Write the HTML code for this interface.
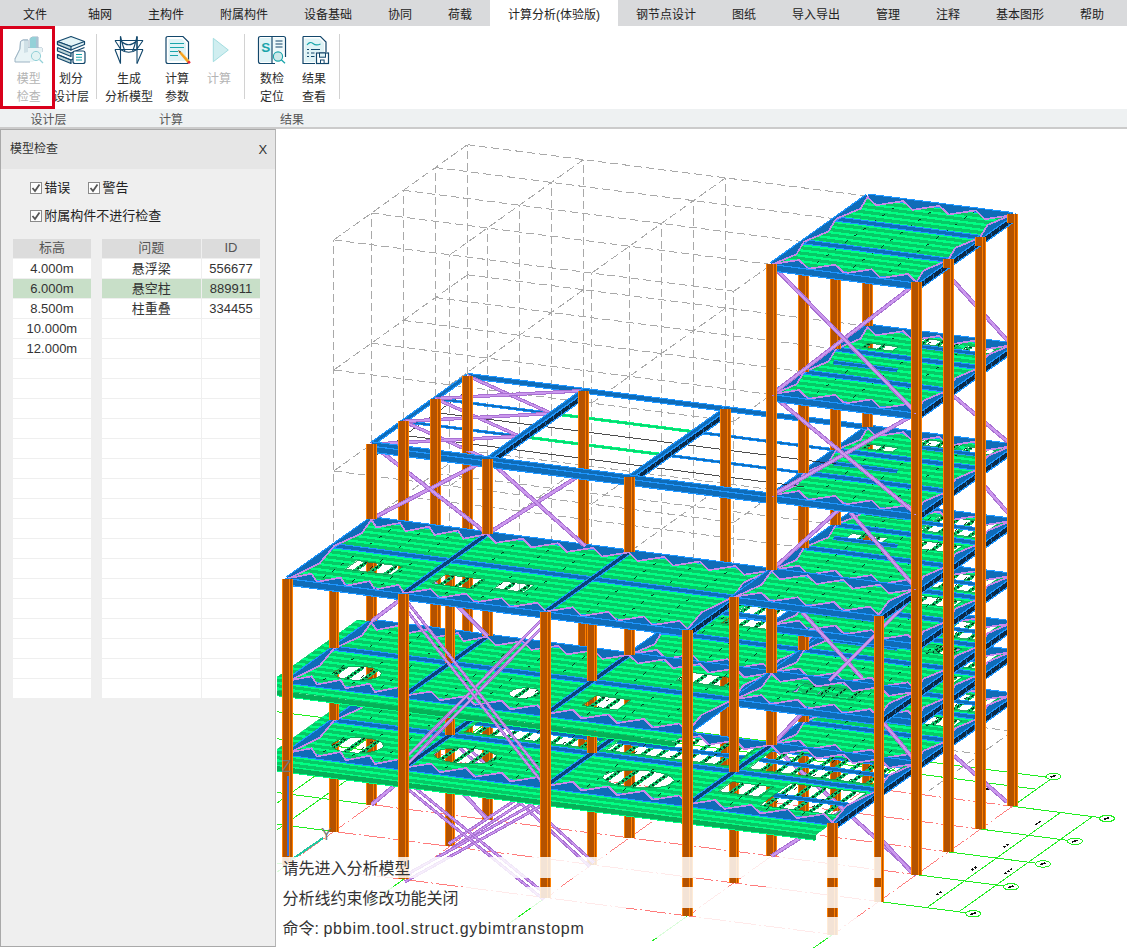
<!DOCTYPE html>
<html lang="zh"><head><meta charset="utf-8"><title>模型检查</title>
<style>
*{margin:0;padding:0;box-sizing:border-box}
html,body{width:1127px;height:948px;overflow:hidden;background:#fff;font-family:"Liberation Sans","Noto Sans CJK SC",sans-serif;}
#app{position:relative;width:1127px;height:948px;overflow:hidden;background:#fff}
.abs{position:absolute}
#tabbar{position:absolute;left:0;top:0;width:1127px;height:26px;background:#d9dadc}
#tabbar .act{position:absolute;left:490px;top:0;width:128px;height:26px;background:#fff}
.tab{position:absolute;top:2px;height:26px;line-height:26px;font-size:12px;color:#222;white-space:nowrap}
#ribbon{position:absolute;left:0;top:26px;width:1127px;height:83px;background:#fff}
#grp{position:absolute;left:0;top:108.5px;width:1127px;height:18.5px;background:#eef1f2}
#grpline{position:absolute;left:0;top:127px;width:1127px;height:2px;background:#cbcbcb}
.gl{position:absolute;top:111px;height:18px;line-height:18px;font-size:12px;color:#555;white-space:nowrap;transform:translateX(-50%)}
.rl{position:absolute;font-size:12px;line-height:17.5px;color:#2b2b2b;text-align:center;white-space:nowrap;transform:translateX(-50%)}
.rl.dis{color:#b4b4b4}
.sep{position:absolute;top:34px;width:1px;height:65px;background:#d2d2d2}
#redbox{position:absolute;left:0;top:26px;width:55px;height:83px;border:3px solid #d9001b;background:#fff}
#panel{position:absolute;left:0;top:129px;width:276px;height:818px;background:#efefef;border:1px solid #a9a9a9;border-right-color:#b5b5b5}
#ptitle{position:absolute;left:0;top:0;width:274px;height:39px;background:#e6e6e6}
#ptitle span{position:absolute;font-size:12px;color:#333;line-height:16px}
.cb{position:absolute;width:12px;height:12px;border:1px solid #8a8a8a;background:#fdfdfd}
.cbt{position:absolute;font-size:13px;color:#222;line-height:16px;white-space:nowrap}
.th{position:absolute;top:239.4px;height:18.4px;background:#dcdcdc;font-size:13px;color:#555;text-align:center;line-height:18px}
.td{position:absolute;height:19.2px;background:#fff;font-size:13px;color:#333;text-align:center;line-height:19px;white-space:nowrap}
.td.hl{background:#c8dfc8}
.band{position:absolute;left:277px;width:604px;height:21px;background:rgba(255,255,255,0.84)}
.cmd{position:absolute;left:282.5px;font-size:16px;color:#333;line-height:20px;white-space:nowrap}
</style></head><body><div id="app">
<svg class="abs" style="left:0;top:0" width="1127" height="948" viewBox="0 0 1127 948">
<defs><clipPath id="vp"><rect x="277" y="129" width="850" height="819"/></clipPath></defs>
<g clip-path="url(#vp)" shape-rendering="crispEdges">
<path d="M237.5 706.7 L467.5 736.3" fill="none" stroke="#22ee22" stroke-width="1"/>
<path d="M467.5 736.3 L1012.5 806.3" fill="none" stroke="#ff6e6e" stroke-width="0.9" stroke-dasharray="22 3 2 3"/>
<path d="M1012.5 806.3 L1099.5 817.5" fill="none" stroke="#22ee22" stroke-width="1"/>
<ellipse cx="1107" cy="818.5" rx="7.5" ry="3.2" fill="#fff" stroke="#22ee22" stroke-width="1"/>
<path d="M1104 819.3L1109.5 817.5" stroke="#111" stroke-width="1.6"/>
<path d="M205.5 729.5 L435.5 759.1" fill="none" stroke="#22ee22" stroke-width="1"/>
<path d="M435.5 759.1 L980.5 829.1" fill="none" stroke="#ff6e6e" stroke-width="0.9" stroke-dasharray="22 3 2 3"/>
<path d="M980.5 829.1 L1067.5 840.3" fill="none" stroke="#22ee22" stroke-width="1"/>
<ellipse cx="1075" cy="841.3" rx="7.5" ry="3.2" fill="#fff" stroke="#22ee22" stroke-width="1"/>
<path d="M1072 842.1L1077.5 840.3" stroke="#111" stroke-width="1.6"/>
<path d="M173.5 752.3 L403.5 781.9" fill="none" stroke="#22ee22" stroke-width="1"/>
<path d="M403.5 781.9 L948.5 851.9" fill="none" stroke="#ff6e6e" stroke-width="0.9" stroke-dasharray="22 3 2 3"/>
<path d="M948.5 851.9 L1035.5 863.1" fill="none" stroke="#22ee22" stroke-width="1"/>
<ellipse cx="1043" cy="864" rx="7.5" ry="3.2" fill="#fff" stroke="#22ee22" stroke-width="1"/>
<path d="M1040 864.8L1045.5 863" stroke="#111" stroke-width="1.6"/>
<path d="M141.5 775.1 L371.5 804.7" fill="none" stroke="#22ee22" stroke-width="1"/>
<path d="M371.5 804.7 L916.5 874.7" fill="none" stroke="#ff6e6e" stroke-width="0.9" stroke-dasharray="22 3 2 3"/>
<path d="M916.5 874.7 L1003.5 885.9" fill="none" stroke="#22ee22" stroke-width="1"/>
<ellipse cx="1011" cy="886.8" rx="7.5" ry="3.2" fill="#fff" stroke="#22ee22" stroke-width="1"/>
<path d="M1008 887.6L1013.5 885.8" stroke="#111" stroke-width="1.6"/>
<path d="M103.8 801.9 L333.8 831.5" fill="none" stroke="#22ee22" stroke-width="1"/>
<path d="M333.8 831.5 L878.8 901.5" fill="none" stroke="#ff6e6e" stroke-width="0.9" stroke-dasharray="22 3 2 3"/>
<path d="M878.8 901.5 L965.8 912.7" fill="none" stroke="#22ee22" stroke-width="1"/>
<ellipse cx="973.3" cy="913.7" rx="7.5" ry="3.2" fill="#fff" stroke="#22ee22" stroke-width="1"/>
<path d="M970.3 914.5L975.8 912.7" stroke="#111" stroke-width="1.6"/>
<path d="M57.5 834.9 L287.5 864.5" fill="none" stroke="#22ee22" stroke-width="1"/>
<path d="M287.5 864.5 L832.5 934.5" fill="none" stroke="#ff6e6e" stroke-width="0.9" stroke-dasharray="22 3 2 3"/>
<path d="M467.5 736.3 L287.5 864.5" fill="none" stroke="#ff6e6e" stroke-width="0.9" stroke-dasharray="22 3 2 3"/>
<path d="M287.5 864.5 L252.5 889.4" fill="none" stroke="#22ee22" stroke-width="1"/>
<path d="M467.5 736.3 L507.5 707.8" fill="none" stroke="#22ee22" stroke-width="1"/>
<path d="M583.5 751.2 L403.5 879.4" fill="none" stroke="#ff6e6e" stroke-width="0.9" stroke-dasharray="22 3 2 3"/>
<path d="M403.5 879.4 L368.5 904.3" fill="none" stroke="#22ee22" stroke-width="1"/>
<path d="M583.5 751.2 L623.5 722.7" fill="none" stroke="#22ee22" stroke-width="1"/>
<path d="M725.5 769.5 L545.5 897.6" fill="none" stroke="#ff6e6e" stroke-width="0.9" stroke-dasharray="22 3 2 3"/>
<path d="M545.5 897.6 L510.5 922.5" fill="none" stroke="#22ee22" stroke-width="1"/>
<path d="M725.5 769.5 L765.5 741" fill="none" stroke="#22ee22" stroke-width="1"/>
<path d="M867.5 787.7 L687.5 915.9" fill="none" stroke="#ff6e6e" stroke-width="0.9" stroke-dasharray="22 3 2 3"/>
<path d="M687.5 915.9 L652.5 940.8" fill="none" stroke="#22ee22" stroke-width="1"/>
<path d="M867.5 787.7 L907.5 759.2" fill="none" stroke="#22ee22" stroke-width="1"/>
<path d="M1012.5 806.3 L832.5 934.5" fill="none" stroke="#ff6e6e" stroke-width="0.9" stroke-dasharray="22 3 2 3"/>
<path d="M832.5 934.5 L797.5 959.4" fill="none" stroke="#22ee22" stroke-width="1"/>
<path d="M1012.5 806.3 L1052.5 777.9" fill="none" stroke="#22ee22" stroke-width="1"/>
<path d="M1060.5 812.5 L926.8 907.7" fill="none" stroke="#22ee22" stroke-width="1"/>
<path d="M1092.5 816.6 L958.8 911.8" fill="none" stroke="#22ee22" stroke-width="1"/>
<path d="M451.5 714.1 L1036.5 789.2" fill="none" stroke="#22ee22" stroke-width="1"/>
<path d="M467.5 702.7 L1052.5 777.9" fill="none" stroke="#22ee22" stroke-width="1"/>
<ellipse cx="1053.5" cy="776.4" rx="7.5" ry="3.2" fill="#fff" stroke="#22ee22" stroke-width="1"/>
<path d="M1050.5 777.2L1056 775.4" stroke="#111" stroke-width="1.6"/>
<path d="M417.5 729.9 L217.5 872.3" fill="none" stroke="#22ee22" stroke-width="1"/>
<path d="M385.5 725.8 L185.5 868.2" fill="none" stroke="#22ee22" stroke-width="1"/>
<path d="M1035.5 824.6L1041.5 820.6" stroke="#111" stroke-width="1.8" stroke-dasharray="2.4 1.2"/>
<path d="M1003.5 847.4L1009.5 843.4" stroke="#111" stroke-width="1.8" stroke-dasharray="2.4 1.2"/>
<path d="M971.5 870.2L977.5 866.2" stroke="#111" stroke-width="1.8" stroke-dasharray="2.4 1.2"/>
<path d="M936.6 895L942.6 891" stroke="#111" stroke-width="1.8" stroke-dasharray="2.4 1.2"/>
<path d="M1004.5 873.9L1012.5 868.4" stroke="#111" stroke-width="1.8" stroke-dasharray="2.4 1.2"/>
<path d="M983.5 788.4L993.5 789.8" stroke="#111" stroke-width="1.8"/>
<path d="M467.5 530.5 L467.5 144.7M435.5 553.3 L435.5 167.5M403.5 576.1 L403.5 190.3M371.5 598.9 L371.5 213.1M333.8 625.7 L333.8 239.9M583.5 545.4 L583.5 159.6M551.5 568.2 L551.5 182.4M519.5 591 L519.5 205.2M487.5 613.8 L487.5 228M449.8 640.6 L449.8 254.8M725.5 563.7 L725.5 177.9M693.5 586.4 L693.5 200.6M661.5 609.2 L661.5 223.4M629.5 632 L629.5 246.2M591.8 658.8 L591.8 273M867.5 581.9 L867.5 196.1M835.5 604.7 L835.5 218.9M803.5 627.5 L803.5 241.7M771.5 650.3 L771.5 264.5M733.8 677.1 L733.8 291.3M467.5 450.5 L867.5 501.9M435.5 473.3 L835.5 524.7M403.5 496.1 L803.5 547.5M371.5 518.9 L771.5 570.3M333.8 545.7 L733.8 597.1M467.5 450.5 L333.8 545.7M583.5 465.4 L449.8 560.6M725.5 483.7 L591.8 578.8M867.5 501.9 L733.8 597.1M467.5 375.8 L867.5 427.2M435.5 398.6 L835.5 450M403.5 421.4 L803.5 472.8M371.5 444.2 L771.5 495.6M333.8 471 L733.8 522.4M467.5 375.8 L333.8 471M583.5 390.7 L449.8 485.9M725.5 409 L591.8 504.1M867.5 427.2 L733.8 522.4M467.5 274.8 L867.5 326.2M435.5 297.6 L835.5 349M403.5 320.4 L803.5 371.8M371.5 343.2 L771.5 394.6M333.8 370 L733.8 421.4M467.5 274.8 L333.8 370M583.5 289.7 L449.8 384.9M725.5 308 L591.8 403.1M867.5 326.2 L733.8 421.4M467.5 144.7 L867.5 196.1M435.5 167.5 L835.5 218.9M403.5 190.3 L803.5 241.7M371.5 213.1 L771.5 264.5M333.8 239.9 L733.8 291.3M467.5 144.7 L333.8 239.9M583.5 159.6 L449.8 254.8M725.5 177.9 L591.8 273M867.5 196.1 L733.8 291.3M733.8 291.3 L771.5 264.5M1012.5 731.3 L929.3 790.6M896.5 716.4 L1012.5 731.3M879 741.1 L980.5 754.1" fill="none" stroke="#a9a9a9" stroke-width="1" stroke-dasharray="8 4"/>
<rect x="462.3" y="625" width="10.4" height="111.3" fill="#b45200"/>
<path d="M462.8 625V736.3M469.9 625V736.3M472.2 625V736.3" stroke="#ff8000" stroke-width="1" fill="none"/>
<rect x="578.3" y="639.9" width="10.4" height="111.3" fill="#b45200"/>
<path d="M578.8 639.9V751.2M585.9 639.9V751.2M588.2 639.9V751.2" stroke="#ff8000" stroke-width="1" fill="none"/>
<rect x="720.3" y="658.2" width="10.4" height="111.3" fill="#b45200"/>
<path d="M720.8 658.2V769.5M727.9 658.2V769.5M730.2 658.2V769.5" stroke="#ff8000" stroke-width="1" fill="none"/>
<rect x="862.3" y="676.4" width="10.4" height="111.3" fill="#b45200"/>
<path d="M862.8 676.4V787.7M869.9 676.4V787.7M872.2 676.4V787.7" stroke="#ff8000" stroke-width="1" fill="none"/>
<rect x="1007.3" y="695" width="10.4" height="111.3" fill="#b45200"/>
<path d="M1007.8 695V806.3M1014.9 695V806.3M1017.2 695V806.3" stroke="#ff8000" stroke-width="1" fill="none"/>
<rect x="430.3" y="647.8" width="10.4" height="111.3" fill="#b45200"/>
<path d="M430.8 647.8V759.1M437.9 647.8V759.1M440.2 647.8V759.1" stroke="#ff8000" stroke-width="1" fill="none"/>
<rect x="830.3" y="699.2" width="10.4" height="111.3" fill="#b45200"/>
<path d="M830.8 699.2V810.5M837.9 699.2V810.5M840.2 699.2V810.5" stroke="#ff8000" stroke-width="1" fill="none"/>
<rect x="975.3" y="717.8" width="10.4" height="111.3" fill="#b45200"/>
<path d="M975.8 717.8V829.1M982.9 717.8V829.1M985.2 717.8V829.1" stroke="#ff8000" stroke-width="1" fill="none"/>
<rect x="398.3" y="670.6" width="10.4" height="111.3" fill="#b45200"/>
<path d="M398.8 670.6V781.9M405.9 670.6V781.9M408.2 670.6V781.9" stroke="#ff8000" stroke-width="1" fill="none"/>
<rect x="798.3" y="722" width="10.4" height="111.3" fill="#b45200"/>
<path d="M798.8 722V833.3M805.9 722V833.3M808.2 722V833.3" stroke="#ff8000" stroke-width="1" fill="none"/>
<rect x="943.3" y="740.6" width="10.4" height="111.3" fill="#b45200"/>
<path d="M943.8 740.6V851.9M950.9 740.6V851.9M953.2 740.6V851.9" stroke="#ff8000" stroke-width="1" fill="none"/>
<rect x="366.3" y="693.4" width="10.4" height="111.3" fill="#b45200"/>
<path d="M366.8 693.4V804.7M373.9 693.4V804.7M376.2 693.4V804.7" stroke="#ff8000" stroke-width="1" fill="none"/>
<rect x="482.3" y="708.3" width="10.4" height="111.3" fill="#b45200"/>
<path d="M482.8 708.3V819.6M489.9 708.3V819.6M492.2 708.3V819.6" stroke="#ff8000" stroke-width="1" fill="none"/>
<rect x="624.3" y="726.5" width="10.4" height="111.3" fill="#b45200"/>
<path d="M624.8 726.5V837.8M631.9 726.5V837.8M634.2 726.5V837.8" stroke="#ff8000" stroke-width="1" fill="none"/>
<rect x="766.3" y="744.8" width="10.4" height="111.3" fill="#b45200"/>
<path d="M766.8 744.8V856.1M773.9 744.8V856.1M776.2 744.8V856.1" stroke="#ff8000" stroke-width="1" fill="none"/>
<rect x="911.3" y="763.4" width="10.4" height="111.3" fill="#b45200"/>
<path d="M911.8 763.4V874.7M918.9 763.4V874.7M921.2 763.4V874.7" stroke="#ff8000" stroke-width="1" fill="none"/>
<path d="M371.5 804.7 L487.5 708.3" fill="none" stroke="#a870d2" stroke-width="4.2" stroke-linecap="butt"/>
<path d="M371.5 804.7 L487.5 708.3" fill="none" stroke="#cc98ee" stroke-width="2.2"/>
<path d="M487.5 819.6 L371.5 693.4" fill="none" stroke="#a870d2" stroke-width="4.2" stroke-linecap="butt"/>
<path d="M487.5 819.6 L371.5 693.4" fill="none" stroke="#cc98ee" stroke-width="2.2"/>
<path d="M771.5 856.1 L916.5 763.4" fill="none" stroke="#a870d2" stroke-width="4.2" stroke-linecap="butt"/>
<path d="M771.5 856.1 L916.5 763.4" fill="none" stroke="#cc98ee" stroke-width="2.2"/>
<path d="M916.5 874.7 L771.5 744.8" fill="none" stroke="#a870d2" stroke-width="4.2" stroke-linecap="butt"/>
<path d="M916.5 874.7 L771.5 744.8" fill="none" stroke="#cc98ee" stroke-width="2.2"/>
<rect x="328.6" y="720.2" width="10.4" height="111.3" fill="#b45200"/>
<path d="M329.1 720.2V831.5M336.2 720.2V831.5M338.5 720.2V831.5" stroke="#ff8000" stroke-width="1" fill="none"/>
<rect x="444.6" y="735.1" width="10.4" height="111.3" fill="#b45200"/>
<path d="M445.1 735.1V846.4M452.2 735.1V846.4M454.5 735.1V846.4" stroke="#ff8000" stroke-width="1" fill="none"/>
<rect x="586.6" y="753.3" width="10.4" height="111.3" fill="#b45200"/>
<path d="M587.1 753.3V864.6M594.2 753.3V864.6M596.5 753.3V864.6" stroke="#ff8000" stroke-width="1" fill="none"/>
<rect x="728.6" y="771.6" width="10.4" height="111.3" fill="#b45200"/>
<path d="M729.1 771.6V882.9M736.2 771.6V882.9M738.5 771.6V882.9" stroke="#ff8000" stroke-width="1" fill="none"/>
<rect x="873.6" y="790.2" width="10.4" height="111.3" fill="#b45200"/>
<path d="M874.1 790.2V901.5M881.2 790.2V901.5M883.5 790.2V901.5" stroke="#ff8000" stroke-width="1" fill="none"/>
<path d="M448.3 844.1 L590.3 751" fill="none" stroke="#a870d2" stroke-width="3.2" stroke-linecap="butt"/>
<path d="M448.3 844.1 L590.3 751" fill="none" stroke="#cc98ee" stroke-width="1.2000000000000002"/>
<path d="M451.3 848.7 L593.3 755.6" fill="none" stroke="#a870d2" stroke-width="3.2" stroke-linecap="butt"/>
<path d="M451.3 848.7 L593.3 755.6" fill="none" stroke="#cc98ee" stroke-width="1.2000000000000002"/>
<path d="M589.9 866.7 L447.9 737.1" fill="none" stroke="#a870d2" stroke-width="3.2" stroke-linecap="butt"/>
<path d="M589.9 866.7 L447.9 737.1" fill="none" stroke="#cc98ee" stroke-width="1.2000000000000002"/>
<path d="M593.7 862.6 L451.7 733.1" fill="none" stroke="#a870d2" stroke-width="3.2" stroke-linecap="butt"/>
<path d="M593.7 862.6 L451.7 733.1" fill="none" stroke="#cc98ee" stroke-width="1.2000000000000002"/>
<rect x="282.3" y="753.2" width="10.4" height="111.3" fill="#b45200"/>
<path d="M282.8 753.2V864.5M289.9 753.2V864.5M292.2 753.2V864.5" stroke="#ff8000" stroke-width="1" fill="none"/>
<rect x="398.3" y="768.1" width="10.4" height="111.3" fill="#b45200"/>
<path d="M398.8 768.1V879.4M405.9 768.1V879.4M408.2 768.1V879.4" stroke="#ff8000" stroke-width="1" fill="none"/>
<rect x="540.3" y="786.3" width="10.4" height="111.3" fill="#b45200"/>
<path d="M540.8 786.3V897.6M547.9 786.3V897.6M550.2 786.3V897.6" stroke="#ff8000" stroke-width="1" fill="none"/>
<rect x="682.3" y="804.6" width="10.4" height="111.3" fill="#b45200"/>
<path d="M682.8 804.6V915.9M689.9 804.6V915.9M692.2 804.6V915.9" stroke="#ff8000" stroke-width="1" fill="none"/>
<rect x="827.3" y="823.2" width="10.4" height="111.3" fill="#b45200"/>
<path d="M827.8 823.2V934.5M834.9 823.2V934.5M837.2 823.2V934.5" stroke="#ff8000" stroke-width="1" fill="none"/>
<path d="M402.2 877 L544.2 797.9" fill="none" stroke="#a870d2" stroke-width="3.2" stroke-linecap="butt"/>
<path d="M402.2 877 L544.2 797.9" fill="none" stroke="#cc98ee" stroke-width="1.2000000000000002"/>
<path d="M404.8 881.8 L546.8 802.7" fill="none" stroke="#a870d2" stroke-width="3.2" stroke-linecap="butt"/>
<path d="M404.8 881.8 L546.8 802.7" fill="none" stroke="#cc98ee" stroke-width="1.2000000000000002"/>
<path d="M543.8 899.7 L401.8 784.2" fill="none" stroke="#a870d2" stroke-width="3.2" stroke-linecap="butt"/>
<path d="M543.8 899.7 L401.8 784.2" fill="none" stroke="#cc98ee" stroke-width="1.2000000000000002"/>
<path d="M547.2 895.5 L405.2 779.9" fill="none" stroke="#a870d2" stroke-width="3.2" stroke-linecap="butt"/>
<path d="M547.2 895.5 L405.2 779.9" fill="none" stroke="#cc98ee" stroke-width="1.2000000000000002"/>
<path d="M881.6 839.5 L913 874" fill="none" stroke="#a870d2" stroke-width="4.2" stroke-linecap="butt"/>
<path d="M881.6 839.5 L913 874" fill="none" stroke="#cc98ee" stroke-width="2.2"/>
<path d="M953.9 755.6 L1007 802" fill="none" stroke="#a870d2" stroke-width="4.2" stroke-linecap="butt"/>
<path d="M953.9 755.6 L1007 802" fill="none" stroke="#cc98ee" stroke-width="2.2"/>
<rect x="1007.3" y="695" width="10.4" height="111.3" fill="#b45200"/>
<path d="M1007.8 695V806.3M1014.9 695V806.3M1017.2 695V806.3" stroke="#ff8000" stroke-width="1" fill="none"/>
<rect x="911.3" y="763.4" width="10.4" height="111.3" fill="#b45200"/>
<path d="M911.8 763.4V874.7M918.9 763.4V874.7M921.2 763.4V874.7" stroke="#ff8000" stroke-width="1" fill="none"/>
<path d="M943.5 691.5L919.5 708.6M958.5 693.5L934.5 710.5M973.5 695.4L949.5 712.5M988.5 697.3L964.5 714.4M926.5 716.2L912.5 726.2M941.5 718.2L927.5 728.1M956.5 720.1L942.5 730.1M881.5 685.2L869.5 693.8M896.5 687.2L884.5 695.7M864.5 710L853.5 717.8M879.5 711.9L868.5 719.7" fill="none" stroke="#0fc468" stroke-width="3.6"/>
<path d="M943.5 691.5L919.5 708.6M958.5 693.5L934.5 710.5M973.5 695.4L949.5 712.5M988.5 697.3L964.5 714.4M926.5 716.2L912.5 726.2M941.5 718.2L927.5 728.1M956.5 720.1L942.5 730.1M881.5 685.2L869.5 693.8M896.5 687.2L884.5 695.7M864.5 710L853.5 717.8M879.5 711.9L868.5 719.7" fill="none" stroke="#053a1e" stroke-width="1.6" stroke-dasharray="2.5 2"/>
<clipPath id="c1"><path d="M867.5 676.4 L1012.5 695 L916.5 763.4 L771.5 744.8ZM939.5 690.7 L997.5 698.1 L977.5 712.4 L919.5 704.9ZM919.5 715 L961.5 720.4 L951.5 727.5 L909.5 722.1ZM873.5 683.9 L909.5 688.5 L901.5 694.2 L865.5 689.6ZM851.5 708 L887.5 712.6 L880.5 717.6 L844.5 712.9Z" clip-rule="evenodd"/></clipPath>
<g clip-path="url(#c1)">
<path d="M867.5 676.4 L1012.5 695 L916.5 763.4 L771.5 744.8Z" fill="#08c866"/>
<path d="M864.3 678.7L1009.3 697.3M857.8 683.3L1002.8 701.9M851.3 687.9L996.3 706.6M844.8 692.6L989.8 711.2M838.3 697.2L983.3 715.8M831.8 701.8L976.8 720.5M825.3 706.4L970.3 725.1M818.8 711.1L963.8 729.7M812.3 715.7L957.3 734.3M805.8 720.3L950.8 739M799.3 725L944.3 743.6M792.8 729.6L937.8 748.2M786.3 734.2L931.3 752.8M779.8 738.8L924.8 757.5M773.3 743.5L918.3 762.1" fill="none" stroke="#00ff84" stroke-width="2.3"/>
</g>
<path d="M939.5 690.7 L997.5 698.1 L977.5 712.4 L919.5 704.9Z" fill="none" stroke="#0a9a50" stroke-width="0.8"/>
<path d="M919.5 715 L961.5 720.4 L951.5 727.5 L909.5 722.1Z" fill="none" stroke="#0a9a50" stroke-width="0.8"/>
<path d="M873.5 683.9 L909.5 688.5 L901.5 694.2 L865.5 689.6Z" fill="none" stroke="#0a9a50" stroke-width="0.8"/>
<path d="M851.5 708 L887.5 712.6 L880.5 717.6 L844.5 712.9Z" fill="none" stroke="#0a9a50" stroke-width="0.8"/>
<path d="M903.8 681.1L807.8 749.4M940 685.7L844 754.1M976.2 690.4L880.2 758.7" fill="none" stroke="#06301c" stroke-width="0.9" stroke-dasharray="3.5 8"/>
<path d="M867.5 676.4 L1012.5 695" fill="none" stroke="#1e96ff" stroke-width="5.4"/>
<path d="M867.5 676.4 L1012.5 695" fill="none" stroke="#0f6cb8" stroke-width="3.2"/>
<path d="M835.5 699.2 L980.5 717.8" fill="none" stroke="#1e96ff" stroke-width="5.4"/>
<path d="M835.5 699.2 L980.5 717.8" fill="none" stroke="#0f6cb8" stroke-width="3.2"/>
<path d="M803.5 722 L948.5 740.6" fill="none" stroke="#1e96ff" stroke-width="5.4"/>
<path d="M803.5 722 L948.5 740.6" fill="none" stroke="#0f6cb8" stroke-width="3.2"/>
<path d="M771.5 744.8 L916.5 763.4" fill="none" stroke="#1e96ff" stroke-width="5.4"/>
<path d="M771.5 744.8 L916.5 763.4" fill="none" stroke="#0f6cb8" stroke-width="3.2"/>
<path d="M867.5 676.4 L771.5 744.8" fill="none" stroke="#1e96ff" stroke-width="5.4"/>
<path d="M867.5 676.4 L771.5 744.8" fill="none" stroke="#0f6cb8" stroke-width="3.2"/>
<path d="M1012.5 695 L916.5 763.4" fill="none" stroke="#1e96ff" stroke-width="5.4"/>
<path d="M1012.5 695 L916.5 763.4" fill="none" stroke="#0f6cb8" stroke-width="3.2"/>
<path d="M867 676.8 L876.1 685.5 L903.2 681.4ZM903.2 681.4 L912.4 690.2 L939.5 686.1ZM939.5 686.1 L948.6 694.8 L975.8 690.7ZM975.8 690.7 L984.9 699.5 L1012 695.4Z" fill="#0f6cb8"/>
<path d="M867 676.8 L876.1 685.5 L903.2 681.4 L912.4 690.2 L939.5 686.1 L948.6 694.8 L975.8 690.7 L984.9 699.5 L1012 695.4" fill="none" stroke="#c888ea" stroke-width="1.7" stroke-linejoin="round"/>
<path d="M772 744.4 L799.1 740.3 L808.2 749.1ZM808.2 749.1 L835.4 745 L844.5 753.7ZM844.5 753.7 L871.6 749.6 L880.8 758.4ZM880.8 758.4 L907.9 754.3 L917 763Z" fill="#0f6cb8"/>
<path d="M772 744.4 L799.1 740.3 L808.2 749.1 L835.4 745 L844.5 753.7 L871.6 749.6 L880.8 758.4 L907.9 754.3 L917 763" fill="none" stroke="#c888ea" stroke-width="1.7" stroke-linejoin="round"/>
<path d="M868 676.5 L860.5 688.9 L836 699.2Z" fill="#0f6cb8"/>
<path d="M868 676.5 L860.5 688.9 L836 699.2" fill="none" stroke="#c888ea" stroke-width="1.7" stroke-linejoin="round"/>
<path d="M1012 695 L987.5 705.3 L980 717.8Z" fill="#0f6cb8"/>
<path d="M1012 695 L987.5 705.3 L980 717.8" fill="none" stroke="#c888ea" stroke-width="1.7" stroke-linejoin="round"/>
<path d="M836 699.2 L828.5 711.7 L804 722Z" fill="#0f6cb8"/>
<path d="M836 699.2 L828.5 711.7 L804 722" fill="none" stroke="#c888ea" stroke-width="1.7" stroke-linejoin="round"/>
<path d="M980 717.8 L955.5 728.1 L948 740.5Z" fill="#0f6cb8"/>
<path d="M980 717.8 L955.5 728.1 L948 740.5" fill="none" stroke="#c888ea" stroke-width="1.7" stroke-linejoin="round"/>
<path d="M804 722 L796.5 734.5 L772 744.8Z" fill="#0f6cb8"/>
<path d="M804 722 L796.5 734.5 L772 744.8" fill="none" stroke="#c888ea" stroke-width="1.7" stroke-linejoin="round"/>
<path d="M948 740.5 L923.5 750.8 L916 763.3Z" fill="#0f6cb8"/>
<path d="M948 740.5 L923.5 750.8 L916 763.3" fill="none" stroke="#c888ea" stroke-width="1.7" stroke-linejoin="round"/>
<path d="M769.5 744.5 L918.5 763.6 L918.5 770.1 L769.5 751Z" fill="#0f6cb8"/>
<path d="M769.5 751 L918.5 770.1" fill="none" stroke="#1e96ff" stroke-width="1.2"/>
<path d="M769.5 744.5 L918.5 763.6" fill="none" stroke="#1e96ff" stroke-width="1.2"/>
<path d="M1016.5 693.9 L916.5 765.1 L916.5 771.6 L1016.5 700.4Z" fill="#0b2a48"/>
<path d="M1016.5 700.4 L916.5 771.6" fill="none" stroke="#1e96ff" stroke-width="1.3"/>
<path d="M1016.5 693.9 L916.5 765.1" fill="none" stroke="#1e96ff" stroke-width="1.3"/>
<path d="M1008.2 701.3L1008.2 704.8M999.8 707.2L999.8 710.7M991.5 713.2L991.5 716.7M983.2 719.1L983.2 722.6M974.8 725L974.8 728.5M966.5 731L966.5 734.5M958.2 736.9L958.2 740.4M949.8 742.8L949.8 746.3M941.5 748.8L941.5 752.3M933.2 754.7L933.2 758.2M924.8 760.6L924.8 764.1" fill="none" stroke="#1878d0" stroke-width="0.8"/>
<path d="M921.5 696.8 L982.5 704.6" fill="none" stroke="#1e96ff" stroke-width="4.4"/>
<path d="M921.5 696.8 L982.5 704.6" fill="none" stroke="#0f6cb8" stroke-width="2.6"/>
<path d="M833.5 712.4 L897.5 720.6" fill="none" stroke="#1e96ff" stroke-width="4.4"/>
<path d="M833.5 712.4 L897.5 720.6" fill="none" stroke="#0f6cb8" stroke-width="2.6"/>
<path d="M349.5 736.2L325.5 753.3M364.5 738.2L340.5 755.2M379.5 740.1L355.5 757.2M458.5 746.9L434.5 764M473.5 748.8L449.5 765.9M488.5 750.7L464.5 767.8M503.5 752.7L479.5 769.7M503.5 714.8L472.5 736.9M518.5 716.8L487.5 738.8M533.5 718.7L502.5 740.8M548.5 720.6L517.5 742.7M563.5 722.5L532.5 744.6M578.5 724.5L547.5 746.5M593.5 726.4L562.5 748.5M608.5 728.3L577.5 750.4M638.5 732.2L607.5 754.3M653.5 734.1L622.5 756.2M668.5 736L637.5 758.1M683.5 738L652.5 760M698.5 739.9L667.5 762M713.5 741.8L682.5 763.9M728.5 743.7L697.5 765.8M743.5 745.7L712.5 767.7M758.5 747.6L727.5 769.7M623.5 768.1L597.5 786.6M638.5 770L612.5 788.5M653.5 771.9L627.5 790.4M668.5 773.9L642.5 792.4M683.5 775.8L657.5 794.3M788.5 751.5L757.5 773.5M803.5 753.4L772.5 775.5M818.5 755.3L787.5 777.4M833.5 757.2L802.5 779.3M848.5 759.2L817.5 781.2M863.5 761.1L832.5 783.2M878.5 763L847.5 785.1M893.5 765L862.5 787M795.5 784.3L760.5 809.2M810.5 786.2L775.5 811.1M825.5 788.2L790.5 813.1M840.5 790.1L805.5 815M855.5 792L820.5 816.9M743.5 783.5L725.5 796.3M758.5 785.4L740.5 798.2M773.5 787.4L755.5 800.2" fill="none" stroke="#0fc468" stroke-width="3.6"/>
<path d="M349.5 736.2L325.5 753.3M364.5 738.2L340.5 755.2M379.5 740.1L355.5 757.2M458.5 746.9L434.5 764M473.5 748.8L449.5 765.9M488.5 750.7L464.5 767.8M503.5 752.7L479.5 769.7M503.5 714.8L472.5 736.9M518.5 716.8L487.5 738.8M533.5 718.7L502.5 740.8M548.5 720.6L517.5 742.7M563.5 722.5L532.5 744.6M578.5 724.5L547.5 746.5M593.5 726.4L562.5 748.5M608.5 728.3L577.5 750.4M638.5 732.2L607.5 754.3M653.5 734.1L622.5 756.2M668.5 736L637.5 758.1M683.5 738L652.5 760M698.5 739.9L667.5 762M713.5 741.8L682.5 763.9M728.5 743.7L697.5 765.8M743.5 745.7L712.5 767.7M758.5 747.6L727.5 769.7M623.5 768.1L597.5 786.6M638.5 770L612.5 788.5M653.5 771.9L627.5 790.4M668.5 773.9L642.5 792.4M683.5 775.8L657.5 794.3M788.5 751.5L757.5 773.5M803.5 753.4L772.5 775.5M818.5 755.3L787.5 777.4M833.5 757.2L802.5 779.3M848.5 759.2L817.5 781.2M863.5 761.1L832.5 783.2M878.5 763L847.5 785.1M893.5 765L862.5 787M795.5 784.3L760.5 809.2M810.5 786.2L775.5 811.1M825.5 788.2L790.5 813.1M840.5 790.1L805.5 815M855.5 792L820.5 816.9M743.5 783.5L725.5 796.3M758.5 785.4L740.5 798.2M773.5 787.4L755.5 800.2" fill="none" stroke="#053a1e" stroke-width="1.6" stroke-dasharray="2.5 2"/>
<path d="M475 723.2 L605 739.9" fill="none" stroke="#1e96ff" stroke-width="4.6"/>
<path d="M475 723.2 L605 739.9" fill="none" stroke="#0f6cb8" stroke-width="2.8"/>
<path d="M617 741.4 L747 758.2" fill="none" stroke="#1e96ff" stroke-width="4.6"/>
<path d="M617 741.4 L747 758.2" fill="none" stroke="#0f6cb8" stroke-width="2.8"/>
<path d="M759 759.7 L892 776.8" fill="none" stroke="#1e96ff" stroke-width="4.6"/>
<path d="M759 759.7 L892 776.8" fill="none" stroke="#0f6cb8" stroke-width="2.8"/>
<path d="M773 795.1 L852 805.3" fill="none" stroke="#1e96ff" stroke-width="4.6"/>
<path d="M773 795.1 L852 805.3" fill="none" stroke="#0f6cb8" stroke-width="2.8"/>
<clipPath id="c2"><path d="M357.5 691.6 L916.5 763.4 L815.5 835.3 L256.5 763.5ZM381.5 748.4 L383.4 746.1 L382.8 743.7 L379.7 741.4 L374.4 739.5 L367.5 738.2 L359.6 737.6 L351.5 737.8 L344 738.7 L337.8 740.2 L333.5 742.3 L331.6 744.6 L332.2 747 L335.3 749.3 L340.6 751.2 L347.5 752.5 L355.4 753.1 L363.5 752.9 L371 752 L377.2 750.5ZM495.5 759.7 L497.1 757.3 L495.6 754.8 L491.2 752.4 L484.3 750.3 L475.5 748.7 L465.7 747.9 L456 747.8 L447.1 748.6 L440.1 750 L435.5 752 L433.9 754.4 L435.4 756.9 L439.8 759.4 L446.7 761.4 L455.5 763 L465.3 763.8 L475 763.9 L483.9 763.2 L490.9 761.7ZM490.5 712.8 L616.5 729 L589.5 748.3 L463.5 732.1ZM632.5 731.1 L758.5 747.3 L731.5 766.5 L605.5 750.3ZM672.5 783.3 L674.2 780.7 L672.5 777.9 L667.4 775.2 L659.5 772.8 L649.5 771.1 L638.5 770.1 L627.4 770 L617.5 770.8 L609.6 772.4 L604.5 774.6 L602.8 777.2 L604.5 780 L609.6 782.7 L617.5 785 L627.5 786.8 L638.5 787.7 L649.6 787.8 L659.5 787.1 L667.4 785.5ZM774.5 749.3 L903.5 765.9 L876.5 785.1 L747.5 768.6ZM790.5 783.3 L865.5 793 L834.5 815 L759.5 805.4ZM731.5 781.6 L773.5 787 L759.5 797 L717.5 791.6Z" clip-rule="evenodd"/></clipPath>
<g clip-path="url(#c2)">
<path d="M357.5 691.6 L916.5 763.4 L815.5 835.3 L256.5 763.5Z" fill="#08c866"/>
<path d="M354.3 693.8L913.3 765.7M347.8 698.5L906.8 770.3M341.3 703.1L900.3 774.9M334.8 707.7L893.8 779.5M328.3 712.3L887.3 784.2M321.8 717L880.8 788.8M315.3 721.6L874.3 793.4M308.8 726.2L867.8 798.1M302.3 730.9L861.3 802.7M295.8 735.5L854.8 807.3M289.3 740.1L848.3 811.9M282.8 744.7L841.8 816.6M276.3 749.4L835.3 821.2M269.8 754L828.8 825.8M263.3 758.6L822.3 830.5M256.8 763.3L815.8 835.1" fill="none" stroke="#00ff84" stroke-width="2.3"/>
</g>
<path d="M381.5 748.4 L383.4 746.1 L382.8 743.7 L379.7 741.4 L374.4 739.5 L367.5 738.2 L359.6 737.6 L351.5 737.8 L344 738.7 L337.8 740.2 L333.5 742.3 L331.6 744.6 L332.2 747 L335.3 749.3 L340.6 751.2 L347.5 752.5 L355.4 753.1 L363.5 752.9 L371 752 L377.2 750.5Z" fill="none" stroke="#0a9a50" stroke-width="0.8"/>
<path d="M495.5 759.7 L497.1 757.3 L495.6 754.8 L491.2 752.4 L484.3 750.3 L475.5 748.7 L465.7 747.9 L456 747.8 L447.1 748.6 L440.1 750 L435.5 752 L433.9 754.4 L435.4 756.9 L439.8 759.4 L446.7 761.4 L455.5 763 L465.3 763.8 L475 763.9 L483.9 763.2 L490.9 761.7Z" fill="none" stroke="#0a9a50" stroke-width="0.8"/>
<path d="M490.5 712.8 L616.5 729 L589.5 748.3 L463.5 732.1Z" fill="none" stroke="#0a9a50" stroke-width="0.8"/>
<path d="M632.5 731.1 L758.5 747.3 L731.5 766.5 L605.5 750.3Z" fill="none" stroke="#0a9a50" stroke-width="0.8"/>
<path d="M672.5 783.3 L674.2 780.7 L672.5 777.9 L667.4 775.2 L659.5 772.8 L649.5 771.1 L638.5 770.1 L627.4 770 L617.5 770.8 L609.6 772.4 L604.5 774.6 L602.8 777.2 L604.5 780 L609.6 782.7 L617.5 785 L627.5 786.8 L638.5 787.7 L649.6 787.8 L659.5 787.1 L667.4 785.5Z" fill="none" stroke="#0a9a50" stroke-width="0.8"/>
<path d="M774.5 749.3 L903.5 765.9 L876.5 785.1 L747.5 768.6Z" fill="none" stroke="#0a9a50" stroke-width="0.8"/>
<path d="M790.5 783.3 L865.5 793 L834.5 815 L759.5 805.4Z" fill="none" stroke="#0a9a50" stroke-width="0.8"/>
<path d="M731.5 781.6 L773.5 787 L759.5 797 L717.5 791.6Z" fill="none" stroke="#0a9a50" stroke-width="0.8"/>
<path d="M400.5 697.1L316.5 756.9M429.5 700.8L345.5 760.6M458.5 704.5L374.5 764.3M523 712.8L439 772.6M558.5 717.4L474.5 777.2M594 721.9L510 781.8M665 731.1L581 790.9M700.5 735.6L616.5 795.4M736 740.2L652 800M807.8 749.4L723.8 809.2M844 754.1L760 813.9M880.2 758.7L796.2 818.5" fill="none" stroke="#06301c" stroke-width="0.9" stroke-dasharray="3.5 8"/>
<path d="M371.5 693.4 L916.5 763.4" fill="none" stroke="#1e96ff" stroke-width="5.4"/>
<path d="M371.5 693.4 L916.5 763.4" fill="none" stroke="#0f6cb8" stroke-width="3.2"/>
<path d="M333.8 720.2 L878.8 790.2" fill="none" stroke="#1e96ff" stroke-width="5.4"/>
<path d="M333.8 720.2 L878.8 790.2" fill="none" stroke="#0f6cb8" stroke-width="3.2"/>
<path d="M287.5 753.2 L832.5 823.2" fill="none" stroke="#1e96ff" stroke-width="5.4"/>
<path d="M287.5 753.2 L832.5 823.2" fill="none" stroke="#0f6cb8" stroke-width="3.2"/>
<path d="M371.5 693.4 L287.5 753.2" fill="none" stroke="#1e96ff" stroke-width="5.4"/>
<path d="M371.5 693.4 L287.5 753.2" fill="none" stroke="#0f6cb8" stroke-width="3.2"/>
<path d="M487.5 708.3 L403.5 768.1" fill="none" stroke="#1e96ff" stroke-width="5.4"/>
<path d="M487.5 708.3 L403.5 768.1" fill="none" stroke="#0c4278" stroke-width="3.2"/>
<path d="M629.5 726.5 L545.5 786.3" fill="none" stroke="#1e96ff" stroke-width="5.4"/>
<path d="M629.5 726.5 L545.5 786.3" fill="none" stroke="#0c4278" stroke-width="3.2"/>
<path d="M771.5 744.8 L687.5 804.6" fill="none" stroke="#1e96ff" stroke-width="5.4"/>
<path d="M771.5 744.8 L687.5 804.6" fill="none" stroke="#0c4278" stroke-width="3.2"/>
<path d="M916.5 763.4 L832.5 823.2" fill="none" stroke="#1e96ff" stroke-width="5.4"/>
<path d="M916.5 763.4 L832.5 823.2" fill="none" stroke="#0f6cb8" stroke-width="3.2"/>
<path d="M371 693.7 L376.5 702 L400 697.4ZM400 697.4 L405.5 705.7 L429 701.2ZM429 701.2 L434.5 709.4 L458 704.9ZM458 704.9 L463.5 713.2 L487 708.6Z" fill="#0f6cb8"/>
<path d="M371 693.7 L376.5 702 L400 697.4 L405.5 705.7 L429 701.2 L434.5 709.4 L458 704.9 L463.5 713.2 L487 708.6" fill="none" stroke="#c888ea" stroke-width="1.7" stroke-linejoin="round"/>
<path d="M288 752.8 L311.5 748.3 L317 756.5ZM317 756.5 L340.5 752 L346 760.3ZM346 760.3 L369.5 755.7 L375 764ZM375 764 L398.5 759.4 L404 767.7Z" fill="#0f6cb8"/>
<path d="M288 752.8 L311.5 748.3 L317 756.5 L340.5 752 L346 760.3 L369.5 755.7 L375 764 L398.5 759.4 L404 767.7" fill="none" stroke="#c888ea" stroke-width="1.7" stroke-linejoin="round"/>
<path d="M487 708.6 L495.8 717.3 L522.5 713.2ZM522.5 713.2 L531.2 721.9 L558 717.7ZM558 717.7 L566.8 726.4 L593.5 722.3ZM593.5 722.3 L602.2 731 L629 726.9Z" fill="#0f6cb8"/>
<path d="M487 708.6 L495.8 717.3 L522.5 713.2 L531.2 721.9 L558 717.7 L566.8 726.4 L593.5 722.3 L602.2 731 L629 726.9" fill="none" stroke="#c888ea" stroke-width="1.7" stroke-linejoin="round"/>
<path d="M404 767.7 L430.8 763.6 L439.5 772.3ZM439.5 772.3 L466.2 768.1 L475 776.8ZM475 776.8 L501.8 772.7 L510.5 781.4ZM510.5 781.4 L537.2 777.3 L546 786Z" fill="#0f6cb8"/>
<path d="M404 767.7 L430.8 763.6 L439.5 772.3 L466.2 768.1 L475 776.8 L501.8 772.7 L510.5 781.4 L537.2 777.3 L546 786" fill="none" stroke="#c888ea" stroke-width="1.7" stroke-linejoin="round"/>
<path d="M629 726.9 L637.8 735.5 L664.5 731.4ZM664.5 731.4 L673.2 740.1 L700 736ZM700 736 L708.8 744.7 L735.5 740.5ZM735.5 740.5 L744.2 749.2 L771 745.1Z" fill="#0f6cb8"/>
<path d="M629 726.9 L637.8 735.5 L664.5 731.4 L673.2 740.1 L700 736 L708.8 744.7 L735.5 740.5 L744.2 749.2 L771 745.1" fill="none" stroke="#c888ea" stroke-width="1.7" stroke-linejoin="round"/>
<path d="M546 786 L572.8 781.8 L581.5 790.5ZM581.5 790.5 L608.2 786.4 L617 795.1ZM617 795.1 L643.8 791 L652.5 799.6ZM652.5 799.6 L679.2 795.5 L688 804.2Z" fill="#0f6cb8"/>
<path d="M546 786 L572.8 781.8 L581.5 790.5 L608.2 786.4 L617 795.1 L643.8 791 L652.5 799.6 L679.2 795.5 L688 804.2" fill="none" stroke="#c888ea" stroke-width="1.7" stroke-linejoin="round"/>
<path d="M771 745.1 L780.1 753.8 L807.2 749.8ZM807.2 749.8 L816.4 758.5 L843.5 754.4ZM843.5 754.4 L852.6 763.2 L879.8 759.1ZM879.8 759.1 L888.9 767.8 L916 763.7Z" fill="#0f6cb8"/>
<path d="M771 745.1 L780.1 753.8 L807.2 749.8 L816.4 758.5 L843.5 754.4 L852.6 763.2 L879.8 759.1 L888.9 767.8 L916 763.7" fill="none" stroke="#c888ea" stroke-width="1.7" stroke-linejoin="round"/>
<path d="M688 804.2 L715.1 800.1 L724.2 808.9ZM724.2 808.9 L751.4 804.8 L760.5 813.5ZM760.5 813.5 L787.6 809.4 L796.8 818.2ZM796.8 818.2 L823.9 814.1 L833 822.8Z" fill="#0f6cb8"/>
<path d="M688 804.2 L715.1 800.1 L724.2 808.9 L751.4 804.8 L760.5 813.5 L787.6 809.4 L796.8 818.2 L823.9 814.1 L833 822.8" fill="none" stroke="#c888ea" stroke-width="1.7" stroke-linejoin="round"/>
<path d="M372 693.4 L361.6 707.9 L334.3 720.3Z" fill="#0f6cb8"/>
<path d="M372 693.4 L361.6 707.9 L334.3 720.3" fill="none" stroke="#c888ea" stroke-width="1.7" stroke-linejoin="round"/>
<path d="M916 763.3 L888.6 775.6 L878.3 790.2Z" fill="#0f6cb8"/>
<path d="M916 763.3 L888.6 775.6 L878.3 790.2" fill="none" stroke="#c888ea" stroke-width="1.7" stroke-linejoin="round"/>
<path d="M334.3 720.3 L319.6 737.8 L288 753.2Z" fill="#0f6cb8"/>
<path d="M334.3 720.3 L319.6 737.8 L288 753.2" fill="none" stroke="#c888ea" stroke-width="1.7" stroke-linejoin="round"/>
<path d="M878.3 790.2 L846.6 805.6 L832 823.1Z" fill="#0f6cb8"/>
<path d="M878.3 790.2 L846.6 805.6 L832 823.1" fill="none" stroke="#c888ea" stroke-width="1.7" stroke-linejoin="round"/>
<path d="M256.5 763.5 L815.5 835.3 L815.5 840.3 L256.5 768.5Z" fill="#06b058"/>
<path d="M256.5 768.5 L815.5 840.3" fill="none" stroke="#00ff84" stroke-width="1"/>
<path d="M920.5 762.2 L832.5 824.9 L832.5 831.4 L920.5 768.7Z" fill="#0b2a48"/>
<path d="M920.5 768.7 L832.5 831.4" fill="none" stroke="#1e96ff" stroke-width="1.3"/>
<path d="M920.5 762.2 L832.5 824.9" fill="none" stroke="#1e96ff" stroke-width="1.3"/>
<path d="M912.5 769.4L912.5 772.9M904.5 775.1L904.5 778.6M896.5 780.8L896.5 784.3M888.5 786.5L888.5 790M880.5 792.2L880.5 795.7M872.5 797.9L872.5 801.4M864.5 803.6L864.5 807.1M856.5 809.3L856.5 812.8M848.5 815L848.5 818.5M840.5 820.7L840.5 824.2" fill="none" stroke="#1878d0" stroke-width="0.8"/>
<rect x="282.3" y="753.2" width="10.4" height="111.3" fill="#b45200"/>
<path d="M282.8 753.2V864.5M289.9 753.2V864.5M292.2 753.2V864.5" stroke="#ff8000" stroke-width="1" fill="none"/>
<rect x="398.3" y="768.1" width="10.4" height="111.3" fill="#b45200"/>
<path d="M398.8 768.1V879.4M405.9 768.1V879.4M408.2 768.1V879.4" stroke="#ff8000" stroke-width="1" fill="none"/>
<rect x="540.3" y="786.3" width="10.4" height="111.3" fill="#b45200"/>
<path d="M540.8 786.3V897.6M547.9 786.3V897.6M550.2 786.3V897.6" stroke="#ff8000" stroke-width="1" fill="none"/>
<rect x="682.3" y="804.6" width="10.4" height="111.3" fill="#b45200"/>
<path d="M682.8 804.6V915.9M689.9 804.6V915.9M692.2 804.6V915.9" stroke="#ff8000" stroke-width="1" fill="none"/>
<rect x="827.3" y="823.2" width="10.4" height="111.3" fill="#b45200"/>
<path d="M827.8 823.2V934.5M834.9 823.2V934.5M837.2 823.2V934.5" stroke="#ff8000" stroke-width="1" fill="none"/>
<rect x="1007.3" y="695" width="10.4" height="111.3" fill="#b45200"/>
<path d="M1007.8 695V806.3M1014.9 695V806.3M1017.2 695V806.3" stroke="#ff8000" stroke-width="1" fill="none"/>
<rect x="975.3" y="717.8" width="10.4" height="111.3" fill="#b45200"/>
<path d="M975.8 717.8V829.1M982.9 717.8V829.1M985.2 717.8V829.1" stroke="#ff8000" stroke-width="1" fill="none"/>
<rect x="943.3" y="740.6" width="10.4" height="111.3" fill="#b45200"/>
<path d="M943.8 740.6V851.9M950.9 740.6V851.9M953.2 740.6V851.9" stroke="#ff8000" stroke-width="1" fill="none"/>
<rect x="911.3" y="763.4" width="10.4" height="111.3" fill="#b45200"/>
<path d="M911.8 763.4V874.7M918.9 763.4V874.7M921.2 763.4V874.7" stroke="#ff8000" stroke-width="1" fill="none"/>
<rect x="873.6" y="790.2" width="10.4" height="111.3" fill="#b45200"/>
<path d="M874.1 790.2V901.5M881.2 790.2V901.5M883.5 790.2V901.5" stroke="#ff8000" stroke-width="1" fill="none"/>
<rect x="462.3" y="581.6" width="10.4" height="43.4" fill="#b45200"/>
<path d="M462.8 581.6V625M469.9 581.6V625M472.2 581.6V625" stroke="#ff8000" stroke-width="1" fill="none"/>
<rect x="578.3" y="596.5" width="10.4" height="43.4" fill="#b45200"/>
<path d="M578.8 596.5V639.9M585.9 596.5V639.9M588.2 596.5V639.9" stroke="#ff8000" stroke-width="1" fill="none"/>
<rect x="720.3" y="614.8" width="10.4" height="43.4" fill="#b45200"/>
<path d="M720.8 614.8V658.2M727.9 614.8V658.2M730.2 614.8V658.2" stroke="#ff8000" stroke-width="1" fill="none"/>
<rect x="862.3" y="633" width="10.4" height="43.4" fill="#b45200"/>
<path d="M862.8 633V676.4M869.9 633V676.4M872.2 633V676.4" stroke="#ff8000" stroke-width="1" fill="none"/>
<rect x="1007.3" y="651.6" width="10.4" height="43.4" fill="#b45200"/>
<path d="M1007.8 651.6V695M1014.9 651.6V695M1017.2 651.6V695" stroke="#ff8000" stroke-width="1" fill="none"/>
<rect x="430.3" y="604.4" width="10.4" height="43.4" fill="#b45200"/>
<path d="M430.8 604.4V647.8M437.9 604.4V647.8M440.2 604.4V647.8" stroke="#ff8000" stroke-width="1" fill="none"/>
<rect x="830.3" y="655.8" width="10.4" height="43.4" fill="#b45200"/>
<path d="M830.8 655.8V699.2M837.9 655.8V699.2M840.2 655.8V699.2" stroke="#ff8000" stroke-width="1" fill="none"/>
<rect x="975.3" y="674.4" width="10.4" height="43.4" fill="#b45200"/>
<path d="M975.8 674.4V717.8M982.9 674.4V717.8M985.2 674.4V717.8" stroke="#ff8000" stroke-width="1" fill="none"/>
<rect x="398.3" y="627.2" width="10.4" height="43.4" fill="#b45200"/>
<path d="M398.8 627.2V670.6M405.9 627.2V670.6M408.2 627.2V670.6" stroke="#ff8000" stroke-width="1" fill="none"/>
<rect x="798.3" y="678.6" width="10.4" height="43.4" fill="#b45200"/>
<path d="M798.8 678.6V722M805.9 678.6V722M808.2 678.6V722" stroke="#ff8000" stroke-width="1" fill="none"/>
<rect x="943.3" y="697.2" width="10.4" height="43.4" fill="#b45200"/>
<path d="M943.8 697.2V740.6M950.9 697.2V740.6M953.2 697.2V740.6" stroke="#ff8000" stroke-width="1" fill="none"/>
<rect x="366.3" y="650" width="10.4" height="43.4" fill="#b45200"/>
<path d="M366.8 650V693.4M373.9 650V693.4M376.2 650V693.4" stroke="#ff8000" stroke-width="1" fill="none"/>
<rect x="482.3" y="664.9" width="10.4" height="43.4" fill="#b45200"/>
<path d="M482.8 664.9V708.3M489.9 664.9V708.3M492.2 664.9V708.3" stroke="#ff8000" stroke-width="1" fill="none"/>
<rect x="624.3" y="683.1" width="10.4" height="43.4" fill="#b45200"/>
<path d="M624.8 683.1V726.5M631.9 683.1V726.5M634.2 683.1V726.5" stroke="#ff8000" stroke-width="1" fill="none"/>
<rect x="766.3" y="701.4" width="10.4" height="43.4" fill="#b45200"/>
<path d="M766.8 701.4V744.8M773.9 701.4V744.8M776.2 701.4V744.8" stroke="#ff8000" stroke-width="1" fill="none"/>
<rect x="911.3" y="720" width="10.4" height="43.4" fill="#b45200"/>
<path d="M911.8 720V763.4M918.9 720V763.4M921.2 720V763.4" stroke="#ff8000" stroke-width="1" fill="none"/>
<rect x="328.6" y="676.8" width="10.4" height="43.4" fill="#b45200"/>
<path d="M329.1 676.8V720.2M336.2 676.8V720.2M338.5 676.8V720.2" stroke="#ff8000" stroke-width="1" fill="none"/>
<rect x="444.6" y="691.7" width="10.4" height="43.4" fill="#b45200"/>
<path d="M445.1 691.7V735.1M452.2 691.7V735.1M454.5 691.7V735.1" stroke="#ff8000" stroke-width="1" fill="none"/>
<rect x="586.6" y="709.9" width="10.4" height="43.4" fill="#b45200"/>
<path d="M587.1 709.9V753.3M594.2 709.9V753.3M596.5 709.9V753.3" stroke="#ff8000" stroke-width="1" fill="none"/>
<rect x="728.6" y="728.2" width="10.4" height="43.4" fill="#b45200"/>
<path d="M729.1 728.2V771.6M736.2 728.2V771.6M738.5 728.2V771.6" stroke="#ff8000" stroke-width="1" fill="none"/>
<rect x="873.6" y="746.8" width="10.4" height="43.4" fill="#b45200"/>
<path d="M874.1 746.8V790.2M881.2 746.8V790.2M883.5 746.8V790.2" stroke="#ff8000" stroke-width="1" fill="none"/>
<rect x="282.3" y="709.8" width="10.4" height="43.4" fill="#b45200"/>
<path d="M282.8 709.8V753.2M289.9 709.8V753.2M292.2 709.8V753.2" stroke="#ff8000" stroke-width="1" fill="none"/>
<rect x="398.3" y="724.7" width="10.4" height="43.4" fill="#b45200"/>
<path d="M398.8 724.7V768.1M405.9 724.7V768.1M408.2 724.7V768.1" stroke="#ff8000" stroke-width="1" fill="none"/>
<rect x="540.3" y="742.9" width="10.4" height="43.4" fill="#b45200"/>
<path d="M540.8 742.9V786.3M547.9 742.9V786.3M550.2 742.9V786.3" stroke="#ff8000" stroke-width="1" fill="none"/>
<rect x="682.3" y="761.2" width="10.4" height="43.4" fill="#b45200"/>
<path d="M682.8 761.2V804.6M689.9 761.2V804.6M692.2 761.2V804.6" stroke="#ff8000" stroke-width="1" fill="none"/>
<path d="M943.5 648.1L919.5 665.2M958.5 650.1L934.5 667.1M973.5 652L949.5 669.1M988.5 653.9L964.5 671M926.5 672.8L912.5 682.8M941.5 674.8L927.5 684.7M956.5 676.7L942.5 686.7M881.5 641.8L869.5 650.4M896.5 643.8L884.5 652.3" fill="none" stroke="#0fc468" stroke-width="3.6"/>
<path d="M943.5 648.1L919.5 665.2M958.5 650.1L934.5 667.1M973.5 652L949.5 669.1M988.5 653.9L964.5 671M926.5 672.8L912.5 682.8M941.5 674.8L927.5 684.7M956.5 676.7L942.5 686.7M881.5 641.8L869.5 650.4M896.5 643.8L884.5 652.3" fill="none" stroke="#053a1e" stroke-width="1.6" stroke-dasharray="2.5 2"/>
<clipPath id="c3"><path d="M867.5 633 L1012.5 651.6 L916.5 720 L771.5 701.4ZM939.5 647.3 L997.5 654.7 L977.5 669 L919.5 661.5ZM919.5 671.6 L961.5 677 L951.5 684.1 L909.5 678.7ZM873.5 640.5 L909.5 645.1 L901.5 650.8 L865.5 646.2Z" clip-rule="evenodd"/></clipPath>
<g clip-path="url(#c3)">
<path d="M867.5 633 L1012.5 651.6 L916.5 720 L771.5 701.4Z" fill="#08c866"/>
<path d="M864.3 635.3L1009.3 653.9M857.8 639.9L1002.8 658.5M851.3 644.5L996.3 663.2M844.8 649.2L989.8 667.8M838.3 653.8L983.3 672.4M831.8 658.4L976.8 677.1M825.3 663L970.3 681.7M818.8 667.7L963.8 686.3M812.3 672.3L957.3 690.9M805.8 676.9L950.8 695.6M799.3 681.6L944.3 700.2M792.8 686.2L937.8 704.8M786.3 690.8L931.3 709.4M779.8 695.4L924.8 714.1M773.3 700.1L918.3 718.7" fill="none" stroke="#00ff84" stroke-width="2.3"/>
</g>
<path d="M939.5 647.3 L997.5 654.7 L977.5 669 L919.5 661.5Z" fill="none" stroke="#0a9a50" stroke-width="0.8"/>
<path d="M919.5 671.6 L961.5 677 L951.5 684.1 L909.5 678.7Z" fill="none" stroke="#0a9a50" stroke-width="0.8"/>
<path d="M873.5 640.5 L909.5 645.1 L901.5 650.8 L865.5 646.2Z" fill="none" stroke="#0a9a50" stroke-width="0.8"/>
<path d="M903.8 637.7L807.8 706M940 642.3L844 710.7M976.2 647L880.2 715.3" fill="none" stroke="#06301c" stroke-width="0.9" stroke-dasharray="3.5 8"/>
<path d="M867.5 633 L1012.5 651.6" fill="none" stroke="#1e96ff" stroke-width="5.4"/>
<path d="M867.5 633 L1012.5 651.6" fill="none" stroke="#0f6cb8" stroke-width="3.2"/>
<path d="M835.5 655.8 L980.5 674.4" fill="none" stroke="#1e96ff" stroke-width="5.4"/>
<path d="M835.5 655.8 L980.5 674.4" fill="none" stroke="#0f6cb8" stroke-width="3.2"/>
<path d="M803.5 678.6 L948.5 697.2" fill="none" stroke="#1e96ff" stroke-width="5.4"/>
<path d="M803.5 678.6 L948.5 697.2" fill="none" stroke="#0f6cb8" stroke-width="3.2"/>
<path d="M771.5 701.4 L916.5 720" fill="none" stroke="#1e96ff" stroke-width="5.4"/>
<path d="M771.5 701.4 L916.5 720" fill="none" stroke="#0f6cb8" stroke-width="3.2"/>
<path d="M867.5 633 L771.5 701.4" fill="none" stroke="#1e96ff" stroke-width="5.4"/>
<path d="M867.5 633 L771.5 701.4" fill="none" stroke="#0f6cb8" stroke-width="3.2"/>
<path d="M1012.5 651.6 L916.5 720" fill="none" stroke="#1e96ff" stroke-width="5.4"/>
<path d="M1012.5 651.6 L916.5 720" fill="none" stroke="#0f6cb8" stroke-width="3.2"/>
<path d="M867 633.4 L876.1 642.1 L903.2 638ZM903.2 638 L912.4 646.8 L939.5 642.7ZM939.5 642.7 L948.6 651.4 L975.8 647.3ZM975.8 647.3 L984.9 656.1 L1012 652Z" fill="#0f6cb8"/>
<path d="M867 633.4 L876.1 642.1 L903.2 638 L912.4 646.8 L939.5 642.7 L948.6 651.4 L975.8 647.3 L984.9 656.1 L1012 652" fill="none" stroke="#c888ea" stroke-width="1.7" stroke-linejoin="round"/>
<path d="M772 701 L799.1 696.9 L808.2 705.7ZM808.2 705.7 L835.4 701.6 L844.5 710.3ZM844.5 710.3 L871.6 706.2 L880.8 715ZM880.8 715 L907.9 710.9 L917 719.6Z" fill="#0f6cb8"/>
<path d="M772 701 L799.1 696.9 L808.2 705.7 L835.4 701.6 L844.5 710.3 L871.6 706.2 L880.8 715 L907.9 710.9 L917 719.6" fill="none" stroke="#c888ea" stroke-width="1.7" stroke-linejoin="round"/>
<path d="M868 633.1 L860.5 645.5 L836 655.8Z" fill="#0f6cb8"/>
<path d="M868 633.1 L860.5 645.5 L836 655.8" fill="none" stroke="#c888ea" stroke-width="1.7" stroke-linejoin="round"/>
<path d="M1012 651.6 L987.5 661.9 L980 674.4Z" fill="#0f6cb8"/>
<path d="M1012 651.6 L987.5 661.9 L980 674.4" fill="none" stroke="#c888ea" stroke-width="1.7" stroke-linejoin="round"/>
<path d="M836 655.8 L828.5 668.3 L804 678.6Z" fill="#0f6cb8"/>
<path d="M836 655.8 L828.5 668.3 L804 678.6" fill="none" stroke="#c888ea" stroke-width="1.7" stroke-linejoin="round"/>
<path d="M980 674.4 L955.5 684.7 L948 697.1Z" fill="#0f6cb8"/>
<path d="M980 674.4 L955.5 684.7 L948 697.1" fill="none" stroke="#c888ea" stroke-width="1.7" stroke-linejoin="round"/>
<path d="M804 678.6 L796.5 691.1 L772 701.4Z" fill="#0f6cb8"/>
<path d="M804 678.6 L796.5 691.1 L772 701.4" fill="none" stroke="#c888ea" stroke-width="1.7" stroke-linejoin="round"/>
<path d="M948 697.1 L923.5 707.4 L916 719.9Z" fill="#0f6cb8"/>
<path d="M948 697.1 L923.5 707.4 L916 719.9" fill="none" stroke="#c888ea" stroke-width="1.7" stroke-linejoin="round"/>
<path d="M769.5 701.1 L918.5 720.2 L918.5 726.7 L769.5 707.6Z" fill="#0f6cb8"/>
<path d="M769.5 707.6 L918.5 726.7" fill="none" stroke="#1e96ff" stroke-width="1.2"/>
<path d="M769.5 701.1 L918.5 720.2" fill="none" stroke="#1e96ff" stroke-width="1.2"/>
<path d="M1016.5 650.5 L916.5 721.7 L916.5 728.2 L1016.5 657Z" fill="#0b2a48"/>
<path d="M1016.5 657 L916.5 728.2" fill="none" stroke="#1e96ff" stroke-width="1.3"/>
<path d="M1016.5 650.5 L916.5 721.7" fill="none" stroke="#1e96ff" stroke-width="1.3"/>
<path d="M1008.2 657.9L1008.2 661.4M999.8 663.8L999.8 667.3M991.5 669.8L991.5 673.3M983.2 675.7L983.2 679.2M974.8 681.6L974.8 685.1M966.5 687.6L966.5 691.1M958.2 693.5L958.2 697M949.8 699.4L949.8 702.9M941.5 705.4L941.5 708.9M933.2 711.3L933.2 714.8M924.8 717.2L924.8 720.7" fill="none" stroke="#1878d0" stroke-width="0.8"/>
<path d="M921.5 653.4 L982.5 661.2" fill="none" stroke="#1e96ff" stroke-width="4.4"/>
<path d="M921.5 653.4 L982.5 661.2" fill="none" stroke="#0f6cb8" stroke-width="2.6"/>
<path d="M833.5 669 L897.5 677.2" fill="none" stroke="#1e96ff" stroke-width="4.4"/>
<path d="M833.5 669 L897.5 677.2" fill="none" stroke="#0f6cb8" stroke-width="2.6"/>
<rect x="1007.3" y="651.6" width="10.4" height="43.4" fill="#b45200"/>
<path d="M1007.8 651.6V695M1014.9 651.6V695M1017.2 651.6V695" stroke="#ff8000" stroke-width="1" fill="none"/>
<rect x="975.3" y="674.4" width="10.4" height="43.4" fill="#b45200"/>
<path d="M975.8 674.4V717.8M982.9 674.4V717.8M985.2 674.4V717.8" stroke="#ff8000" stroke-width="1" fill="none"/>
<rect x="943.3" y="697.2" width="10.4" height="43.4" fill="#b45200"/>
<path d="M943.8 697.2V740.6M950.9 697.2V740.6M953.2 697.2V740.6" stroke="#ff8000" stroke-width="1" fill="none"/>
<rect x="766.3" y="701.4" width="10.4" height="43.4" fill="#b45200"/>
<path d="M766.8 701.4V744.8M773.9 701.4V744.8M776.2 701.4V744.8" stroke="#ff8000" stroke-width="1" fill="none"/>
<rect x="911.3" y="720" width="10.4" height="43.4" fill="#b45200"/>
<path d="M911.8 720V763.4M918.9 720V763.4M921.2 720V763.4" stroke="#ff8000" stroke-width="1" fill="none"/>
<rect x="462.3" y="553" width="10.4" height="28.6" fill="#b45200"/>
<path d="M462.8 553V581.6M469.9 553V581.6M472.2 553V581.6" stroke="#ff8000" stroke-width="1" fill="none"/>
<rect x="578.3" y="567.9" width="10.4" height="28.6" fill="#b45200"/>
<path d="M578.8 567.9V596.5M585.9 567.9V596.5M588.2 567.9V596.5" stroke="#ff8000" stroke-width="1" fill="none"/>
<rect x="720.3" y="586.2" width="10.4" height="28.6" fill="#b45200"/>
<path d="M720.8 586.2V614.8M727.9 586.2V614.8M730.2 586.2V614.8" stroke="#ff8000" stroke-width="1" fill="none"/>
<rect x="862.3" y="604.4" width="10.4" height="28.6" fill="#b45200"/>
<path d="M862.8 604.4V633M869.9 604.4V633M872.2 604.4V633" stroke="#ff8000" stroke-width="1" fill="none"/>
<rect x="1007.3" y="623" width="10.4" height="28.6" fill="#b45200"/>
<path d="M1007.8 623V651.6M1014.9 623V651.6M1017.2 623V651.6" stroke="#ff8000" stroke-width="1" fill="none"/>
<rect x="430.3" y="575.8" width="10.4" height="28.6" fill="#b45200"/>
<path d="M430.8 575.8V604.4M437.9 575.8V604.4M440.2 575.8V604.4" stroke="#ff8000" stroke-width="1" fill="none"/>
<rect x="830.3" y="627.2" width="10.4" height="28.6" fill="#b45200"/>
<path d="M830.8 627.2V655.8M837.9 627.2V655.8M840.2 627.2V655.8" stroke="#ff8000" stroke-width="1" fill="none"/>
<rect x="975.3" y="645.8" width="10.4" height="28.6" fill="#b45200"/>
<path d="M975.8 645.8V674.4M982.9 645.8V674.4M985.2 645.8V674.4" stroke="#ff8000" stroke-width="1" fill="none"/>
<rect x="398.3" y="598.6" width="10.4" height="28.6" fill="#b45200"/>
<path d="M398.8 598.6V627.2M405.9 598.6V627.2M408.2 598.6V627.2" stroke="#ff8000" stroke-width="1" fill="none"/>
<rect x="798.3" y="650" width="10.4" height="28.6" fill="#b45200"/>
<path d="M798.8 650V678.6M805.9 650V678.6M808.2 650V678.6" stroke="#ff8000" stroke-width="1" fill="none"/>
<rect x="943.3" y="668.6" width="10.4" height="28.6" fill="#b45200"/>
<path d="M943.8 668.6V697.2M950.9 668.6V697.2M953.2 668.6V697.2" stroke="#ff8000" stroke-width="1" fill="none"/>
<rect x="366.3" y="621.4" width="10.4" height="28.6" fill="#b45200"/>
<path d="M366.8 621.4V650M373.9 621.4V650M376.2 621.4V650" stroke="#ff8000" stroke-width="1" fill="none"/>
<rect x="482.3" y="636.3" width="10.4" height="28.6" fill="#b45200"/>
<path d="M482.8 636.3V664.9M489.9 636.3V664.9M492.2 636.3V664.9" stroke="#ff8000" stroke-width="1" fill="none"/>
<rect x="624.3" y="654.5" width="10.4" height="28.6" fill="#b45200"/>
<path d="M624.8 654.5V683.1M631.9 654.5V683.1M634.2 654.5V683.1" stroke="#ff8000" stroke-width="1" fill="none"/>
<rect x="766.3" y="672.8" width="10.4" height="28.6" fill="#b45200"/>
<path d="M766.8 672.8V701.4M773.9 672.8V701.4M776.2 672.8V701.4" stroke="#ff8000" stroke-width="1" fill="none"/>
<rect x="911.3" y="691.4" width="10.4" height="28.6" fill="#b45200"/>
<path d="M911.8 691.4V720M918.9 691.4V720M921.2 691.4V720" stroke="#ff8000" stroke-width="1" fill="none"/>
<path d="M371.5 693.4 L487.5 636.3" fill="none" stroke="#a870d2" stroke-width="4.2" stroke-linecap="butt"/>
<path d="M371.5 693.4 L487.5 636.3" fill="none" stroke="#cc98ee" stroke-width="2.2"/>
<path d="M487.5 708.3 L371.5 621.4" fill="none" stroke="#a870d2" stroke-width="4.2" stroke-linecap="butt"/>
<path d="M487.5 708.3 L371.5 621.4" fill="none" stroke="#cc98ee" stroke-width="2.2"/>
<path d="M772 745 L822 692" fill="none" stroke="#a870d2" stroke-width="4.2" stroke-linecap="butt"/>
<path d="M772 745 L822 692" fill="none" stroke="#cc98ee" stroke-width="2.2"/>
<path d="M916 762 L862 697" fill="none" stroke="#a870d2" stroke-width="4.2" stroke-linecap="butt"/>
<path d="M916 762 L862 697" fill="none" stroke="#cc98ee" stroke-width="2.2"/>
<rect x="328.6" y="648.2" width="10.4" height="28.6" fill="#b45200"/>
<path d="M329.1 648.2V676.8M336.2 648.2V676.8M338.5 648.2V676.8" stroke="#ff8000" stroke-width="1" fill="none"/>
<rect x="444.6" y="663.1" width="10.4" height="28.6" fill="#b45200"/>
<path d="M445.1 663.1V691.7M452.2 663.1V691.7M454.5 663.1V691.7" stroke="#ff8000" stroke-width="1" fill="none"/>
<rect x="586.6" y="681.3" width="10.4" height="28.6" fill="#b45200"/>
<path d="M587.1 681.3V709.9M594.2 681.3V709.9M596.5 681.3V709.9" stroke="#ff8000" stroke-width="1" fill="none"/>
<rect x="728.6" y="699.6" width="10.4" height="28.6" fill="#b45200"/>
<path d="M729.1 699.6V728.2M736.2 699.6V728.2M738.5 699.6V728.2" stroke="#ff8000" stroke-width="1" fill="none"/>
<rect x="873.6" y="718.2" width="10.4" height="28.6" fill="#b45200"/>
<path d="M874.1 718.2V746.8M881.2 718.2V746.8M883.5 718.2V746.8" stroke="#ff8000" stroke-width="1" fill="none"/>
<rect x="282.3" y="681.2" width="10.4" height="28.6" fill="#b45200"/>
<path d="M282.8 681.2V709.8M289.9 681.2V709.8M292.2 681.2V709.8" stroke="#ff8000" stroke-width="1" fill="none"/>
<rect x="398.3" y="696.1" width="10.4" height="28.6" fill="#b45200"/>
<path d="M398.8 696.1V724.7M405.9 696.1V724.7M408.2 696.1V724.7" stroke="#ff8000" stroke-width="1" fill="none"/>
<rect x="540.3" y="714.3" width="10.4" height="28.6" fill="#b45200"/>
<path d="M540.8 714.3V742.9M547.9 714.3V742.9M550.2 714.3V742.9" stroke="#ff8000" stroke-width="1" fill="none"/>
<rect x="682.3" y="732.6" width="10.4" height="28.6" fill="#b45200"/>
<path d="M682.8 732.6V761.2M689.9 732.6V761.2M692.2 732.6V761.2" stroke="#ff8000" stroke-width="1" fill="none"/>
<rect x="766.3" y="672.8" width="10.4" height="28.6" fill="#b45200"/>
<path d="M766.8 672.8V701.4M773.9 672.8V701.4M776.2 672.8V701.4" stroke="#ff8000" stroke-width="1" fill="none"/>
<rect x="911.3" y="691.4" width="10.4" height="28.6" fill="#b45200"/>
<path d="M911.8 691.4V720M918.9 691.4V720M921.2 691.4V720" stroke="#ff8000" stroke-width="1" fill="none"/>
<rect x="766.3" y="701.4" width="10.4" height="43.4" fill="#b45200"/>
<path d="M766.8 701.4V744.8M773.9 701.4V744.8M776.2 701.4V744.8" stroke="#ff8000" stroke-width="1" fill="none"/>
<rect x="911.3" y="720" width="10.4" height="43.4" fill="#b45200"/>
<path d="M911.8 720V763.4M918.9 720V763.4M921.2 720V763.4" stroke="#ff8000" stroke-width="1" fill="none"/>
<path d="M749.5 606.4L720.5 627M764.5 608.3L735.5 628.9M779.5 610.2L750.5 630.9M794.5 612.1L765.5 632.8M809.5 614.1L780.5 634.7" fill="none" stroke="#0fc468" stroke-width="3.6"/>
<path d="M749.5 606.4L720.5 627M764.5 608.3L735.5 628.9M779.5 610.2L750.5 630.9M794.5 612.1L765.5 632.8M809.5 614.1L780.5 634.7" fill="none" stroke="#053a1e" stroke-width="1.6" stroke-dasharray="2.5 2"/>
<path d="M731 615.2 L805 624.7" fill="none" stroke="#1e96ff" stroke-width="4.6"/>
<path d="M731 615.2 L805 624.7" fill="none" stroke="#0f6cb8" stroke-width="2.8"/>
<clipPath id="c4"><path d="M725.5 586.2 L867.5 604.4 L771.5 672.8 L629.5 654.5ZM745.5 605.5 L815.5 614.5 L790.5 632.3 L720.5 623.3Z" clip-rule="evenodd"/></clipPath>
<g clip-path="url(#c4)">
<path d="M725.5 586.2 L867.5 604.4 L771.5 672.8 L629.5 654.5Z" fill="#08c866"/>
<path d="M722.3 588.4L864.3 606.7M715.8 593.1L857.8 611.3M709.3 597.7L851.3 615.9M702.8 602.3L844.8 620.6M696.3 606.9L838.3 625.2M689.8 611.6L831.8 629.8M683.3 616.2L825.3 634.4M676.8 620.8L818.8 639.1M670.3 625.5L812.3 643.7M663.8 630.1L805.8 648.3M657.3 634.7L799.3 653M650.8 639.3L792.8 657.6M644.3 644L786.3 662.2M637.8 648.6L779.8 666.8M631.3 653.2L773.3 671.5" fill="none" stroke="#00ff84" stroke-width="2.3"/>
</g>
<path d="M745.5 605.5 L815.5 614.5 L790.5 632.3 L720.5 623.3Z" fill="none" stroke="#0a9a50" stroke-width="0.8"/>
<path d="M761 590.7L665 659.1M796.5 595.3L700.5 663.6M832 599.8L736 668.2" fill="none" stroke="#06301c" stroke-width="0.9" stroke-dasharray="3.5 8"/>
<path d="M725.5 586.2 L867.5 604.4" fill="none" stroke="#1e96ff" stroke-width="5.4"/>
<path d="M725.5 586.2 L867.5 604.4" fill="none" stroke="#0f6cb8" stroke-width="3.2"/>
<path d="M693.5 608.9 L835.5 627.2" fill="none" stroke="#1e96ff" stroke-width="5.4"/>
<path d="M693.5 608.9 L835.5 627.2" fill="none" stroke="#0f6cb8" stroke-width="3.2"/>
<path d="M661.5 631.7 L803.5 650" fill="none" stroke="#1e96ff" stroke-width="5.4"/>
<path d="M661.5 631.7 L803.5 650" fill="none" stroke="#0f6cb8" stroke-width="3.2"/>
<path d="M629.5 654.5 L771.5 672.8" fill="none" stroke="#1e96ff" stroke-width="5.4"/>
<path d="M629.5 654.5 L771.5 672.8" fill="none" stroke="#0f6cb8" stroke-width="3.2"/>
<path d="M725.5 586.2 L629.5 654.5" fill="none" stroke="#1e96ff" stroke-width="5.4"/>
<path d="M725.5 586.2 L629.5 654.5" fill="none" stroke="#0f6cb8" stroke-width="3.2"/>
<path d="M867.5 604.4 L771.5 672.8" fill="none" stroke="#1e96ff" stroke-width="5.4"/>
<path d="M867.5 604.4 L771.5 672.8" fill="none" stroke="#0f6cb8" stroke-width="3.2"/>
<path d="M725 586.5 L733.8 595.2 L760.5 591.1ZM760.5 591.1 L769.2 599.8 L796 595.6ZM796 595.6 L804.8 604.3 L831.5 600.2ZM831.5 600.2 L840.2 608.9 L867 604.8Z" fill="#0f6cb8"/>
<path d="M725 586.5 L733.8 595.2 L760.5 591.1 L769.2 599.8 L796 595.6 L804.8 604.3 L831.5 600.2 L840.2 608.9 L867 604.8" fill="none" stroke="#c888ea" stroke-width="1.7" stroke-linejoin="round"/>
<path d="M630 654.1 L656.8 650 L665.5 658.7ZM665.5 658.7 L692.2 654.6 L701 663.3ZM701 663.3 L727.8 659.1 L736.5 667.8ZM736.5 667.8 L763.2 663.7 L772 672.4Z" fill="#0f6cb8"/>
<path d="M630 654.1 L656.8 650 L665.5 658.7 L692.2 654.6 L701 663.3 L727.8 659.1 L736.5 667.8 L763.2 663.7 L772 672.4" fill="none" stroke="#c888ea" stroke-width="1.7" stroke-linejoin="round"/>
<path d="M726 586.2 L718.5 598.7 L694 609Z" fill="#0f6cb8"/>
<path d="M726 586.2 L718.5 598.7 L694 609" fill="none" stroke="#c888ea" stroke-width="1.7" stroke-linejoin="round"/>
<path d="M867 604.3 L842.5 614.6 L835 627.1Z" fill="#0f6cb8"/>
<path d="M867 604.3 L842.5 614.6 L835 627.1" fill="none" stroke="#c888ea" stroke-width="1.7" stroke-linejoin="round"/>
<path d="M694 609 L686.5 621.5 L662 631.8Z" fill="#0f6cb8"/>
<path d="M694 609 L686.5 621.5 L662 631.8" fill="none" stroke="#c888ea" stroke-width="1.7" stroke-linejoin="round"/>
<path d="M835 627.1 L810.5 637.4 L803 649.9Z" fill="#0f6cb8"/>
<path d="M835 627.1 L810.5 637.4 L803 649.9" fill="none" stroke="#c888ea" stroke-width="1.7" stroke-linejoin="round"/>
<path d="M662 631.8 L654.5 644.3 L630 654.6Z" fill="#0f6cb8"/>
<path d="M662 631.8 L654.5 644.3 L630 654.6" fill="none" stroke="#c888ea" stroke-width="1.7" stroke-linejoin="round"/>
<path d="M803 649.9 L778.5 660.2 L771 672.7Z" fill="#0f6cb8"/>
<path d="M803 649.9 L778.5 660.2 L771 672.7" fill="none" stroke="#c888ea" stroke-width="1.7" stroke-linejoin="round"/>
<path d="M943.5 619.5L919.5 636.6M958.5 621.5L934.5 638.5M973.5 623.4L949.5 640.5M988.5 625.3L964.5 642.4M926.5 644.2L912.5 654.2M941.5 646.2L927.5 656.1M956.5 648.1L942.5 658.1M881.5 613.2L869.5 621.8M896.5 615.2L884.5 623.7M864.5 638L853.5 645.8M879.5 639.9L868.5 647.7" fill="none" stroke="#0fc468" stroke-width="3.6"/>
<path d="M943.5 619.5L919.5 636.6M958.5 621.5L934.5 638.5M973.5 623.4L949.5 640.5M988.5 625.3L964.5 642.4M926.5 644.2L912.5 654.2M941.5 646.2L927.5 656.1M956.5 648.1L942.5 658.1M881.5 613.2L869.5 621.8M896.5 615.2L884.5 623.7M864.5 638L853.5 645.8M879.5 639.9L868.5 647.7" fill="none" stroke="#053a1e" stroke-width="1.6" stroke-dasharray="2.5 2"/>
<clipPath id="c5"><path d="M867.5 604.4 L1012.5 623 L916.5 691.4 L771.5 672.8ZM939.5 618.7 L997.5 626.1 L977.5 640.4 L919.5 632.9ZM919.5 643 L961.5 648.4 L951.5 655.5 L909.5 650.1ZM873.5 611.9 L909.5 616.5 L901.5 622.2 L865.5 617.6ZM851.5 636 L887.5 640.6 L880.5 645.6 L844.5 640.9Z" clip-rule="evenodd"/></clipPath>
<g clip-path="url(#c5)">
<path d="M867.5 604.4 L1012.5 623 L916.5 691.4 L771.5 672.8Z" fill="#08c866"/>
<path d="M864.3 606.7L1009.3 625.3M857.8 611.3L1002.8 629.9M851.3 615.9L996.3 634.6M844.8 620.6L989.8 639.2M838.3 625.2L983.3 643.8M831.8 629.8L976.8 648.5M825.3 634.4L970.3 653.1M818.8 639.1L963.8 657.7M812.3 643.7L957.3 662.3M805.8 648.3L950.8 667M799.3 653L944.3 671.6M792.8 657.6L937.8 676.2M786.3 662.2L931.3 680.8M779.8 666.8L924.8 685.5M773.3 671.5L918.3 690.1" fill="none" stroke="#00ff84" stroke-width="2.3"/>
</g>
<path d="M939.5 618.7 L997.5 626.1 L977.5 640.4 L919.5 632.9Z" fill="none" stroke="#0a9a50" stroke-width="0.8"/>
<path d="M919.5 643 L961.5 648.4 L951.5 655.5 L909.5 650.1Z" fill="none" stroke="#0a9a50" stroke-width="0.8"/>
<path d="M873.5 611.9 L909.5 616.5 L901.5 622.2 L865.5 617.6Z" fill="none" stroke="#0a9a50" stroke-width="0.8"/>
<path d="M851.5 636 L887.5 640.6 L880.5 645.6 L844.5 640.9Z" fill="none" stroke="#0a9a50" stroke-width="0.8"/>
<path d="M903.8 609.1L807.8 677.4M940 613.7L844 682.1M976.2 618.4L880.2 686.7" fill="none" stroke="#06301c" stroke-width="0.9" stroke-dasharray="3.5 8"/>
<path d="M867.5 604.4 L1012.5 623" fill="none" stroke="#1e96ff" stroke-width="5.4"/>
<path d="M867.5 604.4 L1012.5 623" fill="none" stroke="#0f6cb8" stroke-width="3.2"/>
<path d="M835.5 627.2 L980.5 645.8" fill="none" stroke="#1e96ff" stroke-width="5.4"/>
<path d="M835.5 627.2 L980.5 645.8" fill="none" stroke="#0f6cb8" stroke-width="3.2"/>
<path d="M803.5 650 L948.5 668.6" fill="none" stroke="#1e96ff" stroke-width="5.4"/>
<path d="M803.5 650 L948.5 668.6" fill="none" stroke="#0f6cb8" stroke-width="3.2"/>
<path d="M771.5 672.8 L916.5 691.4" fill="none" stroke="#1e96ff" stroke-width="5.4"/>
<path d="M771.5 672.8 L916.5 691.4" fill="none" stroke="#0f6cb8" stroke-width="3.2"/>
<path d="M867.5 604.4 L771.5 672.8" fill="none" stroke="#1e96ff" stroke-width="5.4"/>
<path d="M867.5 604.4 L771.5 672.8" fill="none" stroke="#0f6cb8" stroke-width="3.2"/>
<path d="M1012.5 623 L916.5 691.4" fill="none" stroke="#1e96ff" stroke-width="5.4"/>
<path d="M1012.5 623 L916.5 691.4" fill="none" stroke="#0f6cb8" stroke-width="3.2"/>
<path d="M867 604.8 L876.1 613.5 L903.2 609.4ZM903.2 609.4 L912.4 618.2 L939.5 614.1ZM939.5 614.1 L948.6 622.8 L975.8 618.7ZM975.8 618.7 L984.9 627.5 L1012 623.4Z" fill="#0f6cb8"/>
<path d="M867 604.8 L876.1 613.5 L903.2 609.4 L912.4 618.2 L939.5 614.1 L948.6 622.8 L975.8 618.7 L984.9 627.5 L1012 623.4" fill="none" stroke="#c888ea" stroke-width="1.7" stroke-linejoin="round"/>
<path d="M772 672.4 L799.1 668.3 L808.2 677.1ZM808.2 677.1 L835.4 673 L844.5 681.7ZM844.5 681.7 L871.6 677.6 L880.8 686.4ZM880.8 686.4 L907.9 682.3 L917 691Z" fill="#0f6cb8"/>
<path d="M772 672.4 L799.1 668.3 L808.2 677.1 L835.4 673 L844.5 681.7 L871.6 677.6 L880.8 686.4 L907.9 682.3 L917 691" fill="none" stroke="#c888ea" stroke-width="1.7" stroke-linejoin="round"/>
<path d="M868 604.5 L860.5 616.9 L836 627.2Z" fill="#0f6cb8"/>
<path d="M868 604.5 L860.5 616.9 L836 627.2" fill="none" stroke="#c888ea" stroke-width="1.7" stroke-linejoin="round"/>
<path d="M1012 623 L987.5 633.3 L980 645.8Z" fill="#0f6cb8"/>
<path d="M1012 623 L987.5 633.3 L980 645.8" fill="none" stroke="#c888ea" stroke-width="1.7" stroke-linejoin="round"/>
<path d="M836 627.2 L828.5 639.7 L804 650Z" fill="#0f6cb8"/>
<path d="M836 627.2 L828.5 639.7 L804 650" fill="none" stroke="#c888ea" stroke-width="1.7" stroke-linejoin="round"/>
<path d="M980 645.8 L955.5 656.1 L948 668.5Z" fill="#0f6cb8"/>
<path d="M980 645.8 L955.5 656.1 L948 668.5" fill="none" stroke="#c888ea" stroke-width="1.7" stroke-linejoin="round"/>
<path d="M804 650 L796.5 662.5 L772 672.8Z" fill="#0f6cb8"/>
<path d="M804 650 L796.5 662.5 L772 672.8" fill="none" stroke="#c888ea" stroke-width="1.7" stroke-linejoin="round"/>
<path d="M948 668.5 L923.5 678.8 L916 691.3Z" fill="#0f6cb8"/>
<path d="M948 668.5 L923.5 678.8 L916 691.3" fill="none" stroke="#c888ea" stroke-width="1.7" stroke-linejoin="round"/>
<path d="M769.5 672.5 L918.5 691.6 L918.5 698.1 L769.5 679Z" fill="#0f6cb8"/>
<path d="M769.5 679 L918.5 698.1" fill="none" stroke="#1e96ff" stroke-width="1.2"/>
<path d="M769.5 672.5 L918.5 691.6" fill="none" stroke="#1e96ff" stroke-width="1.2"/>
<path d="M1016.5 621.9 L916.5 693.1 L916.5 699.6 L1016.5 628.4Z" fill="#0b2a48"/>
<path d="M1016.5 628.4 L916.5 699.6" fill="none" stroke="#1e96ff" stroke-width="1.3"/>
<path d="M1016.5 621.9 L916.5 693.1" fill="none" stroke="#1e96ff" stroke-width="1.3"/>
<path d="M1008.2 629.3L1008.2 632.8M999.8 635.2L999.8 638.7M991.5 641.2L991.5 644.7M983.2 647.1L983.2 650.6M974.8 653L974.8 656.5M966.5 659L966.5 662.5M958.2 664.9L958.2 668.4M949.8 670.8L949.8 674.3M941.5 676.8L941.5 680.3M933.2 682.7L933.2 686.2M924.8 688.6L924.8 692.1" fill="none" stroke="#1878d0" stroke-width="0.8"/>
<path d="M921.5 624.8 L982.5 632.6" fill="none" stroke="#1e96ff" stroke-width="4.4"/>
<path d="M921.5 624.8 L982.5 632.6" fill="none" stroke="#0f6cb8" stroke-width="2.6"/>
<path d="M833.5 640.4 L897.5 648.6" fill="none" stroke="#1e96ff" stroke-width="4.4"/>
<path d="M833.5 640.4 L897.5 648.6" fill="none" stroke="#0f6cb8" stroke-width="2.6"/>
<path d="M348.5 664.9L326.5 680.6M363.5 666.9L341.5 682.5M378.5 668.8L356.5 684.5M528.5 688.1L510.5 700.9M543.5 690L525.5 702.8M604.5 697L586.5 709.8M619.5 698.9L601.5 711.7M691.5 672.9L675.5 684.3M706.5 674.8L690.5 686.2M721.5 676.7L705.5 688.1M736.5 678.7L720.5 690.1" fill="none" stroke="#0fc468" stroke-width="3.6"/>
<path d="M348.5 664.9L326.5 680.6M363.5 666.9L341.5 682.5M378.5 668.8L356.5 684.5M528.5 688.1L510.5 700.9M543.5 690L525.5 702.8M604.5 697L586.5 709.8M619.5 698.9L601.5 711.7M691.5 672.9L675.5 684.3M706.5 674.8L690.5 686.2M721.5 676.7L705.5 688.1M736.5 678.7L720.5 690.1" fill="none" stroke="#053a1e" stroke-width="1.6" stroke-dasharray="2.5 2"/>
<clipPath id="c6"><path d="M357.5 619.6 L771.5 672.8 L674.5 741.8 L260.5 688.6ZM379.5 676.2 L381.2 674.1 L380.6 671.9 L377.7 669.8 L372.9 668.1 L366.5 666.9 L359.3 666.4 L351.8 666.5 L345 667.3 L339.4 668.7 L335.5 670.5 L333.8 672.6 L334.4 674.8 L337.3 676.9 L342.1 678.6 L348.5 679.8 L355.7 680.3 L363.2 680.2 L370 679.4 L375.6 678ZM538.5 694.9 L540 693.3 L539.9 691.6 L538.4 690.1 L535.5 688.9 L531.5 688.1 L526.8 687.8 L521.9 688 L517.3 688.7 L513.3 689.9 L510.5 691.3 L509 693 L509.1 694.6 L510.6 696.1 L513.5 697.3 L517.5 698.1 L522.2 698.4 L527.1 698.2 L531.7 697.5 L535.7 696.4ZM595.5 695.5 L630.5 700 L616.5 710 L581.5 705.5ZM687.5 672 L737.5 678.5 L725.5 687 L675.5 680.6Z" clip-rule="evenodd"/></clipPath>
<g clip-path="url(#c6)">
<path d="M357.5 619.6 L771.5 672.8 L674.5 741.8 L260.5 688.6Z" fill="#08c866"/>
<path d="M354.3 621.8L768.3 675M347.8 626.5L761.8 679.7M341.3 631.1L755.3 684.3M334.8 635.7L748.8 688.9M328.3 640.3L742.3 693.5M321.8 645L735.8 698.2M315.3 649.6L729.3 702.8M308.8 654.2L722.8 707.4M302.3 658.9L716.3 712.1M295.8 663.5L709.8 716.7M289.3 668.1L703.3 721.3M282.8 672.7L696.8 725.9M276.3 677.4L690.3 730.6M269.8 682L683.8 735.2M263.3 686.6L677.3 739.8" fill="none" stroke="#00ff84" stroke-width="2.3"/>
</g>
<path d="M379.5 676.2 L381.2 674.1 L380.6 671.9 L377.7 669.8 L372.9 668.1 L366.5 666.9 L359.3 666.4 L351.8 666.5 L345 667.3 L339.4 668.7 L335.5 670.5 L333.8 672.6 L334.4 674.8 L337.3 676.9 L342.1 678.6 L348.5 679.8 L355.7 680.3 L363.2 680.2 L370 679.4 L375.6 678Z" fill="none" stroke="#0a9a50" stroke-width="0.8"/>
<path d="M538.5 694.9 L540 693.3 L539.9 691.6 L538.4 690.1 L535.5 688.9 L531.5 688.1 L526.8 687.8 L521.9 688 L517.3 688.7 L513.3 689.9 L510.5 691.3 L509 693 L509.1 694.6 L510.6 696.1 L513.5 697.3 L517.5 698.1 L522.2 698.4 L527.1 698.2 L531.7 697.5 L535.7 696.4Z" fill="none" stroke="#0a9a50" stroke-width="0.8"/>
<path d="M595.5 695.5 L630.5 700 L616.5 710 L581.5 705.5Z" fill="none" stroke="#0a9a50" stroke-width="0.8"/>
<path d="M687.5 672 L737.5 678.5 L725.5 687 L675.5 680.6Z" fill="none" stroke="#0a9a50" stroke-width="0.8"/>
<path d="M400.5 625.1L316.5 684.9M429.5 628.8L345.5 688.6M458.5 632.5L374.5 692.3M523 640.8L439 700.6M558.5 645.4L474.5 705.2M594 649.9L510 709.8M665 659.1L581 718.9M700.5 663.6L616.5 723.4M736 668.2L652 728" fill="none" stroke="#06301c" stroke-width="0.9" stroke-dasharray="3.5 8"/>
<path d="M371.5 621.4 L771.5 672.8" fill="none" stroke="#1e96ff" stroke-width="5.4"/>
<path d="M371.5 621.4 L771.5 672.8" fill="none" stroke="#0f6cb8" stroke-width="3.2"/>
<path d="M333.8 648.2 L733.8 699.6" fill="none" stroke="#1e96ff" stroke-width="5.4"/>
<path d="M333.8 648.2 L733.8 699.6" fill="none" stroke="#0f6cb8" stroke-width="3.2"/>
<path d="M287.5 681.2 L687.5 732.6" fill="none" stroke="#1e96ff" stroke-width="5.4"/>
<path d="M287.5 681.2 L687.5 732.6" fill="none" stroke="#0f6cb8" stroke-width="3.2"/>
<path d="M371.5 621.4 L287.5 681.2" fill="none" stroke="#1e96ff" stroke-width="5.4"/>
<path d="M371.5 621.4 L287.5 681.2" fill="none" stroke="#0f6cb8" stroke-width="3.2"/>
<path d="M487.5 636.3 L403.5 696.1" fill="none" stroke="#1e96ff" stroke-width="5.4"/>
<path d="M487.5 636.3 L403.5 696.1" fill="none" stroke="#0c4278" stroke-width="3.2"/>
<path d="M629.5 654.5 L545.5 714.3" fill="none" stroke="#1e96ff" stroke-width="5.4"/>
<path d="M629.5 654.5 L545.5 714.3" fill="none" stroke="#0c4278" stroke-width="3.2"/>
<path d="M771.5 672.8 L687.5 732.6" fill="none" stroke="#1e96ff" stroke-width="5.4"/>
<path d="M771.5 672.8 L687.5 732.6" fill="none" stroke="#0f6cb8" stroke-width="3.2"/>
<path d="M371 621.7 L376.5 630 L400 625.4ZM400 625.4 L405.5 633.7 L429 629.2ZM429 629.2 L434.5 637.4 L458 632.9ZM458 632.9 L463.5 641.2 L487 636.6Z" fill="#0f6cb8"/>
<path d="M371 621.7 L376.5 630 L400 625.4 L405.5 633.7 L429 629.2 L434.5 637.4 L458 632.9 L463.5 641.2 L487 636.6" fill="none" stroke="#c888ea" stroke-width="1.7" stroke-linejoin="round"/>
<path d="M288 680.8 L311.5 676.3 L317 684.5ZM317 684.5 L340.5 680 L346 688.3ZM346 688.3 L369.5 683.7 L375 692ZM375 692 L398.5 687.4 L404 695.7Z" fill="#0f6cb8"/>
<path d="M288 680.8 L311.5 676.3 L317 684.5 L340.5 680 L346 688.3 L369.5 683.7 L375 692 L398.5 687.4 L404 695.7" fill="none" stroke="#c888ea" stroke-width="1.7" stroke-linejoin="round"/>
<path d="M487 636.6 L495.8 645.3 L522.5 641.2ZM522.5 641.2 L531.2 649.9 L558 645.7ZM558 645.7 L566.8 654.4 L593.5 650.3ZM593.5 650.3 L602.2 659 L629 654.9Z" fill="#0f6cb8"/>
<path d="M487 636.6 L495.8 645.3 L522.5 641.2 L531.2 649.9 L558 645.7 L566.8 654.4 L593.5 650.3 L602.2 659 L629 654.9" fill="none" stroke="#c888ea" stroke-width="1.7" stroke-linejoin="round"/>
<path d="M404 695.7 L430.8 691.6 L439.5 700.3ZM439.5 700.3 L466.2 696.1 L475 704.8ZM475 704.8 L501.8 700.7 L510.5 709.4ZM510.5 709.4 L537.2 705.3 L546 714Z" fill="#0f6cb8"/>
<path d="M404 695.7 L430.8 691.6 L439.5 700.3 L466.2 696.1 L475 704.8 L501.8 700.7 L510.5 709.4 L537.2 705.3 L546 714" fill="none" stroke="#c888ea" stroke-width="1.7" stroke-linejoin="round"/>
<path d="M629 654.9 L637.8 663.5 L664.5 659.4ZM664.5 659.4 L673.2 668.1 L700 664ZM700 664 L708.8 672.7 L735.5 668.5ZM735.5 668.5 L744.2 677.2 L771 673.1Z" fill="#0f6cb8"/>
<path d="M629 654.9 L637.8 663.5 L664.5 659.4 L673.2 668.1 L700 664 L708.8 672.7 L735.5 668.5 L744.2 677.2 L771 673.1" fill="none" stroke="#c888ea" stroke-width="1.7" stroke-linejoin="round"/>
<path d="M546 714 L572.8 709.8 L581.5 718.5ZM581.5 718.5 L608.2 714.4 L617 723.1ZM617 723.1 L643.8 719 L652.5 727.6ZM652.5 727.6 L679.2 723.5 L688 732.2Z" fill="#0f6cb8"/>
<path d="M546 714 L572.8 709.8 L581.5 718.5 L608.2 714.4 L617 723.1 L643.8 719 L652.5 727.6 L679.2 723.5 L688 732.2" fill="none" stroke="#c888ea" stroke-width="1.7" stroke-linejoin="round"/>
<path d="M372 621.4 L361.6 635.9 L334.3 648.3Z" fill="#0f6cb8"/>
<path d="M372 621.4 L361.6 635.9 L334.3 648.3" fill="none" stroke="#c888ea" stroke-width="1.7" stroke-linejoin="round"/>
<path d="M771 672.7 L743.6 685 L733.3 699.5Z" fill="#0f6cb8"/>
<path d="M771 672.7 L743.6 685 L733.3 699.5" fill="none" stroke="#c888ea" stroke-width="1.7" stroke-linejoin="round"/>
<path d="M334.3 648.3 L319.6 665.8 L288 681.2Z" fill="#0f6cb8"/>
<path d="M334.3 648.3 L319.6 665.8 L288 681.2" fill="none" stroke="#c888ea" stroke-width="1.7" stroke-linejoin="round"/>
<path d="M733.3 699.5 L701.6 714.9 L687 732.5Z" fill="#0f6cb8"/>
<path d="M733.3 699.5 L701.6 714.9 L687 732.5" fill="none" stroke="#c888ea" stroke-width="1.7" stroke-linejoin="round"/>
<path d="M260.5 688.6 L674.5 741.8 L674.5 746.8 L260.5 693.6Z" fill="#06b058"/>
<path d="M260.5 693.6 L674.5 746.8" fill="none" stroke="#00ff84" stroke-width="1"/>
<path d="M815.5 685.4L799.5 696.8M830.5 687.4L814.5 698.8M845.5 689.3L829.5 700.7M860.5 691.2L844.5 702.6" fill="none" stroke="#0fc468" stroke-width="3.6"/>
<path d="M815.5 685.4L799.5 696.8M830.5 687.4L814.5 698.8M845.5 689.3L829.5 700.7M860.5 691.2L844.5 702.6" fill="none" stroke="#053a1e" stroke-width="1.6" stroke-dasharray="2.5 2"/>
<clipPath id="c7"><path d="M771.5 672.8 L916.5 691.4 L878.8 718.2 L733.8 699.6ZM803.5 683.6 L863.5 691.3 L851.5 699.8 L791.5 692.1Z" clip-rule="evenodd"/></clipPath>
<g clip-path="url(#c7)">
<path d="M771.5 672.8 L916.5 691.4 L878.8 718.2 L733.8 699.6Z" fill="#08c866"/>
<path d="M768.3 675L913.3 693.7M761.8 679.7L906.8 698.3M755.3 684.3L900.3 702.9M748.8 688.9L893.8 707.5M742.3 693.5L887.3 712.2M735.8 698.2L880.8 716.8" fill="none" stroke="#00ff84" stroke-width="2.3"/>
</g>
<path d="M803.5 683.6 L863.5 691.3 L851.5 699.8 L791.5 692.1Z" fill="none" stroke="#0a9a50" stroke-width="0.8"/>
<path d="M807.8 677.4L770 704.3M844 682.1L806.3 708.9M880.2 686.7L842.5 713.6" fill="none" stroke="#06301c" stroke-width="0.9" stroke-dasharray="3.5 8"/>
<path d="M771.5 672.8 L916.5 691.4" fill="none" stroke="#1e96ff" stroke-width="5.4"/>
<path d="M771.5 672.8 L916.5 691.4" fill="none" stroke="#0f6cb8" stroke-width="3.2"/>
<path d="M733.8 699.6 L878.8 718.2" fill="none" stroke="#1e96ff" stroke-width="5.4"/>
<path d="M733.8 699.6 L878.8 718.2" fill="none" stroke="#0f6cb8" stroke-width="3.2"/>
<path d="M771.5 672.8 L733.8 699.6" fill="none" stroke="#1e96ff" stroke-width="5.4"/>
<path d="M771.5 672.8 L733.8 699.6" fill="none" stroke="#0f6cb8" stroke-width="3.2"/>
<path d="M916.5 691.4 L878.8 718.2" fill="none" stroke="#1e96ff" stroke-width="5.4"/>
<path d="M916.5 691.4 L878.8 718.2" fill="none" stroke="#0f6cb8" stroke-width="3.2"/>
<path d="M771 673.1 L780.1 681.8 L807.2 677.8ZM807.2 677.8 L816.4 686.5 L843.5 682.4ZM843.5 682.4 L852.6 691.2 L879.8 687.1ZM879.8 687.1 L888.9 695.8 L916 691.7Z" fill="#0f6cb8"/>
<path d="M771 673.1 L780.1 681.8 L807.2 677.8 L816.4 686.5 L843.5 682.4 L852.6 691.2 L879.8 687.1 L888.9 695.8 L916 691.7" fill="none" stroke="#c888ea" stroke-width="1.7" stroke-linejoin="round"/>
<path d="M734.3 699.2 L761.4 695.2 L770.5 703.9ZM770.5 703.9 L797.7 699.8 L806.8 708.6ZM806.8 708.6 L833.9 704.5 L843 713.2ZM843 713.2 L870.2 709.1 L879.3 717.9Z" fill="#0f6cb8"/>
<path d="M734.3 699.2 L761.4 695.2 L770.5 703.9 L797.7 699.8 L806.8 708.6 L833.9 704.5 L843 713.2 L870.2 709.1 L879.3 717.9" fill="none" stroke="#c888ea" stroke-width="1.7" stroke-linejoin="round"/>
<path d="M772 672.8 L761.6 687.3 L734.3 699.7Z" fill="#0f6cb8"/>
<path d="M772 672.8 L761.6 687.3 L734.3 699.7" fill="none" stroke="#c888ea" stroke-width="1.7" stroke-linejoin="round"/>
<path d="M916 691.3 L888.6 703.6 L878.3 718.2Z" fill="#0f6cb8"/>
<path d="M916 691.3 L888.6 703.6 L878.3 718.2" fill="none" stroke="#c888ea" stroke-width="1.7" stroke-linejoin="round"/>
<path d="M731.8 699.3 L880.8 718.5 L880.8 725 L731.8 705.8Z" fill="#0f6cb8"/>
<path d="M731.8 705.8 L880.8 725" fill="none" stroke="#1e96ff" stroke-width="1.2"/>
<path d="M731.8 699.3 L880.8 718.5" fill="none" stroke="#1e96ff" stroke-width="1.2"/>
<path d="M920.5 690.2 L878.8 719.9 L878.8 726.4 L920.5 696.7Z" fill="#0b2a48"/>
<path d="M920.5 696.7 L878.8 726.4" fill="none" stroke="#1e96ff" stroke-width="1.3"/>
<path d="M920.5 690.2 L878.8 719.9" fill="none" stroke="#1e96ff" stroke-width="1.3"/>
<path d="M912.2 697.7L912.2 701.2M903.8 703.6L903.8 707.1M895.5 709.5L895.5 713M887.1 715.5L887.1 719" fill="none" stroke="#1878d0" stroke-width="0.8"/>
<rect x="282.3" y="681.2" width="10.4" height="28.6" fill="#b45200"/>
<path d="M282.8 681.2V709.8M289.9 681.2V709.8M292.2 681.2V709.8" stroke="#ff8000" stroke-width="1" fill="none"/>
<rect x="398.3" y="696.1" width="10.4" height="28.6" fill="#b45200"/>
<path d="M398.8 696.1V724.7M405.9 696.1V724.7M408.2 696.1V724.7" stroke="#ff8000" stroke-width="1" fill="none"/>
<rect x="540.3" y="714.3" width="10.4" height="28.6" fill="#b45200"/>
<path d="M540.8 714.3V742.9M547.9 714.3V742.9M550.2 714.3V742.9" stroke="#ff8000" stroke-width="1" fill="none"/>
<rect x="682.3" y="732.6" width="10.4" height="28.6" fill="#b45200"/>
<path d="M682.8 732.6V761.2M689.9 732.6V761.2M692.2 732.6V761.2" stroke="#ff8000" stroke-width="1" fill="none"/>
<rect x="1007.3" y="623" width="10.4" height="28.6" fill="#b45200"/>
<path d="M1007.8 623V651.6M1014.9 623V651.6M1017.2 623V651.6" stroke="#ff8000" stroke-width="1" fill="none"/>
<rect x="975.3" y="645.8" width="10.4" height="28.6" fill="#b45200"/>
<path d="M975.8 645.8V674.4M982.9 645.8V674.4M985.2 645.8V674.4" stroke="#ff8000" stroke-width="1" fill="none"/>
<rect x="943.3" y="668.6" width="10.4" height="28.6" fill="#b45200"/>
<path d="M943.8 668.6V697.2M950.9 668.6V697.2M953.2 668.6V697.2" stroke="#ff8000" stroke-width="1" fill="none"/>
<rect x="911.3" y="691.4" width="10.4" height="28.6" fill="#b45200"/>
<path d="M911.8 691.4V720M918.9 691.4V720M921.2 691.4V720" stroke="#ff8000" stroke-width="1" fill="none"/>
<rect x="873.6" y="718.2" width="10.4" height="28.6" fill="#b45200"/>
<path d="M874.1 718.2V746.8M881.2 718.2V746.8M883.5 718.2V746.8" stroke="#ff8000" stroke-width="1" fill="none"/>
<rect x="728.6" y="699.6" width="10.4" height="28.6" fill="#b45200"/>
<path d="M729.1 699.6V728.2M736.2 699.6V728.2M738.5 699.6V728.2" stroke="#ff8000" stroke-width="1" fill="none"/>
<rect x="462.3" y="505.5" width="10.4" height="47.5" fill="#b45200"/>
<path d="M462.8 505.5V553M469.9 505.5V553M472.2 505.5V553" stroke="#ff8000" stroke-width="1" fill="none"/>
<rect x="578.3" y="520.4" width="10.4" height="47.5" fill="#b45200"/>
<path d="M578.8 520.4V567.9M585.9 520.4V567.9M588.2 520.4V567.9" stroke="#ff8000" stroke-width="1" fill="none"/>
<rect x="720.3" y="538.7" width="10.4" height="47.5" fill="#b45200"/>
<path d="M720.8 538.7V586.2M727.9 538.7V586.2M730.2 538.7V586.2" stroke="#ff8000" stroke-width="1" fill="none"/>
<rect x="862.3" y="556.9" width="10.4" height="47.5" fill="#b45200"/>
<path d="M862.8 556.9V604.4M869.9 556.9V604.4M872.2 556.9V604.4" stroke="#ff8000" stroke-width="1" fill="none"/>
<rect x="1007.3" y="575.5" width="10.4" height="47.5" fill="#b45200"/>
<path d="M1007.8 575.5V623M1014.9 575.5V623M1017.2 575.5V623" stroke="#ff8000" stroke-width="1" fill="none"/>
<rect x="430.3" y="528.3" width="10.4" height="47.5" fill="#b45200"/>
<path d="M430.8 528.3V575.8M437.9 528.3V575.8M440.2 528.3V575.8" stroke="#ff8000" stroke-width="1" fill="none"/>
<rect x="830.3" y="579.7" width="10.4" height="47.5" fill="#b45200"/>
<path d="M830.8 579.7V627.2M837.9 579.7V627.2M840.2 579.7V627.2" stroke="#ff8000" stroke-width="1" fill="none"/>
<rect x="975.3" y="598.3" width="10.4" height="47.5" fill="#b45200"/>
<path d="M975.8 598.3V645.8M982.9 598.3V645.8M985.2 598.3V645.8" stroke="#ff8000" stroke-width="1" fill="none"/>
<rect x="398.3" y="551.1" width="10.4" height="47.5" fill="#b45200"/>
<path d="M398.8 551.1V598.6M405.9 551.1V598.6M408.2 551.1V598.6" stroke="#ff8000" stroke-width="1" fill="none"/>
<rect x="798.3" y="602.5" width="10.4" height="47.5" fill="#b45200"/>
<path d="M798.8 602.5V650M805.9 602.5V650M808.2 602.5V650" stroke="#ff8000" stroke-width="1" fill="none"/>
<rect x="943.3" y="621.1" width="10.4" height="47.5" fill="#b45200"/>
<path d="M943.8 621.1V668.6M950.9 621.1V668.6M953.2 621.1V668.6" stroke="#ff8000" stroke-width="1" fill="none"/>
<rect x="366.3" y="573.9" width="10.4" height="47.5" fill="#b45200"/>
<path d="M366.8 573.9V621.4M373.9 573.9V621.4M376.2 573.9V621.4" stroke="#ff8000" stroke-width="1" fill="none"/>
<rect x="482.3" y="588.8" width="10.4" height="47.5" fill="#b45200"/>
<path d="M482.8 588.8V636.3M489.9 588.8V636.3M492.2 588.8V636.3" stroke="#ff8000" stroke-width="1" fill="none"/>
<rect x="624.3" y="607" width="10.4" height="47.5" fill="#b45200"/>
<path d="M624.8 607V654.5M631.9 607V654.5M634.2 607V654.5" stroke="#ff8000" stroke-width="1" fill="none"/>
<rect x="766.3" y="625.3" width="10.4" height="47.5" fill="#b45200"/>
<path d="M766.8 625.3V672.8M773.9 625.3V672.8M776.2 625.3V672.8" stroke="#ff8000" stroke-width="1" fill="none"/>
<rect x="911.3" y="643.9" width="10.4" height="47.5" fill="#b45200"/>
<path d="M911.8 643.9V691.4M918.9 643.9V691.4M921.2 643.9V691.4" stroke="#ff8000" stroke-width="1" fill="none"/>
<rect x="328.6" y="600.7" width="10.4" height="47.5" fill="#b45200"/>
<path d="M329.1 600.7V648.2M336.2 600.7V648.2M338.5 600.7V648.2" stroke="#ff8000" stroke-width="1" fill="none"/>
<rect x="444.6" y="615.6" width="10.4" height="47.5" fill="#b45200"/>
<path d="M445.1 615.6V663.1M452.2 615.6V663.1M454.5 615.6V663.1" stroke="#ff8000" stroke-width="1" fill="none"/>
<rect x="586.6" y="633.8" width="10.4" height="47.5" fill="#b45200"/>
<path d="M587.1 633.8V681.3M594.2 633.8V681.3M596.5 633.8V681.3" stroke="#ff8000" stroke-width="1" fill="none"/>
<rect x="728.6" y="652.1" width="10.4" height="47.5" fill="#b45200"/>
<path d="M729.1 652.1V699.6M736.2 652.1V699.6M738.5 652.1V699.6" stroke="#ff8000" stroke-width="1" fill="none"/>
<rect x="873.6" y="670.7" width="10.4" height="47.5" fill="#b45200"/>
<path d="M874.1 670.7V718.2M881.2 670.7V718.2M883.5 670.7V718.2" stroke="#ff8000" stroke-width="1" fill="none"/>
<rect x="282.3" y="633.7" width="10.4" height="47.5" fill="#b45200"/>
<path d="M282.8 633.7V681.2M289.9 633.7V681.2M292.2 633.7V681.2" stroke="#ff8000" stroke-width="1" fill="none"/>
<rect x="398.3" y="648.6" width="10.4" height="47.5" fill="#b45200"/>
<path d="M398.8 648.6V696.1M405.9 648.6V696.1M408.2 648.6V696.1" stroke="#ff8000" stroke-width="1" fill="none"/>
<rect x="540.3" y="666.8" width="10.4" height="47.5" fill="#b45200"/>
<path d="M540.8 666.8V714.3M547.9 666.8V714.3M550.2 666.8V714.3" stroke="#ff8000" stroke-width="1" fill="none"/>
<rect x="682.3" y="685.1" width="10.4" height="47.5" fill="#b45200"/>
<path d="M682.8 685.1V732.6M689.9 685.1V732.6M692.2 685.1V732.6" stroke="#ff8000" stroke-width="1" fill="none"/>
<path d="M943.5 572L919.5 589.1M958.5 574L934.5 591M973.5 575.9L949.5 593M988.5 577.8L964.5 594.9M926.5 596.7L912.5 606.7M941.5 598.7L927.5 608.6M956.5 600.6L942.5 610.6M881.5 565.7L869.5 574.3M896.5 567.7L884.5 576.2M864.5 590.5L853.5 598.3M879.5 592.4L868.5 600.2" fill="none" stroke="#0fc468" stroke-width="3.6"/>
<path d="M943.5 572L919.5 589.1M958.5 574L934.5 591M973.5 575.9L949.5 593M988.5 577.8L964.5 594.9M926.5 596.7L912.5 606.7M941.5 598.7L927.5 608.6M956.5 600.6L942.5 610.6M881.5 565.7L869.5 574.3M896.5 567.7L884.5 576.2M864.5 590.5L853.5 598.3M879.5 592.4L868.5 600.2" fill="none" stroke="#053a1e" stroke-width="1.6" stroke-dasharray="2.5 2"/>
<clipPath id="c8"><path d="M867.5 556.9 L1012.5 575.5 L916.5 643.9 L771.5 625.3ZM939.5 571.2 L997.5 578.6 L977.5 592.9 L919.5 585.4ZM919.5 595.5 L961.5 600.9 L951.5 608 L909.5 602.6ZM873.5 564.4 L909.5 569 L901.5 574.7 L865.5 570.1ZM851.5 588.5 L887.5 593.1 L880.5 598.1 L844.5 593.4Z" clip-rule="evenodd"/></clipPath>
<g clip-path="url(#c8)">
<path d="M867.5 556.9 L1012.5 575.5 L916.5 643.9 L771.5 625.3Z" fill="#08c866"/>
<path d="M864.3 559.2L1009.3 577.8M857.8 563.8L1002.8 582.4M851.3 568.4L996.3 587.1M844.8 573.1L989.8 591.7M838.3 577.7L983.3 596.3M831.8 582.3L976.8 601M825.3 586.9L970.3 605.6M818.8 591.6L963.8 610.2M812.3 596.2L957.3 614.8M805.8 600.8L950.8 619.5M799.3 605.5L944.3 624.1M792.8 610.1L937.8 628.7M786.3 614.7L931.3 633.3M779.8 619.3L924.8 638M773.3 624L918.3 642.6" fill="none" stroke="#00ff84" stroke-width="2.3"/>
</g>
<path d="M939.5 571.2 L997.5 578.6 L977.5 592.9 L919.5 585.4Z" fill="none" stroke="#0a9a50" stroke-width="0.8"/>
<path d="M919.5 595.5 L961.5 600.9 L951.5 608 L909.5 602.6Z" fill="none" stroke="#0a9a50" stroke-width="0.8"/>
<path d="M873.5 564.4 L909.5 569 L901.5 574.7 L865.5 570.1Z" fill="none" stroke="#0a9a50" stroke-width="0.8"/>
<path d="M851.5 588.5 L887.5 593.1 L880.5 598.1 L844.5 593.4Z" fill="none" stroke="#0a9a50" stroke-width="0.8"/>
<path d="M903.8 561.6L807.8 629.9M940 566.2L844 634.6M976.2 570.9L880.2 639.2" fill="none" stroke="#06301c" stroke-width="0.9" stroke-dasharray="3.5 8"/>
<path d="M867.5 556.9 L1012.5 575.5" fill="none" stroke="#1e96ff" stroke-width="5.4"/>
<path d="M867.5 556.9 L1012.5 575.5" fill="none" stroke="#0f6cb8" stroke-width="3.2"/>
<path d="M835.5 579.7 L980.5 598.3" fill="none" stroke="#1e96ff" stroke-width="5.4"/>
<path d="M835.5 579.7 L980.5 598.3" fill="none" stroke="#0f6cb8" stroke-width="3.2"/>
<path d="M803.5 602.5 L948.5 621.1" fill="none" stroke="#1e96ff" stroke-width="5.4"/>
<path d="M803.5 602.5 L948.5 621.1" fill="none" stroke="#0f6cb8" stroke-width="3.2"/>
<path d="M771.5 625.3 L916.5 643.9" fill="none" stroke="#1e96ff" stroke-width="5.4"/>
<path d="M771.5 625.3 L916.5 643.9" fill="none" stroke="#0f6cb8" stroke-width="3.2"/>
<path d="M867.5 556.9 L771.5 625.3" fill="none" stroke="#1e96ff" stroke-width="5.4"/>
<path d="M867.5 556.9 L771.5 625.3" fill="none" stroke="#0f6cb8" stroke-width="3.2"/>
<path d="M1012.5 575.5 L916.5 643.9" fill="none" stroke="#1e96ff" stroke-width="5.4"/>
<path d="M1012.5 575.5 L916.5 643.9" fill="none" stroke="#0f6cb8" stroke-width="3.2"/>
<path d="M867 557.3 L876.1 566 L903.2 561.9ZM903.2 561.9 L912.4 570.7 L939.5 566.6ZM939.5 566.6 L948.6 575.3 L975.8 571.2ZM975.8 571.2 L984.9 580 L1012 575.9Z" fill="#0f6cb8"/>
<path d="M867 557.3 L876.1 566 L903.2 561.9 L912.4 570.7 L939.5 566.6 L948.6 575.3 L975.8 571.2 L984.9 580 L1012 575.9" fill="none" stroke="#c888ea" stroke-width="1.7" stroke-linejoin="round"/>
<path d="M772 624.9 L799.1 620.8 L808.2 629.6ZM808.2 629.6 L835.4 625.5 L844.5 634.2ZM844.5 634.2 L871.6 630.1 L880.8 638.9ZM880.8 638.9 L907.9 634.8 L917 643.5Z" fill="#0f6cb8"/>
<path d="M772 624.9 L799.1 620.8 L808.2 629.6 L835.4 625.5 L844.5 634.2 L871.6 630.1 L880.8 638.9 L907.9 634.8 L917 643.5" fill="none" stroke="#c888ea" stroke-width="1.7" stroke-linejoin="round"/>
<path d="M868 557 L860.5 569.4 L836 579.7Z" fill="#0f6cb8"/>
<path d="M868 557 L860.5 569.4 L836 579.7" fill="none" stroke="#c888ea" stroke-width="1.7" stroke-linejoin="round"/>
<path d="M1012 575.5 L987.5 585.8 L980 598.3Z" fill="#0f6cb8"/>
<path d="M1012 575.5 L987.5 585.8 L980 598.3" fill="none" stroke="#c888ea" stroke-width="1.7" stroke-linejoin="round"/>
<path d="M836 579.7 L828.5 592.2 L804 602.5Z" fill="#0f6cb8"/>
<path d="M836 579.7 L828.5 592.2 L804 602.5" fill="none" stroke="#c888ea" stroke-width="1.7" stroke-linejoin="round"/>
<path d="M980 598.3 L955.5 608.6 L948 621Z" fill="#0f6cb8"/>
<path d="M980 598.3 L955.5 608.6 L948 621" fill="none" stroke="#c888ea" stroke-width="1.7" stroke-linejoin="round"/>
<path d="M804 602.5 L796.5 615 L772 625.3Z" fill="#0f6cb8"/>
<path d="M804 602.5 L796.5 615 L772 625.3" fill="none" stroke="#c888ea" stroke-width="1.7" stroke-linejoin="round"/>
<path d="M948 621 L923.5 631.3 L916 643.8Z" fill="#0f6cb8"/>
<path d="M948 621 L923.5 631.3 L916 643.8" fill="none" stroke="#c888ea" stroke-width="1.7" stroke-linejoin="round"/>
<path d="M769.5 625 L918.5 644.1 L918.5 650.6 L769.5 631.5Z" fill="#0f6cb8"/>
<path d="M769.5 631.5 L918.5 650.6" fill="none" stroke="#1e96ff" stroke-width="1.2"/>
<path d="M769.5 625 L918.5 644.1" fill="none" stroke="#1e96ff" stroke-width="1.2"/>
<path d="M1016.5 574.4 L916.5 645.6 L916.5 652.1 L1016.5 580.9Z" fill="#0b2a48"/>
<path d="M1016.5 580.9 L916.5 652.1" fill="none" stroke="#1e96ff" stroke-width="1.3"/>
<path d="M1016.5 574.4 L916.5 645.6" fill="none" stroke="#1e96ff" stroke-width="1.3"/>
<path d="M1008.2 581.8L1008.2 585.3M999.8 587.7L999.8 591.2M991.5 593.7L991.5 597.2M983.2 599.6L983.2 603.1M974.8 605.5L974.8 609M966.5 611.5L966.5 615M958.2 617.4L958.2 620.9M949.8 623.3L949.8 626.8M941.5 629.3L941.5 632.8M933.2 635.2L933.2 638.7M924.8 641.1L924.8 644.6" fill="none" stroke="#1878d0" stroke-width="0.8"/>
<path d="M921.5 577.3 L982.5 585.1" fill="none" stroke="#1e96ff" stroke-width="4.4"/>
<path d="M921.5 577.3 L982.5 585.1" fill="none" stroke="#0f6cb8" stroke-width="2.6"/>
<path d="M833.5 592.9 L897.5 601.1" fill="none" stroke="#1e96ff" stroke-width="4.4"/>
<path d="M833.5 592.9 L897.5 601.1" fill="none" stroke="#0f6cb8" stroke-width="2.6"/>
<rect x="1007.3" y="575.5" width="10.4" height="47.5" fill="#b45200"/>
<path d="M1007.8 575.5V623M1014.9 575.5V623M1017.2 575.5V623" stroke="#ff8000" stroke-width="1" fill="none"/>
<rect x="975.3" y="598.3" width="10.4" height="47.5" fill="#b45200"/>
<path d="M975.8 598.3V645.8M982.9 598.3V645.8M985.2 598.3V645.8" stroke="#ff8000" stroke-width="1" fill="none"/>
<rect x="943.3" y="621.1" width="10.4" height="47.5" fill="#b45200"/>
<path d="M943.8 621.1V668.6M950.9 621.1V668.6M953.2 621.1V668.6" stroke="#ff8000" stroke-width="1" fill="none"/>
<rect x="766.3" y="625.3" width="10.4" height="47.5" fill="#b45200"/>
<path d="M766.8 625.3V672.8M773.9 625.3V672.8M776.2 625.3V672.8" stroke="#ff8000" stroke-width="1" fill="none"/>
<rect x="911.3" y="643.9" width="10.4" height="47.5" fill="#b45200"/>
<path d="M911.8 643.9V691.4M918.9 643.9V691.4M921.2 643.9V691.4" stroke="#ff8000" stroke-width="1" fill="none"/>
<rect x="462.3" y="450.5" width="10.4" height="55" fill="#b45200"/>
<path d="M462.8 450.5V505.5M469.9 450.5V505.5M472.2 450.5V505.5" stroke="#ff8000" stroke-width="1" fill="none"/>
<rect x="578.3" y="465.4" width="10.4" height="55" fill="#b45200"/>
<path d="M578.8 465.4V520.4M585.9 465.4V520.4M588.2 465.4V520.4" stroke="#ff8000" stroke-width="1" fill="none"/>
<rect x="720.3" y="483.7" width="10.4" height="55" fill="#b45200"/>
<path d="M720.8 483.7V538.7M727.9 483.7V538.7M730.2 483.7V538.7" stroke="#ff8000" stroke-width="1" fill="none"/>
<rect x="862.3" y="501.9" width="10.4" height="55" fill="#b45200"/>
<path d="M862.8 501.9V556.9M869.9 501.9V556.9M872.2 501.9V556.9" stroke="#ff8000" stroke-width="1" fill="none"/>
<rect x="1007.3" y="520.5" width="10.4" height="55" fill="#b45200"/>
<path d="M1007.8 520.5V575.5M1014.9 520.5V575.5M1017.2 520.5V575.5" stroke="#ff8000" stroke-width="1" fill="none"/>
<rect x="430.3" y="473.3" width="10.4" height="55" fill="#b45200"/>
<path d="M430.8 473.3V528.3M437.9 473.3V528.3M440.2 473.3V528.3" stroke="#ff8000" stroke-width="1" fill="none"/>
<rect x="830.3" y="524.7" width="10.4" height="55" fill="#b45200"/>
<path d="M830.8 524.7V579.7M837.9 524.7V579.7M840.2 524.7V579.7" stroke="#ff8000" stroke-width="1" fill="none"/>
<rect x="975.3" y="543.3" width="10.4" height="55" fill="#b45200"/>
<path d="M975.8 543.3V598.3M982.9 543.3V598.3M985.2 543.3V598.3" stroke="#ff8000" stroke-width="1" fill="none"/>
<rect x="398.3" y="496.1" width="10.4" height="55" fill="#b45200"/>
<path d="M398.8 496.1V551.1M405.9 496.1V551.1M408.2 496.1V551.1" stroke="#ff8000" stroke-width="1" fill="none"/>
<rect x="798.3" y="547.5" width="10.4" height="55" fill="#b45200"/>
<path d="M798.8 547.5V602.5M805.9 547.5V602.5M808.2 547.5V602.5" stroke="#ff8000" stroke-width="1" fill="none"/>
<rect x="943.3" y="566.1" width="10.4" height="55" fill="#b45200"/>
<path d="M943.8 566.1V621.1M950.9 566.1V621.1M953.2 566.1V621.1" stroke="#ff8000" stroke-width="1" fill="none"/>
<rect x="366.3" y="518.9" width="10.4" height="55" fill="#b45200"/>
<path d="M366.8 518.9V573.9M373.9 518.9V573.9M376.2 518.9V573.9" stroke="#ff8000" stroke-width="1" fill="none"/>
<rect x="482.3" y="533.8" width="10.4" height="55" fill="#b45200"/>
<path d="M482.8 533.8V588.8M489.9 533.8V588.8M492.2 533.8V588.8" stroke="#ff8000" stroke-width="1" fill="none"/>
<rect x="624.3" y="552" width="10.4" height="55" fill="#b45200"/>
<path d="M624.8 552V607M631.9 552V607M634.2 552V607" stroke="#ff8000" stroke-width="1" fill="none"/>
<rect x="766.3" y="570.3" width="10.4" height="55" fill="#b45200"/>
<path d="M766.8 570.3V625.3M773.9 570.3V625.3M776.2 570.3V625.3" stroke="#ff8000" stroke-width="1" fill="none"/>
<rect x="911.3" y="588.9" width="10.4" height="55" fill="#b45200"/>
<path d="M911.8 588.9V643.9M918.9 588.9V643.9M921.2 588.9V643.9" stroke="#ff8000" stroke-width="1" fill="none"/>
<path d="M371.5 621.4 L487.5 533.8" fill="none" stroke="#a870d2" stroke-width="4.2" stroke-linecap="butt"/>
<path d="M371.5 621.4 L487.5 533.8" fill="none" stroke="#cc98ee" stroke-width="2.2"/>
<path d="M487.5 636.3 L371.5 518.9" fill="none" stroke="#a870d2" stroke-width="4.2" stroke-linecap="butt"/>
<path d="M487.5 636.3 L371.5 518.9" fill="none" stroke="#cc98ee" stroke-width="2.2"/>
<path d="M773 580 L862 678" fill="none" stroke="#a870d2" stroke-width="4.2" stroke-linecap="butt"/>
<path d="M773 580 L862 678" fill="none" stroke="#cc98ee" stroke-width="2.2"/>
<path d="M915 595 L829 681" fill="none" stroke="#a870d2" stroke-width="4.2" stroke-linecap="butt"/>
<path d="M915 595 L829 681" fill="none" stroke="#cc98ee" stroke-width="2.2"/>
<rect x="328.6" y="545.7" width="10.4" height="55" fill="#b45200"/>
<path d="M329.1 545.7V600.7M336.2 545.7V600.7M338.5 545.7V600.7" stroke="#ff8000" stroke-width="1" fill="none"/>
<rect x="444.6" y="560.6" width="10.4" height="55" fill="#b45200"/>
<path d="M445.1 560.6V615.6M452.2 560.6V615.6M454.5 560.6V615.6" stroke="#ff8000" stroke-width="1" fill="none"/>
<rect x="586.6" y="578.8" width="10.4" height="55" fill="#b45200"/>
<path d="M587.1 578.8V633.8M594.2 578.8V633.8M596.5 578.8V633.8" stroke="#ff8000" stroke-width="1" fill="none"/>
<rect x="728.6" y="597.1" width="10.4" height="55" fill="#b45200"/>
<path d="M729.1 597.1V652.1M736.2 597.1V652.1M738.5 597.1V652.1" stroke="#ff8000" stroke-width="1" fill="none"/>
<rect x="873.6" y="615.7" width="10.4" height="55" fill="#b45200"/>
<path d="M874.1 615.7V670.7M881.2 615.7V670.7M883.5 615.7V670.7" stroke="#ff8000" stroke-width="1" fill="none"/>
<rect x="282.3" y="578.7" width="10.4" height="55" fill="#b45200"/>
<path d="M282.8 578.7V633.7M289.9 578.7V633.7M292.2 578.7V633.7" stroke="#ff8000" stroke-width="1" fill="none"/>
<rect x="398.3" y="593.6" width="10.4" height="55" fill="#b45200"/>
<path d="M398.8 593.6V648.6M405.9 593.6V648.6M408.2 593.6V648.6" stroke="#ff8000" stroke-width="1" fill="none"/>
<rect x="540.3" y="611.8" width="10.4" height="55" fill="#b45200"/>
<path d="M540.8 611.8V666.8M547.9 611.8V666.8M550.2 611.8V666.8" stroke="#ff8000" stroke-width="1" fill="none"/>
<rect x="682.3" y="630.1" width="10.4" height="55" fill="#b45200"/>
<path d="M682.8 630.1V685.1M689.9 630.1V685.1M692.2 630.1V685.1" stroke="#ff8000" stroke-width="1" fill="none"/>
<rect x="766.3" y="570.3" width="10.4" height="55" fill="#b45200"/>
<path d="M766.8 570.3V625.3M773.9 570.3V625.3M776.2 570.3V625.3" stroke="#ff8000" stroke-width="1" fill="none"/>
<rect x="911.3" y="588.9" width="10.4" height="55" fill="#b45200"/>
<path d="M911.8 588.9V643.9M918.9 588.9V643.9M921.2 588.9V643.9" stroke="#ff8000" stroke-width="1" fill="none"/>
<rect x="766.3" y="625.3" width="10.4" height="47.5" fill="#b45200"/>
<path d="M766.8 625.3V672.8M773.9 625.3V672.8M776.2 625.3V672.8" stroke="#ff8000" stroke-width="1" fill="none"/>
<rect x="911.3" y="643.9" width="10.4" height="47.5" fill="#b45200"/>
<path d="M911.8 643.9V691.4M918.9 643.9V691.4M921.2 643.9V691.4" stroke="#ff8000" stroke-width="1" fill="none"/>
<path d="M401.5 762.1 L543.5 617.9" fill="none" stroke="#a870d2" stroke-width="3.2" stroke-linecap="butt"/>
<path d="M401.5 762.1 L543.5 617.9" fill="none" stroke="#cc98ee" stroke-width="1.2000000000000002"/>
<path d="M405.5 766 L547.5 621.7" fill="none" stroke="#a870d2" stroke-width="3.2" stroke-linecap="butt"/>
<path d="M405.5 766 L547.5 621.7" fill="none" stroke="#cc98ee" stroke-width="1.2000000000000002"/>
<path d="M543.3 784 L401.3 603.3" fill="none" stroke="#a870d2" stroke-width="3.2" stroke-linecap="butt"/>
<path d="M543.3 784 L401.3 603.3" fill="none" stroke="#cc98ee" stroke-width="1.2000000000000002"/>
<path d="M547.7 780.6 L405.7 599.9" fill="none" stroke="#a870d2" stroke-width="3.2" stroke-linecap="butt"/>
<path d="M547.7 780.6 L405.7 599.9" fill="none" stroke="#cc98ee" stroke-width="1.2000000000000002"/>
<rect x="398.3" y="593.6" width="10.4" height="55" fill="#b45200"/>
<path d="M398.8 593.6V648.6M405.9 593.6V648.6M408.2 593.6V648.6" stroke="#ff8000" stroke-width="1" fill="none"/>
<rect x="540.3" y="611.8" width="10.4" height="55" fill="#b45200"/>
<path d="M540.8 611.8V666.8M547.9 611.8V666.8M550.2 611.8V666.8" stroke="#ff8000" stroke-width="1" fill="none"/>
<rect x="398.3" y="648.6" width="10.4" height="47.5" fill="#b45200"/>
<path d="M398.8 648.6V696.1M405.9 648.6V696.1M408.2 648.6V696.1" stroke="#ff8000" stroke-width="1" fill="none"/>
<rect x="540.3" y="666.8" width="10.4" height="47.5" fill="#b45200"/>
<path d="M540.8 666.8V714.3M547.9 666.8V714.3M550.2 666.8V714.3" stroke="#ff8000" stroke-width="1" fill="none"/>
<rect x="398.3" y="696.1" width="10.4" height="28.6" fill="#b45200"/>
<path d="M398.8 696.1V724.7M405.9 696.1V724.7M408.2 696.1V724.7" stroke="#ff8000" stroke-width="1" fill="none"/>
<rect x="540.3" y="714.3" width="10.4" height="28.6" fill="#b45200"/>
<path d="M540.8 714.3V742.9M547.9 714.3V742.9M550.2 714.3V742.9" stroke="#ff8000" stroke-width="1" fill="none"/>
<rect x="398.3" y="724.7" width="10.4" height="43.4" fill="#b45200"/>
<path d="M398.8 724.7V768.1M405.9 724.7V768.1M408.2 724.7V768.1" stroke="#ff8000" stroke-width="1" fill="none"/>
<rect x="540.3" y="742.9" width="10.4" height="43.4" fill="#b45200"/>
<path d="M540.8 742.9V786.3M547.9 742.9V786.3M550.2 742.9V786.3" stroke="#ff8000" stroke-width="1" fill="none"/>
<path d="M943.5 517L919.5 534.1M958.5 519L934.5 536M973.5 520.9L949.5 538M988.5 522.8L964.5 539.9M926.5 541.7L912.5 551.7M941.5 543.7L927.5 553.6M956.5 545.6L942.5 555.6M881.5 510.7L869.5 519.3M896.5 512.7L884.5 521.2M864.5 535.5L853.5 543.3M879.5 537.4L868.5 545.2" fill="none" stroke="#0fc468" stroke-width="3.6"/>
<path d="M943.5 517L919.5 534.1M958.5 519L934.5 536M973.5 520.9L949.5 538M988.5 522.8L964.5 539.9M926.5 541.7L912.5 551.7M941.5 543.7L927.5 553.6M956.5 545.6L942.5 555.6M881.5 510.7L869.5 519.3M896.5 512.7L884.5 521.2M864.5 535.5L853.5 543.3M879.5 537.4L868.5 545.2" fill="none" stroke="#053a1e" stroke-width="1.6" stroke-dasharray="2.5 2"/>
<clipPath id="c9"><path d="M867.5 501.9 L1012.5 520.5 L916.5 588.9 L771.5 570.3ZM939.5 516.2 L997.5 523.6 L977.5 537.9 L919.5 530.4ZM919.5 540.5 L961.5 545.9 L951.5 553 L909.5 547.6ZM873.5 509.4 L909.5 514 L901.5 519.7 L865.5 515.1ZM851.5 533.5 L887.5 538.1 L880.5 543.1 L844.5 538.4Z" clip-rule="evenodd"/></clipPath>
<g clip-path="url(#c9)">
<path d="M867.5 501.9 L1012.5 520.5 L916.5 588.9 L771.5 570.3Z" fill="#08c866"/>
<path d="M864.3 504.2L1009.3 522.8M857.8 508.8L1002.8 527.4M851.3 513.4L996.3 532.1M844.8 518.1L989.8 536.7M838.3 522.7L983.3 541.3M831.8 527.3L976.8 546M825.3 531.9L970.3 550.6M818.8 536.6L963.8 555.2M812.3 541.2L957.3 559.8M805.8 545.8L950.8 564.5M799.3 550.5L944.3 569.1M792.8 555.1L937.8 573.7M786.3 559.7L931.3 578.3M779.8 564.3L924.8 583M773.3 569L918.3 587.6" fill="none" stroke="#00ff84" stroke-width="2.3"/>
</g>
<path d="M939.5 516.2 L997.5 523.6 L977.5 537.9 L919.5 530.4Z" fill="none" stroke="#0a9a50" stroke-width="0.8"/>
<path d="M919.5 540.5 L961.5 545.9 L951.5 553 L909.5 547.6Z" fill="none" stroke="#0a9a50" stroke-width="0.8"/>
<path d="M873.5 509.4 L909.5 514 L901.5 519.7 L865.5 515.1Z" fill="none" stroke="#0a9a50" stroke-width="0.8"/>
<path d="M851.5 533.5 L887.5 538.1 L880.5 543.1 L844.5 538.4Z" fill="none" stroke="#0a9a50" stroke-width="0.8"/>
<path d="M903.8 506.6L807.8 574.9M940 511.2L844 579.6M976.2 515.9L880.2 584.2" fill="none" stroke="#06301c" stroke-width="0.9" stroke-dasharray="3.5 8"/>
<path d="M867.5 501.9 L1012.5 520.5" fill="none" stroke="#1e96ff" stroke-width="5.4"/>
<path d="M867.5 501.9 L1012.5 520.5" fill="none" stroke="#0f6cb8" stroke-width="3.2"/>
<path d="M835.5 524.7 L980.5 543.3" fill="none" stroke="#1e96ff" stroke-width="5.4"/>
<path d="M835.5 524.7 L980.5 543.3" fill="none" stroke="#0f6cb8" stroke-width="3.2"/>
<path d="M803.5 547.5 L948.5 566.1" fill="none" stroke="#1e96ff" stroke-width="5.4"/>
<path d="M803.5 547.5 L948.5 566.1" fill="none" stroke="#0f6cb8" stroke-width="3.2"/>
<path d="M771.5 570.3 L916.5 588.9" fill="none" stroke="#1e96ff" stroke-width="5.4"/>
<path d="M771.5 570.3 L916.5 588.9" fill="none" stroke="#0f6cb8" stroke-width="3.2"/>
<path d="M867.5 501.9 L771.5 570.3" fill="none" stroke="#1e96ff" stroke-width="5.4"/>
<path d="M867.5 501.9 L771.5 570.3" fill="none" stroke="#0f6cb8" stroke-width="3.2"/>
<path d="M1012.5 520.5 L916.5 588.9" fill="none" stroke="#1e96ff" stroke-width="5.4"/>
<path d="M1012.5 520.5 L916.5 588.9" fill="none" stroke="#0f6cb8" stroke-width="3.2"/>
<path d="M867 502.3 L876.1 511 L903.2 506.9ZM903.2 506.9 L912.4 515.7 L939.5 511.6ZM939.5 511.6 L948.6 520.3 L975.8 516.2ZM975.8 516.2 L984.9 525 L1012 520.9Z" fill="#0f6cb8"/>
<path d="M867 502.3 L876.1 511 L903.2 506.9 L912.4 515.7 L939.5 511.6 L948.6 520.3 L975.8 516.2 L984.9 525 L1012 520.9" fill="none" stroke="#c888ea" stroke-width="1.7" stroke-linejoin="round"/>
<path d="M772 569.9 L799.1 565.8 L808.2 574.6ZM808.2 574.6 L835.4 570.5 L844.5 579.2ZM844.5 579.2 L871.6 575.1 L880.8 583.9ZM880.8 583.9 L907.9 579.8 L917 588.5Z" fill="#0f6cb8"/>
<path d="M772 569.9 L799.1 565.8 L808.2 574.6 L835.4 570.5 L844.5 579.2 L871.6 575.1 L880.8 583.9 L907.9 579.8 L917 588.5" fill="none" stroke="#c888ea" stroke-width="1.7" stroke-linejoin="round"/>
<path d="M868 502 L860.5 514.4 L836 524.7Z" fill="#0f6cb8"/>
<path d="M868 502 L860.5 514.4 L836 524.7" fill="none" stroke="#c888ea" stroke-width="1.7" stroke-linejoin="round"/>
<path d="M1012 520.5 L987.5 530.8 L980 543.3Z" fill="#0f6cb8"/>
<path d="M1012 520.5 L987.5 530.8 L980 543.3" fill="none" stroke="#c888ea" stroke-width="1.7" stroke-linejoin="round"/>
<path d="M836 524.7 L828.5 537.2 L804 547.5Z" fill="#0f6cb8"/>
<path d="M836 524.7 L828.5 537.2 L804 547.5" fill="none" stroke="#c888ea" stroke-width="1.7" stroke-linejoin="round"/>
<path d="M980 543.3 L955.5 553.6 L948 566Z" fill="#0f6cb8"/>
<path d="M980 543.3 L955.5 553.6 L948 566" fill="none" stroke="#c888ea" stroke-width="1.7" stroke-linejoin="round"/>
<path d="M804 547.5 L796.5 560 L772 570.3Z" fill="#0f6cb8"/>
<path d="M804 547.5 L796.5 560 L772 570.3" fill="none" stroke="#c888ea" stroke-width="1.7" stroke-linejoin="round"/>
<path d="M948 566 L923.5 576.3 L916 588.8Z" fill="#0f6cb8"/>
<path d="M948 566 L923.5 576.3 L916 588.8" fill="none" stroke="#c888ea" stroke-width="1.7" stroke-linejoin="round"/>
<path d="M769.5 570 L918.5 589.1 L918.5 595.6 L769.5 576.5Z" fill="#0f6cb8"/>
<path d="M769.5 576.5 L918.5 595.6" fill="none" stroke="#1e96ff" stroke-width="1.2"/>
<path d="M769.5 570 L918.5 589.1" fill="none" stroke="#1e96ff" stroke-width="1.2"/>
<path d="M1016.5 519.4 L916.5 590.6 L916.5 597.1 L1016.5 525.9Z" fill="#0b2a48"/>
<path d="M1016.5 525.9 L916.5 597.1" fill="none" stroke="#1e96ff" stroke-width="1.3"/>
<path d="M1016.5 519.4 L916.5 590.6" fill="none" stroke="#1e96ff" stroke-width="1.3"/>
<path d="M1008.2 526.8L1008.2 530.3M999.8 532.7L999.8 536.2M991.5 538.7L991.5 542.2M983.2 544.6L983.2 548.1M974.8 550.5L974.8 554M966.5 556.5L966.5 560M958.2 562.4L958.2 565.9M949.8 568.3L949.8 571.8M941.5 574.3L941.5 577.8M933.2 580.2L933.2 583.7M924.8 586.1L924.8 589.6" fill="none" stroke="#1878d0" stroke-width="0.8"/>
<path d="M921.5 522.3 L982.5 530.1" fill="none" stroke="#1e96ff" stroke-width="4.4"/>
<path d="M921.5 522.3 L982.5 530.1" fill="none" stroke="#0f6cb8" stroke-width="2.6"/>
<path d="M833.5 537.9 L897.5 546.1" fill="none" stroke="#1e96ff" stroke-width="4.4"/>
<path d="M833.5 537.9 L897.5 546.1" fill="none" stroke="#0f6cb8" stroke-width="2.6"/>
<path d="M366.5 562.2L350.5 573.6M381.5 564.2L365.5 575.6M396.5 566.1L380.5 577.5M453.5 575.9L436.5 588M468.5 577.9L451.5 590M483.5 579.8L466.5 591.9M514.5 582.9L500.5 592.9M529.5 584.9L515.5 594.8" fill="none" stroke="#0fc468" stroke-width="3.6"/>
<path d="M366.5 562.2L350.5 573.6M381.5 564.2L365.5 575.6M396.5 566.1L380.5 577.5M453.5 575.9L436.5 588M468.5 577.9L451.5 590M483.5 579.8L466.5 591.9M514.5 582.9L500.5 592.9M529.5 584.9L515.5 594.8" fill="none" stroke="#053a1e" stroke-width="1.6" stroke-dasharray="2.5 2"/>
<clipPath id="c10"><path d="M371.5 518.9 L771.5 570.3 L687.5 630.1 L287.5 578.7ZM356.5 560.6 L402.5 566.5 L390.5 575.1 L344.5 569.2ZM444.5 574.5 L484.5 579.6 L471.5 588.9 L431.5 583.7ZM503.5 581.2 L533.5 585.1 L523.5 592.2 L493.5 588.3Z" clip-rule="evenodd"/></clipPath>
<g clip-path="url(#c10)">
<path d="M371.5 518.9 L771.5 570.3 L687.5 630.1 L287.5 578.7Z" fill="#08c866"/>
<path d="M368.3 521.1L768.3 572.5M361.8 525.8L761.8 577.2M355.3 530.4L755.3 581.8M348.8 535L748.8 586.4M342.3 539.6L742.3 591M335.8 544.3L735.8 595.7M329.3 548.9L729.3 600.3M322.8 553.5L722.8 604.9M316.3 558.2L716.3 609.6M309.8 562.8L709.8 614.2M303.3 567.4L703.3 618.8M296.8 572L696.8 623.4M290.3 576.7L690.3 628.1" fill="none" stroke="#00ff84" stroke-width="2.3"/>
</g>
<path d="M356.5 560.6 L402.5 566.5 L390.5 575.1 L344.5 569.2Z" fill="none" stroke="#0a9a50" stroke-width="0.8"/>
<path d="M444.5 574.5 L484.5 579.6 L471.5 588.9 L431.5 583.7Z" fill="none" stroke="#0a9a50" stroke-width="0.8"/>
<path d="M503.5 581.2 L533.5 585.1 L523.5 592.2 L493.5 588.3Z" fill="none" stroke="#0a9a50" stroke-width="0.8"/>
<path d="M400.5 522.6L316.5 582.4M429.5 526.3L345.5 586.1M458.5 530L374.5 589.8M523 538.3L439 598.1M558.5 542.9L474.5 602.7M594 547.4L510 607.3M665 556.6L581 616.4M700.5 561.1L616.5 620.9M736 565.7L652 625.5" fill="none" stroke="#06301c" stroke-width="0.9" stroke-dasharray="3.5 8"/>
<path d="M371.5 518.9 L771.5 570.3" fill="none" stroke="#1e96ff" stroke-width="5.4"/>
<path d="M371.5 518.9 L771.5 570.3" fill="none" stroke="#0f6cb8" stroke-width="3.2"/>
<path d="M333.8 545.7 L733.8 597.1" fill="none" stroke="#1e96ff" stroke-width="5.4"/>
<path d="M333.8 545.7 L733.8 597.1" fill="none" stroke="#0f6cb8" stroke-width="3.2"/>
<path d="M287.5 578.7 L687.5 630.1" fill="none" stroke="#1e96ff" stroke-width="5.4"/>
<path d="M287.5 578.7 L687.5 630.1" fill="none" stroke="#0f6cb8" stroke-width="3.2"/>
<path d="M371.5 518.9 L287.5 578.7" fill="none" stroke="#1e96ff" stroke-width="5.4"/>
<path d="M371.5 518.9 L287.5 578.7" fill="none" stroke="#0f6cb8" stroke-width="3.2"/>
<path d="M487.5 533.8 L403.5 593.6" fill="none" stroke="#1e96ff" stroke-width="5.4"/>
<path d="M487.5 533.8 L403.5 593.6" fill="none" stroke="#0c4278" stroke-width="3.2"/>
<path d="M629.5 552 L545.5 611.8" fill="none" stroke="#1e96ff" stroke-width="5.4"/>
<path d="M629.5 552 L545.5 611.8" fill="none" stroke="#0c4278" stroke-width="3.2"/>
<path d="M771.5 570.3 L687.5 630.1" fill="none" stroke="#1e96ff" stroke-width="5.4"/>
<path d="M771.5 570.3 L687.5 630.1" fill="none" stroke="#0f6cb8" stroke-width="3.2"/>
<path d="M371 519.2 L376.5 527.5 L400 522.9ZM400 522.9 L405.5 531.2 L429 526.7ZM429 526.7 L434.5 534.9 L458 530.4ZM458 530.4 L463.5 538.7 L487 534.1Z" fill="#0f6cb8"/>
<path d="M371 519.2 L376.5 527.5 L400 522.9 L405.5 531.2 L429 526.7 L434.5 534.9 L458 530.4 L463.5 538.7 L487 534.1" fill="none" stroke="#c888ea" stroke-width="1.7" stroke-linejoin="round"/>
<path d="M288 578.3 L311.5 573.8 L317 582ZM317 582 L340.5 577.5 L346 585.8ZM346 585.8 L369.5 581.2 L375 589.5ZM375 589.5 L398.5 584.9 L404 593.2Z" fill="#0f6cb8"/>
<path d="M288 578.3 L311.5 573.8 L317 582 L340.5 577.5 L346 585.8 L369.5 581.2 L375 589.5 L398.5 584.9 L404 593.2" fill="none" stroke="#c888ea" stroke-width="1.7" stroke-linejoin="round"/>
<path d="M487 534.1 L495.8 542.8 L522.5 538.7ZM522.5 538.7 L531.2 547.4 L558 543.2ZM558 543.2 L566.8 551.9 L593.5 547.8ZM593.5 547.8 L602.2 556.5 L629 552.4Z" fill="#0f6cb8"/>
<path d="M487 534.1 L495.8 542.8 L522.5 538.7 L531.2 547.4 L558 543.2 L566.8 551.9 L593.5 547.8 L602.2 556.5 L629 552.4" fill="none" stroke="#c888ea" stroke-width="1.7" stroke-linejoin="round"/>
<path d="M404 593.2 L430.8 589.1 L439.5 597.8ZM439.5 597.8 L466.2 593.6 L475 602.3ZM475 602.3 L501.8 598.2 L510.5 606.9ZM510.5 606.9 L537.2 602.8 L546 611.5Z" fill="#0f6cb8"/>
<path d="M404 593.2 L430.8 589.1 L439.5 597.8 L466.2 593.6 L475 602.3 L501.8 598.2 L510.5 606.9 L537.2 602.8 L546 611.5" fill="none" stroke="#c888ea" stroke-width="1.7" stroke-linejoin="round"/>
<path d="M629 552.4 L637.8 561 L664.5 556.9ZM664.5 556.9 L673.2 565.6 L700 561.5ZM700 561.5 L708.8 570.2 L735.5 566ZM735.5 566 L744.2 574.7 L771 570.6Z" fill="#0f6cb8"/>
<path d="M629 552.4 L637.8 561 L664.5 556.9 L673.2 565.6 L700 561.5 L708.8 570.2 L735.5 566 L744.2 574.7 L771 570.6" fill="none" stroke="#c888ea" stroke-width="1.7" stroke-linejoin="round"/>
<path d="M546 611.5 L572.8 607.3 L581.5 616ZM581.5 616 L608.2 611.9 L617 620.6ZM617 620.6 L643.8 616.5 L652.5 625.1ZM652.5 625.1 L679.2 621 L688 629.7Z" fill="#0f6cb8"/>
<path d="M546 611.5 L572.8 607.3 L581.5 616 L608.2 611.9 L617 620.6 L643.8 616.5 L652.5 625.1 L679.2 621 L688 629.7" fill="none" stroke="#c888ea" stroke-width="1.7" stroke-linejoin="round"/>
<path d="M372 518.9 L361.6 533.4 L334.3 545.8Z" fill="#0f6cb8"/>
<path d="M372 518.9 L361.6 533.4 L334.3 545.8" fill="none" stroke="#c888ea" stroke-width="1.7" stroke-linejoin="round"/>
<path d="M771 570.2 L743.6 582.5 L733.3 597Z" fill="#0f6cb8"/>
<path d="M771 570.2 L743.6 582.5 L733.3 597" fill="none" stroke="#c888ea" stroke-width="1.7" stroke-linejoin="round"/>
<path d="M334.3 545.8 L319.6 563.3 L288 578.7Z" fill="#0f6cb8"/>
<path d="M334.3 545.8 L319.6 563.3 L288 578.7" fill="none" stroke="#c888ea" stroke-width="1.7" stroke-linejoin="round"/>
<path d="M733.3 597 L701.6 612.4 L687 630Z" fill="#0f6cb8"/>
<path d="M733.3 597 L701.6 612.4 L687 630" fill="none" stroke="#c888ea" stroke-width="1.7" stroke-linejoin="round"/>
<path d="M285.5 578.4 L689.5 630.3 L689.5 636.8 L285.5 584.9Z" fill="#0f6cb8"/>
<path d="M285.5 584.9 L689.5 636.8" fill="none" stroke="#1e96ff" stroke-width="1.2"/>
<path d="M285.5 578.4 L689.5 630.3" fill="none" stroke="#1e96ff" stroke-width="1.2"/>
<path d="M775.5 569.1 L687.5 631.7 L687.5 638.2 L775.5 575.6Z" fill="#0b2a48"/>
<path d="M775.5 575.6 L687.5 638.2" fill="none" stroke="#1e96ff" stroke-width="1.3"/>
<path d="M775.5 569.1 L687.5 631.7" fill="none" stroke="#1e96ff" stroke-width="1.3"/>
<path d="M767.5 576.3L767.5 579.8M759.5 582L759.5 585.5M751.5 587.7L751.5 591.2M743.5 593.4L743.5 596.9M735.5 599.1L735.5 602.6M727.5 604.8L727.5 608.3M719.5 610.5L719.5 614M711.5 616.2L711.5 619.7M703.5 621.8L703.5 625.3M695.5 627.5L695.5 631" fill="none" stroke="#1878d0" stroke-width="0.8"/>
<clipPath id="c11"><path d="M771.5 570.3 L916.5 588.9 L878.8 615.7 L733.8 597.1Z" clip-rule="evenodd"/></clipPath>
<g clip-path="url(#c11)">
<path d="M771.5 570.3 L916.5 588.9 L878.8 615.7 L733.8 597.1Z" fill="#08c866"/>
<path d="M768.3 572.5L913.3 591.2M761.8 577.2L906.8 595.8M755.3 581.8L900.3 600.4M748.8 586.4L893.8 605M742.3 591L887.3 609.7M735.8 595.7L880.8 614.3" fill="none" stroke="#00ff84" stroke-width="2.3"/>
</g>
<path d="M807.8 574.9L770 601.8M844 579.6L806.3 606.4M880.2 584.2L842.5 611.1" fill="none" stroke="#06301c" stroke-width="0.9" stroke-dasharray="3.5 8"/>
<path d="M771.5 570.3 L916.5 588.9" fill="none" stroke="#1e96ff" stroke-width="5.4"/>
<path d="M771.5 570.3 L916.5 588.9" fill="none" stroke="#0f6cb8" stroke-width="3.2"/>
<path d="M733.8 597.1 L878.8 615.7" fill="none" stroke="#1e96ff" stroke-width="5.4"/>
<path d="M733.8 597.1 L878.8 615.7" fill="none" stroke="#0f6cb8" stroke-width="3.2"/>
<path d="M771.5 570.3 L733.8 597.1" fill="none" stroke="#1e96ff" stroke-width="5.4"/>
<path d="M771.5 570.3 L733.8 597.1" fill="none" stroke="#0f6cb8" stroke-width="3.2"/>
<path d="M916.5 588.9 L878.8 615.7" fill="none" stroke="#1e96ff" stroke-width="5.4"/>
<path d="M916.5 588.9 L878.8 615.7" fill="none" stroke="#0f6cb8" stroke-width="3.2"/>
<path d="M771 570.6 L780.1 579.3 L807.2 575.3ZM807.2 575.3 L816.4 584 L843.5 579.9ZM843.5 579.9 L852.6 588.7 L879.8 584.6ZM879.8 584.6 L888.9 593.3 L916 589.2Z" fill="#0f6cb8"/>
<path d="M771 570.6 L780.1 579.3 L807.2 575.3 L816.4 584 L843.5 579.9 L852.6 588.7 L879.8 584.6 L888.9 593.3 L916 589.2" fill="none" stroke="#c888ea" stroke-width="1.7" stroke-linejoin="round"/>
<path d="M734.3 596.7 L761.4 592.7 L770.5 601.4ZM770.5 601.4 L797.7 597.3 L806.8 606.1ZM806.8 606.1 L833.9 602 L843 610.7ZM843 610.7 L870.2 606.6 L879.3 615.4Z" fill="#0f6cb8"/>
<path d="M734.3 596.7 L761.4 592.7 L770.5 601.4 L797.7 597.3 L806.8 606.1 L833.9 602 L843 610.7 L870.2 606.6 L879.3 615.4" fill="none" stroke="#c888ea" stroke-width="1.7" stroke-linejoin="round"/>
<path d="M772 570.3 L761.6 584.8 L734.3 597.2Z" fill="#0f6cb8"/>
<path d="M772 570.3 L761.6 584.8 L734.3 597.2" fill="none" stroke="#c888ea" stroke-width="1.7" stroke-linejoin="round"/>
<path d="M916 588.8 L888.6 601.1 L878.3 615.7Z" fill="#0f6cb8"/>
<path d="M916 588.8 L888.6 601.1 L878.3 615.7" fill="none" stroke="#c888ea" stroke-width="1.7" stroke-linejoin="round"/>
<path d="M731.8 596.8 L880.8 616 L880.8 622.5 L731.8 603.3Z" fill="#0f6cb8"/>
<path d="M731.8 603.3 L880.8 622.5" fill="none" stroke="#1e96ff" stroke-width="1.2"/>
<path d="M731.8 596.8 L880.8 616" fill="none" stroke="#1e96ff" stroke-width="1.2"/>
<path d="M920.5 587.7 L878.8 617.4 L878.8 623.9 L920.5 594.2Z" fill="#0b2a48"/>
<path d="M920.5 594.2 L878.8 623.9" fill="none" stroke="#1e96ff" stroke-width="1.3"/>
<path d="M920.5 587.7 L878.8 617.4" fill="none" stroke="#1e96ff" stroke-width="1.3"/>
<path d="M912.2 595.2L912.2 598.7M903.8 601.1L903.8 604.6M895.5 607L895.5 610.5M887.1 613L887.1 616.5" fill="none" stroke="#1878d0" stroke-width="0.8"/>
<rect x="282.3" y="578.7" width="10.4" height="55" fill="#b45200"/>
<path d="M282.8 578.7V633.7M289.9 578.7V633.7M292.2 578.7V633.7" stroke="#ff8000" stroke-width="1" fill="none"/>
<rect x="398.3" y="593.6" width="10.4" height="55" fill="#b45200"/>
<path d="M398.8 593.6V648.6M405.9 593.6V648.6M408.2 593.6V648.6" stroke="#ff8000" stroke-width="1" fill="none"/>
<rect x="540.3" y="611.8" width="10.4" height="55" fill="#b45200"/>
<path d="M540.8 611.8V666.8M547.9 611.8V666.8M550.2 611.8V666.8" stroke="#ff8000" stroke-width="1" fill="none"/>
<rect x="682.3" y="630.1" width="10.4" height="55" fill="#b45200"/>
<path d="M682.8 630.1V685.1M689.9 630.1V685.1M692.2 630.1V685.1" stroke="#ff8000" stroke-width="1" fill="none"/>
<rect x="1007.3" y="520.5" width="10.4" height="55" fill="#b45200"/>
<path d="M1007.8 520.5V575.5M1014.9 520.5V575.5M1017.2 520.5V575.5" stroke="#ff8000" stroke-width="1" fill="none"/>
<rect x="975.3" y="543.3" width="10.4" height="55" fill="#b45200"/>
<path d="M975.8 543.3V598.3M982.9 543.3V598.3M985.2 543.3V598.3" stroke="#ff8000" stroke-width="1" fill="none"/>
<rect x="943.3" y="566.1" width="10.4" height="55" fill="#b45200"/>
<path d="M943.8 566.1V621.1M950.9 566.1V621.1M953.2 566.1V621.1" stroke="#ff8000" stroke-width="1" fill="none"/>
<rect x="911.3" y="588.9" width="10.4" height="55" fill="#b45200"/>
<path d="M911.8 588.9V643.9M918.9 588.9V643.9M921.2 588.9V643.9" stroke="#ff8000" stroke-width="1" fill="none"/>
<rect x="873.6" y="615.7" width="10.4" height="55" fill="#b45200"/>
<path d="M874.1 615.7V670.7M881.2 615.7V670.7M883.5 615.7V670.7" stroke="#ff8000" stroke-width="1" fill="none"/>
<rect x="728.6" y="597.1" width="10.4" height="55" fill="#b45200"/>
<path d="M729.1 597.1V652.1M736.2 597.1V652.1M738.5 597.1V652.1" stroke="#ff8000" stroke-width="1" fill="none"/>
<rect x="462.3" y="375.8" width="10.4" height="74.7" fill="#b45200"/>
<path d="M462.8 375.8V450.5M469.9 375.8V450.5M472.2 375.8V450.5" stroke="#ff8000" stroke-width="1" fill="none"/>
<rect x="578.3" y="390.7" width="10.4" height="74.7" fill="#b45200"/>
<path d="M578.8 390.7V465.4M585.9 390.7V465.4M588.2 390.7V465.4" stroke="#ff8000" stroke-width="1" fill="none"/>
<rect x="720.3" y="409" width="10.4" height="74.7" fill="#b45200"/>
<path d="M720.8 409V483.7M727.9 409V483.7M730.2 409V483.7" stroke="#ff8000" stroke-width="1" fill="none"/>
<rect x="862.3" y="427.2" width="10.4" height="74.7" fill="#b45200"/>
<path d="M862.8 427.2V501.9M869.9 427.2V501.9M872.2 427.2V501.9" stroke="#ff8000" stroke-width="1" fill="none"/>
<rect x="1007.3" y="445.8" width="10.4" height="74.7" fill="#b45200"/>
<path d="M1007.8 445.8V520.5M1014.9 445.8V520.5M1017.2 445.8V520.5" stroke="#ff8000" stroke-width="1" fill="none"/>
<rect x="430.3" y="398.6" width="10.4" height="74.7" fill="#b45200"/>
<path d="M430.8 398.6V473.3M437.9 398.6V473.3M440.2 398.6V473.3" stroke="#ff8000" stroke-width="1" fill="none"/>
<rect x="830.3" y="450" width="10.4" height="74.7" fill="#b45200"/>
<path d="M830.8 450V524.7M837.9 450V524.7M840.2 450V524.7" stroke="#ff8000" stroke-width="1" fill="none"/>
<rect x="975.3" y="468.6" width="10.4" height="74.7" fill="#b45200"/>
<path d="M975.8 468.6V543.3M982.9 468.6V543.3M985.2 468.6V543.3" stroke="#ff8000" stroke-width="1" fill="none"/>
<rect x="398.3" y="421.4" width="10.4" height="74.7" fill="#b45200"/>
<path d="M398.8 421.4V496.1M405.9 421.4V496.1M408.2 421.4V496.1" stroke="#ff8000" stroke-width="1" fill="none"/>
<rect x="798.3" y="472.8" width="10.4" height="74.7" fill="#b45200"/>
<path d="M798.8 472.8V547.5M805.9 472.8V547.5M808.2 472.8V547.5" stroke="#ff8000" stroke-width="1" fill="none"/>
<rect x="943.3" y="491.4" width="10.4" height="74.7" fill="#b45200"/>
<path d="M943.8 491.4V566.1M950.9 491.4V566.1M953.2 491.4V566.1" stroke="#ff8000" stroke-width="1" fill="none"/>
<rect x="366.3" y="444.2" width="10.4" height="74.7" fill="#b45200"/>
<path d="M366.8 444.2V518.9M373.9 444.2V518.9M376.2 444.2V518.9" stroke="#ff8000" stroke-width="1" fill="none"/>
<rect x="482.3" y="459.1" width="10.4" height="74.7" fill="#b45200"/>
<path d="M482.8 459.1V533.8M489.9 459.1V533.8M492.2 459.1V533.8" stroke="#ff8000" stroke-width="1" fill="none"/>
<rect x="624.3" y="477.3" width="10.4" height="74.7" fill="#b45200"/>
<path d="M624.8 477.3V552M631.9 477.3V552M634.2 477.3V552" stroke="#ff8000" stroke-width="1" fill="none"/>
<rect x="766.3" y="495.6" width="10.4" height="74.7" fill="#b45200"/>
<path d="M766.8 495.6V570.3M773.9 495.6V570.3M776.2 495.6V570.3" stroke="#ff8000" stroke-width="1" fill="none"/>
<rect x="911.3" y="514.2" width="10.4" height="74.7" fill="#b45200"/>
<path d="M911.8 514.2V588.9M918.9 514.2V588.9M921.2 514.2V588.9" stroke="#ff8000" stroke-width="1" fill="none"/>
<path d="M371.5 518.9 L487.5 459.1" fill="none" stroke="#a870d2" stroke-width="4.2" stroke-linecap="butt"/>
<path d="M371.5 518.9 L487.5 459.1" fill="none" stroke="#cc98ee" stroke-width="2.2"/>
<path d="M487.5 533.8 L371.5 444.2" fill="none" stroke="#a870d2" stroke-width="4.2" stroke-linecap="butt"/>
<path d="M487.5 533.8 L371.5 444.2" fill="none" stroke="#cc98ee" stroke-width="2.2"/>
<path d="M487.5 533.8 L585.5 471.6" fill="none" stroke="#a870d2" stroke-width="4.2" stroke-linecap="butt"/>
<path d="M487.5 533.8 L585.5 471.6" fill="none" stroke="#cc98ee" stroke-width="2.2"/>
<path d="M585.5 546.3 L487.5 459.1" fill="none" stroke="#a870d2" stroke-width="4.2" stroke-linecap="butt"/>
<path d="M585.5 546.3 L487.5 459.1" fill="none" stroke="#cc98ee" stroke-width="2.2"/>
<path d="M771.5 570.3 L844 504.9" fill="none" stroke="#a870d2" stroke-width="4.2" stroke-linecap="butt"/>
<path d="M771.5 570.3 L844 504.9" fill="none" stroke="#cc98ee" stroke-width="2.2"/>
<path d="M916.5 588.9 L844 504.9" fill="none" stroke="#a870d2" stroke-width="4.2" stroke-linecap="butt"/>
<path d="M916.5 588.9 L844 504.9" fill="none" stroke="#cc98ee" stroke-width="2.2"/>
<path d="M982 483 L1008 513" fill="none" stroke="#a870d2" stroke-width="4.2" stroke-linecap="butt"/>
<path d="M982 483 L1008 513" fill="none" stroke="#cc98ee" stroke-width="2.2"/>
<path d="M928.5 440.4L917.5 448.2M943.5 442.3L932.5 450.2M958.5 444.3L947.5 452.1M971.5 447.6L961.5 454.7M986.5 449.5L976.5 456.7M869.5 444.6L859.5 451.7M884.5 446.5L874.5 453.6" fill="none" stroke="#0fc468" stroke-width="3.6"/>
<path d="M928.5 440.4L917.5 448.2M943.5 442.3L932.5 450.2M958.5 444.3L947.5 452.1M971.5 447.6L961.5 454.7M986.5 449.5L976.5 456.7M869.5 444.6L859.5 451.7M884.5 446.5L874.5 453.6" fill="none" stroke="#053a1e" stroke-width="1.6" stroke-dasharray="2.5 2"/>
<clipPath id="c12"><path d="M867.5 427.2 L1012.5 445.8 L916.5 514.2 L771.5 495.6ZM923.5 439.4 L961.5 444.3 L954.5 449.3 L916.5 444.4ZM967.5 446.8 L995.5 450.4 L989.5 454.6 L961.5 451ZM867.5 444 L897.5 447.9 L891.5 452.1 L861.5 448.3Z" clip-rule="evenodd"/></clipPath>
<g clip-path="url(#c12)">
<path d="M867.5 427.2 L1012.5 445.8 L916.5 514.2 L771.5 495.6Z" fill="#08c866"/>
<path d="M864.3 429.5L1009.3 448.1M857.8 434.1L1002.8 452.7M851.3 438.7L996.3 457.4M844.8 443.4L989.8 462M838.3 448L983.3 466.6M831.8 452.6L976.8 471.3M825.3 457.2L970.3 475.9M818.8 461.9L963.8 480.5M812.3 466.5L957.3 485.1M805.8 471.1L950.8 489.8M799.3 475.8L944.3 494.4M792.8 480.4L937.8 499M786.3 485L931.3 503.6M779.8 489.6L924.8 508.3M773.3 494.3L918.3 512.9" fill="none" stroke="#00ff84" stroke-width="2.3"/>
</g>
<path d="M923.5 439.4 L961.5 444.3 L954.5 449.3 L916.5 444.4Z" fill="none" stroke="#0a9a50" stroke-width="0.8"/>
<path d="M967.5 446.8 L995.5 450.4 L989.5 454.6 L961.5 451Z" fill="none" stroke="#0a9a50" stroke-width="0.8"/>
<path d="M867.5 444 L897.5 447.9 L891.5 452.1 L861.5 448.3Z" fill="none" stroke="#0a9a50" stroke-width="0.8"/>
<path d="M903.8 431.9L807.8 500.2M940 436.5L844 504.9M976.2 441.2L880.2 509.5" fill="none" stroke="#06301c" stroke-width="0.9" stroke-dasharray="3.5 8"/>
<path d="M867.5 427.2 L1012.5 445.8" fill="none" stroke="#1e96ff" stroke-width="5.4"/>
<path d="M867.5 427.2 L1012.5 445.8" fill="none" stroke="#0f6cb8" stroke-width="3.2"/>
<path d="M835.5 450 L980.5 468.6" fill="none" stroke="#1e96ff" stroke-width="5.4"/>
<path d="M835.5 450 L980.5 468.6" fill="none" stroke="#0f6cb8" stroke-width="3.2"/>
<path d="M803.5 472.8 L948.5 491.4" fill="none" stroke="#1e96ff" stroke-width="5.4"/>
<path d="M803.5 472.8 L948.5 491.4" fill="none" stroke="#0f6cb8" stroke-width="3.2"/>
<path d="M771.5 495.6 L916.5 514.2" fill="none" stroke="#1e96ff" stroke-width="5.4"/>
<path d="M771.5 495.6 L916.5 514.2" fill="none" stroke="#0f6cb8" stroke-width="3.2"/>
<path d="M867.5 427.2 L771.5 495.6" fill="none" stroke="#1e96ff" stroke-width="5.4"/>
<path d="M867.5 427.2 L771.5 495.6" fill="none" stroke="#0f6cb8" stroke-width="3.2"/>
<path d="M1012.5 445.8 L916.5 514.2" fill="none" stroke="#1e96ff" stroke-width="5.4"/>
<path d="M1012.5 445.8 L916.5 514.2" fill="none" stroke="#0f6cb8" stroke-width="3.2"/>
<path d="M867 427.6 L876.1 436.3 L903.2 432.2ZM903.2 432.2 L912.4 441 L939.5 436.9ZM939.5 436.9 L948.6 445.6 L975.8 441.5ZM975.8 441.5 L984.9 450.3 L1012 446.2Z" fill="#0f6cb8"/>
<path d="M867 427.6 L876.1 436.3 L903.2 432.2 L912.4 441 L939.5 436.9 L948.6 445.6 L975.8 441.5 L984.9 450.3 L1012 446.2" fill="none" stroke="#c888ea" stroke-width="1.7" stroke-linejoin="round"/>
<path d="M772 495.2 L799.1 491.1 L808.2 499.9ZM808.2 499.9 L835.4 495.8 L844.5 504.5ZM844.5 504.5 L871.6 500.4 L880.8 509.2ZM880.8 509.2 L907.9 505.1 L917 513.8Z" fill="#0f6cb8"/>
<path d="M772 495.2 L799.1 491.1 L808.2 499.9 L835.4 495.8 L844.5 504.5 L871.6 500.4 L880.8 509.2 L907.9 505.1 L917 513.8" fill="none" stroke="#c888ea" stroke-width="1.7" stroke-linejoin="round"/>
<path d="M868 427.3 L860.5 439.7 L836 450Z" fill="#0f6cb8"/>
<path d="M868 427.3 L860.5 439.7 L836 450" fill="none" stroke="#c888ea" stroke-width="1.7" stroke-linejoin="round"/>
<path d="M1012 445.8 L987.5 456.1 L980 468.6Z" fill="#0f6cb8"/>
<path d="M1012 445.8 L987.5 456.1 L980 468.6" fill="none" stroke="#c888ea" stroke-width="1.7" stroke-linejoin="round"/>
<path d="M836 450 L828.5 462.5 L804 472.8Z" fill="#0f6cb8"/>
<path d="M836 450 L828.5 462.5 L804 472.8" fill="none" stroke="#c888ea" stroke-width="1.7" stroke-linejoin="round"/>
<path d="M980 468.6 L955.5 478.9 L948 491.3Z" fill="#0f6cb8"/>
<path d="M980 468.6 L955.5 478.9 L948 491.3" fill="none" stroke="#c888ea" stroke-width="1.7" stroke-linejoin="round"/>
<path d="M804 472.8 L796.5 485.3 L772 495.6Z" fill="#0f6cb8"/>
<path d="M804 472.8 L796.5 485.3 L772 495.6" fill="none" stroke="#c888ea" stroke-width="1.7" stroke-linejoin="round"/>
<path d="M948 491.3 L923.5 501.6 L916 514.1Z" fill="#0f6cb8"/>
<path d="M948 491.3 L923.5 501.6 L916 514.1" fill="none" stroke="#c888ea" stroke-width="1.7" stroke-linejoin="round"/>
<path d="M769.5 495.3 L918.5 514.4 L918.5 520.9 L769.5 501.8Z" fill="#0f6cb8"/>
<path d="M769.5 501.8 L918.5 520.9" fill="none" stroke="#1e96ff" stroke-width="1.2"/>
<path d="M769.5 495.3 L918.5 514.4" fill="none" stroke="#1e96ff" stroke-width="1.2"/>
<path d="M1016.5 444.7 L916.5 515.9 L916.5 522.4 L1016.5 451.2Z" fill="#0b2a48"/>
<path d="M1016.5 451.2 L916.5 522.4" fill="none" stroke="#1e96ff" stroke-width="1.3"/>
<path d="M1016.5 444.7 L916.5 515.9" fill="none" stroke="#1e96ff" stroke-width="1.3"/>
<path d="M1008.2 452.1L1008.2 455.6M999.8 458L999.8 461.5M991.5 464L991.5 467.5M983.2 469.9L983.2 473.4M974.8 475.8L974.8 479.3M966.5 481.8L966.5 485.3M958.2 487.7L958.2 491.2M949.8 493.6L949.8 497.1M941.5 499.6L941.5 503.1M933.2 505.5L933.2 509M924.8 511.4L924.8 514.9" fill="none" stroke="#1878d0" stroke-width="0.8"/>
<path d="M921.5 447.6 L982.5 455.4" fill="none" stroke="#1e96ff" stroke-width="4.4"/>
<path d="M921.5 447.6 L982.5 455.4" fill="none" stroke="#0f6cb8" stroke-width="2.6"/>
<path d="M833.5 463.2 L897.5 471.4" fill="none" stroke="#1e96ff" stroke-width="4.4"/>
<path d="M833.5 463.2 L897.5 471.4" fill="none" stroke="#0f6cb8" stroke-width="2.6"/>
<path d="M435.5 412.6 L835.5 464M403.5 435.4 L803.5 486.8M371.5 458.2 L467.5 389.8" fill="none" stroke="#222" stroke-width="0.8"/>
<path d="M467.5 375.8 L867.5 427.2" fill="none" stroke="#1e96ff" stroke-width="6"/>
<path d="M467.5 375.8 L867.5 427.2" fill="none" stroke="#0f6cb8" stroke-width="3.8"/>
<path d="M467.5 375.8 L371.5 444.2" fill="none" stroke="#1e96ff" stroke-width="5"/>
<path d="M467.5 375.8 L371.5 444.2" fill="none" stroke="#0f6cb8" stroke-width="2.8"/>
<path d="M435.5 398.6 L551.5 413.5" fill="none" stroke="#1e96ff" stroke-width="3.2"/>
<path d="M435.5 398.6 L551.5 413.5" fill="none" stroke="#0f6cb8" stroke-width="1.6"/>
<path d="M551.5 413.5 L693.5 431.7" fill="none" stroke="#00ff84" stroke-width="3.2"/>
<path d="M551.5 413.5 L693.5 431.7" fill="none" stroke="#10d070" stroke-width="1.6"/>
<path d="M693.5 431.7 L835.5 450" fill="none" stroke="#1e96ff" stroke-width="3.2"/>
<path d="M693.5 431.7 L835.5 450" fill="none" stroke="#0f6cb8" stroke-width="1.6"/>
<path d="M403.5 421.4 L519.5 436.3" fill="none" stroke="#1e96ff" stroke-width="3.2"/>
<path d="M403.5 421.4 L519.5 436.3" fill="none" stroke="#0f6cb8" stroke-width="1.6"/>
<path d="M519.5 436.3 L661.5 454.5" fill="none" stroke="#00ff84" stroke-width="3.2"/>
<path d="M519.5 436.3 L661.5 454.5" fill="none" stroke="#10d070" stroke-width="1.6"/>
<path d="M661.5 454.5 L803.5 472.8" fill="none" stroke="#1e96ff" stroke-width="3.2"/>
<path d="M661.5 454.5 L803.5 472.8" fill="none" stroke="#0f6cb8" stroke-width="1.6"/>
<path d="M467.5 375.8 L551.5 413.5" fill="none" stroke="#a870d2" stroke-width="3.6" stroke-linecap="butt"/>
<path d="M467.5 375.8 L551.5 413.5" fill="none" stroke="#cc98ee" stroke-width="1.6"/>
<path d="M435.5 398.6 L583.5 390.7" fill="none" stroke="#a870d2" stroke-width="3.6" stroke-linecap="butt"/>
<path d="M435.5 398.6 L583.5 390.7" fill="none" stroke="#cc98ee" stroke-width="1.6"/>
<path d="M435.5 398.6 L519.5 436.3" fill="none" stroke="#a870d2" stroke-width="3.6" stroke-linecap="butt"/>
<path d="M435.5 398.6 L519.5 436.3" fill="none" stroke="#cc98ee" stroke-width="1.6"/>
<path d="M403.5 421.4 L551.5 413.5" fill="none" stroke="#a870d2" stroke-width="3.6" stroke-linecap="butt"/>
<path d="M403.5 421.4 L551.5 413.5" fill="none" stroke="#cc98ee" stroke-width="1.6"/>
<path d="M403.5 421.4 L487.5 459.1" fill="none" stroke="#a870d2" stroke-width="3.6" stroke-linecap="butt"/>
<path d="M403.5 421.4 L487.5 459.1" fill="none" stroke="#cc98ee" stroke-width="1.6"/>
<path d="M371.5 444.2 L519.5 436.3" fill="none" stroke="#a870d2" stroke-width="3.6" stroke-linecap="butt"/>
<path d="M371.5 444.2 L519.5 436.3" fill="none" stroke="#cc98ee" stroke-width="1.6"/>
<path d="M583.5 390.7 L487.5 459.1" fill="none" stroke="#1e96ff" stroke-width="5"/>
<path d="M583.5 390.7 L487.5 459.1" fill="none" stroke="#0f6cb8" stroke-width="2.8"/>
<path d="M585.5 392 L489.5 460.3 L489.5 466.3 L585.5 398Z" fill="#0b2a48"/>
<path d="M585.5 398 L489.5 466.3" fill="none" stroke="#1e96ff" stroke-width="1.3"/>
<path d="M585.5 392 L489.5 460.3" fill="none" stroke="#1e96ff" stroke-width="1.3"/>
<path d="M577.5 399.2L577.5 402.2M569.5 404.9L569.5 407.9M561.5 410.6L561.5 413.6M553.5 416.2L553.5 419.2M545.5 421.9L545.5 424.9M537.5 427.6L537.5 430.6M529.5 433.3L529.5 436.3M521.5 439L521.5 442M513.5 444.7L513.5 447.7M505.5 450.4L505.5 453.4M497.5 456.1L497.5 459.1" fill="none" stroke="#1878d0" stroke-width="0.8"/>
<path d="M725.5 409 L629.5 477.3" fill="none" stroke="#1e96ff" stroke-width="5"/>
<path d="M725.5 409 L629.5 477.3" fill="none" stroke="#0f6cb8" stroke-width="2.8"/>
<path d="M727.5 410.2 L631.5 478.6 L631.5 484.6 L727.5 416.2Z" fill="#0b2a48"/>
<path d="M727.5 416.2 L631.5 484.6" fill="none" stroke="#1e96ff" stroke-width="1.3"/>
<path d="M727.5 410.2 L631.5 478.6" fill="none" stroke="#1e96ff" stroke-width="1.3"/>
<path d="M719.5 417.4L719.5 420.4M711.5 423.1L711.5 426.1M703.5 428.8L703.5 431.8M695.5 434.5L695.5 437.5M687.5 440.2L687.5 443.2M679.5 445.9L679.5 448.9M671.5 451.6L671.5 454.6M663.5 457.3L663.5 460.3M655.5 463L655.5 466M647.5 468.7L647.5 471.7M639.5 474.4L639.5 477.4" fill="none" stroke="#1878d0" stroke-width="0.8"/>
<path d="M371.5 444.2 L771.5 495.6" fill="none" stroke="#1e96ff" stroke-width="6"/>
<path d="M371.5 444.2 L771.5 495.6" fill="none" stroke="#0f6cb8" stroke-width="3.8"/>
<path d="M369.5 445.9 L771.5 497.6 L771.5 503.6 L369.5 451.9Z" fill="#0f6cb8"/>
<path d="M369.5 451.9 L771.5 503.6" fill="none" stroke="#1e96ff" stroke-width="1.2"/>
<path d="M369.5 445.9 L771.5 497.6" fill="none" stroke="#1e96ff" stroke-width="1.2"/>
<rect x="1007.3" y="445.8" width="10.4" height="74.7" fill="#b45200"/>
<path d="M1007.8 445.8V520.5M1014.9 445.8V520.5M1017.2 445.8V520.5" stroke="#ff8000" stroke-width="1" fill="none"/>
<rect x="975.3" y="468.6" width="10.4" height="74.7" fill="#b45200"/>
<path d="M975.8 468.6V543.3M982.9 468.6V543.3M985.2 468.6V543.3" stroke="#ff8000" stroke-width="1" fill="none"/>
<rect x="943.3" y="491.4" width="10.4" height="74.7" fill="#b45200"/>
<path d="M943.8 491.4V566.1M950.9 491.4V566.1M953.2 491.4V566.1" stroke="#ff8000" stroke-width="1" fill="none"/>
<rect x="766.3" y="495.6" width="10.4" height="74.7" fill="#b45200"/>
<path d="M766.8 495.6V570.3M773.9 495.6V570.3M776.2 495.6V570.3" stroke="#ff8000" stroke-width="1" fill="none"/>
<rect x="911.3" y="514.2" width="10.4" height="74.7" fill="#b45200"/>
<path d="M911.8 514.2V588.9M918.9 514.2V588.9M921.2 514.2V588.9" stroke="#ff8000" stroke-width="1" fill="none"/>
<rect x="462.3" y="375.8" width="10.4" height="74.7" fill="#b45200"/>
<path d="M462.8 375.8V450.5M469.9 375.8V450.5M472.2 375.8V450.5" stroke="#ff8000" stroke-width="1" fill="none"/>
<rect x="430.3" y="398.6" width="10.4" height="74.7" fill="#b45200"/>
<path d="M430.8 398.6V473.3M437.9 398.6V473.3M440.2 398.6V473.3" stroke="#ff8000" stroke-width="1" fill="none"/>
<rect x="398.3" y="421.4" width="10.4" height="74.7" fill="#b45200"/>
<path d="M398.8 421.4V496.1M405.9 421.4V496.1M408.2 421.4V496.1" stroke="#ff8000" stroke-width="1" fill="none"/>
<rect x="366.3" y="444.2" width="10.4" height="74.7" fill="#b45200"/>
<path d="M366.8 444.2V518.9M373.9 444.2V518.9M376.2 444.2V518.9" stroke="#ff8000" stroke-width="1" fill="none"/>
<rect x="578.3" y="390.7" width="10.4" height="74.7" fill="#b45200"/>
<path d="M578.8 390.7V465.4M585.9 390.7V465.4M588.2 390.7V465.4" stroke="#ff8000" stroke-width="1" fill="none"/>
<rect x="720.3" y="409" width="10.4" height="74.7" fill="#b45200"/>
<path d="M720.8 409V483.7M727.9 409V483.7M730.2 409V483.7" stroke="#ff8000" stroke-width="1" fill="none"/>
<rect x="482.3" y="459.1" width="10.4" height="74.7" fill="#b45200"/>
<path d="M482.8 459.1V533.8M489.9 459.1V533.8M492.2 459.1V533.8" stroke="#ff8000" stroke-width="1" fill="none"/>
<rect x="624.3" y="477.3" width="10.4" height="74.7" fill="#b45200"/>
<path d="M624.8 477.3V552M631.9 477.3V552M634.2 477.3V552" stroke="#ff8000" stroke-width="1" fill="none"/>
<rect x="862.3" y="326.2" width="10.4" height="101" fill="#b45200"/>
<path d="M862.8 326.2V427.2M869.9 326.2V427.2M872.2 326.2V427.2" stroke="#ff8000" stroke-width="1" fill="none"/>
<rect x="1007.3" y="344.8" width="10.4" height="101" fill="#b45200"/>
<path d="M1007.8 344.8V445.8M1014.9 344.8V445.8M1017.2 344.8V445.8" stroke="#ff8000" stroke-width="1" fill="none"/>
<rect x="830.3" y="349" width="10.4" height="101" fill="#b45200"/>
<path d="M830.8 349V450M837.9 349V450M840.2 349V450" stroke="#ff8000" stroke-width="1" fill="none"/>
<rect x="975.3" y="367.6" width="10.4" height="101" fill="#b45200"/>
<path d="M975.8 367.6V468.6M982.9 367.6V468.6M985.2 367.6V468.6" stroke="#ff8000" stroke-width="1" fill="none"/>
<rect x="798.3" y="371.8" width="10.4" height="101" fill="#b45200"/>
<path d="M798.8 371.8V472.8M805.9 371.8V472.8M808.2 371.8V472.8" stroke="#ff8000" stroke-width="1" fill="none"/>
<rect x="943.3" y="390.4" width="10.4" height="101" fill="#b45200"/>
<path d="M943.8 390.4V491.4M950.9 390.4V491.4M953.2 390.4V491.4" stroke="#ff8000" stroke-width="1" fill="none"/>
<rect x="766.3" y="394.6" width="10.4" height="101" fill="#b45200"/>
<path d="M766.8 394.6V495.6M773.9 394.6V495.6M776.2 394.6V495.6" stroke="#ff8000" stroke-width="1" fill="none"/>
<rect x="911.3" y="413.2" width="10.4" height="101" fill="#b45200"/>
<path d="M911.8 413.2V514.2M918.9 413.2V514.2M921.2 413.2V514.2" stroke="#ff8000" stroke-width="1" fill="none"/>
<path d="M771.5 495.6 L916.5 413.2" fill="none" stroke="#a870d2" stroke-width="4.2" stroke-linecap="butt"/>
<path d="M771.5 495.6 L916.5 413.2" fill="none" stroke="#cc98ee" stroke-width="2.2"/>
<path d="M916.5 514.2 L771.5 394.6" fill="none" stroke="#a870d2" stroke-width="4.2" stroke-linecap="butt"/>
<path d="M916.5 514.2 L771.5 394.6" fill="none" stroke="#cc98ee" stroke-width="2.2"/>
<path d="M950 393 L1008 442" fill="none" stroke="#a870d2" stroke-width="4.2" stroke-linecap="butt"/>
<path d="M950 393 L1008 442" fill="none" stroke="#cc98ee" stroke-width="2.2"/>
<rect x="1007.3" y="344.8" width="10.4" height="101" fill="#b45200"/>
<path d="M1007.8 344.8V445.8M1014.9 344.8V445.8M1017.2 344.8V445.8" stroke="#ff8000" stroke-width="1" fill="none"/>
<rect x="975.3" y="367.6" width="10.4" height="101" fill="#b45200"/>
<path d="M975.8 367.6V468.6M982.9 367.6V468.6M985.2 367.6V468.6" stroke="#ff8000" stroke-width="1" fill="none"/>
<rect x="943.3" y="390.4" width="10.4" height="101" fill="#b45200"/>
<path d="M943.8 390.4V491.4M950.9 390.4V491.4M953.2 390.4V491.4" stroke="#ff8000" stroke-width="1" fill="none"/>
<rect x="766.3" y="394.6" width="10.4" height="101" fill="#b45200"/>
<path d="M766.8 394.6V495.6M773.9 394.6V495.6M776.2 394.6V495.6" stroke="#ff8000" stroke-width="1" fill="none"/>
<rect x="911.3" y="413.2" width="10.4" height="101" fill="#b45200"/>
<path d="M911.8 413.2V514.2M918.9 413.2V514.2M921.2 413.2V514.2" stroke="#ff8000" stroke-width="1" fill="none"/>
<path d="M928.5 339.4L917.5 347.2M943.5 341.3L932.5 349.2M958.5 343.3L947.5 351.1M971.5 346.6L961.5 353.7M986.5 348.5L976.5 355.7M869.5 343.6L859.5 350.7M884.5 345.5L874.5 352.6" fill="none" stroke="#0fc468" stroke-width="3.6"/>
<path d="M928.5 339.4L917.5 347.2M943.5 341.3L932.5 349.2M958.5 343.3L947.5 351.1M971.5 346.6L961.5 353.7M986.5 348.5L976.5 355.7M869.5 343.6L859.5 350.7M884.5 345.5L874.5 352.6" fill="none" stroke="#053a1e" stroke-width="1.6" stroke-dasharray="2.5 2"/>
<clipPath id="c13"><path d="M867.5 326.2 L1012.5 344.8 L916.5 413.2 L771.5 394.6ZM923.5 338.4 L961.5 343.3 L954.5 348.3 L916.5 343.4ZM967.5 345.8 L995.5 349.4 L989.5 353.6 L961.5 350ZM867.5 343 L897.5 346.9 L891.5 351.1 L861.5 347.3Z" clip-rule="evenodd"/></clipPath>
<g clip-path="url(#c13)">
<path d="M867.5 326.2 L1012.5 344.8 L916.5 413.2 L771.5 394.6Z" fill="#08c866"/>
<path d="M864.3 328.5L1009.3 347.1M857.8 333.1L1002.8 351.7M851.3 337.7L996.3 356.4M844.8 342.4L989.8 361M838.3 347L983.3 365.6M831.8 351.6L976.8 370.3M825.3 356.2L970.3 374.9M818.8 360.9L963.8 379.5M812.3 365.5L957.3 384.1M805.8 370.1L950.8 388.8M799.3 374.8L944.3 393.4M792.8 379.4L937.8 398M786.3 384L931.3 402.6M779.8 388.6L924.8 407.3M773.3 393.3L918.3 411.9" fill="none" stroke="#00ff84" stroke-width="2.3"/>
</g>
<path d="M923.5 338.4 L961.5 343.3 L954.5 348.3 L916.5 343.4Z" fill="none" stroke="#0a9a50" stroke-width="0.8"/>
<path d="M967.5 345.8 L995.5 349.4 L989.5 353.6 L961.5 350Z" fill="none" stroke="#0a9a50" stroke-width="0.8"/>
<path d="M867.5 343 L897.5 346.9 L891.5 351.1 L861.5 347.3Z" fill="none" stroke="#0a9a50" stroke-width="0.8"/>
<path d="M903.8 330.9L807.8 399.2M940 335.5L844 403.9M976.2 340.2L880.2 408.5" fill="none" stroke="#06301c" stroke-width="0.9" stroke-dasharray="3.5 8"/>
<path d="M867.5 326.2 L1012.5 344.8" fill="none" stroke="#1e96ff" stroke-width="5.4"/>
<path d="M867.5 326.2 L1012.5 344.8" fill="none" stroke="#0f6cb8" stroke-width="3.2"/>
<path d="M835.5 349 L980.5 367.6" fill="none" stroke="#1e96ff" stroke-width="5.4"/>
<path d="M835.5 349 L980.5 367.6" fill="none" stroke="#0f6cb8" stroke-width="3.2"/>
<path d="M803.5 371.8 L948.5 390.4" fill="none" stroke="#1e96ff" stroke-width="5.4"/>
<path d="M803.5 371.8 L948.5 390.4" fill="none" stroke="#0f6cb8" stroke-width="3.2"/>
<path d="M771.5 394.6 L916.5 413.2" fill="none" stroke="#1e96ff" stroke-width="5.4"/>
<path d="M771.5 394.6 L916.5 413.2" fill="none" stroke="#0f6cb8" stroke-width="3.2"/>
<path d="M867.5 326.2 L771.5 394.6" fill="none" stroke="#1e96ff" stroke-width="5.4"/>
<path d="M867.5 326.2 L771.5 394.6" fill="none" stroke="#0f6cb8" stroke-width="3.2"/>
<path d="M1012.5 344.8 L916.5 413.2" fill="none" stroke="#1e96ff" stroke-width="5.4"/>
<path d="M1012.5 344.8 L916.5 413.2" fill="none" stroke="#0f6cb8" stroke-width="3.2"/>
<path d="M867 326.6 L876.1 335.3 L903.2 331.2ZM903.2 331.2 L912.4 340 L939.5 335.9ZM939.5 335.9 L948.6 344.6 L975.8 340.5ZM975.8 340.5 L984.9 349.3 L1012 345.2Z" fill="#0f6cb8"/>
<path d="M867 326.6 L876.1 335.3 L903.2 331.2 L912.4 340 L939.5 335.9 L948.6 344.6 L975.8 340.5 L984.9 349.3 L1012 345.2" fill="none" stroke="#c888ea" stroke-width="1.7" stroke-linejoin="round"/>
<path d="M772 394.2 L799.1 390.1 L808.2 398.9ZM808.2 398.9 L835.4 394.8 L844.5 403.5ZM844.5 403.5 L871.6 399.4 L880.8 408.2ZM880.8 408.2 L907.9 404.1 L917 412.8Z" fill="#0f6cb8"/>
<path d="M772 394.2 L799.1 390.1 L808.2 398.9 L835.4 394.8 L844.5 403.5 L871.6 399.4 L880.8 408.2 L907.9 404.1 L917 412.8" fill="none" stroke="#c888ea" stroke-width="1.7" stroke-linejoin="round"/>
<path d="M868 326.3 L860.5 338.7 L836 349Z" fill="#0f6cb8"/>
<path d="M868 326.3 L860.5 338.7 L836 349" fill="none" stroke="#c888ea" stroke-width="1.7" stroke-linejoin="round"/>
<path d="M1012 344.8 L987.5 355.1 L980 367.6Z" fill="#0f6cb8"/>
<path d="M1012 344.8 L987.5 355.1 L980 367.6" fill="none" stroke="#c888ea" stroke-width="1.7" stroke-linejoin="round"/>
<path d="M836 349 L828.5 361.5 L804 371.8Z" fill="#0f6cb8"/>
<path d="M836 349 L828.5 361.5 L804 371.8" fill="none" stroke="#c888ea" stroke-width="1.7" stroke-linejoin="round"/>
<path d="M980 367.6 L955.5 377.9 L948 390.3Z" fill="#0f6cb8"/>
<path d="M980 367.6 L955.5 377.9 L948 390.3" fill="none" stroke="#c888ea" stroke-width="1.7" stroke-linejoin="round"/>
<path d="M804 371.8 L796.5 384.3 L772 394.6Z" fill="#0f6cb8"/>
<path d="M804 371.8 L796.5 384.3 L772 394.6" fill="none" stroke="#c888ea" stroke-width="1.7" stroke-linejoin="round"/>
<path d="M948 390.3 L923.5 400.6 L916 413.1Z" fill="#0f6cb8"/>
<path d="M948 390.3 L923.5 400.6 L916 413.1" fill="none" stroke="#c888ea" stroke-width="1.7" stroke-linejoin="round"/>
<path d="M769.5 394.3 L918.5 413.4 L918.5 419.9 L769.5 400.8Z" fill="#0f6cb8"/>
<path d="M769.5 400.8 L918.5 419.9" fill="none" stroke="#1e96ff" stroke-width="1.2"/>
<path d="M769.5 394.3 L918.5 413.4" fill="none" stroke="#1e96ff" stroke-width="1.2"/>
<path d="M1016.5 343.7 L916.5 414.9 L916.5 421.4 L1016.5 350.2Z" fill="#0b2a48"/>
<path d="M1016.5 350.2 L916.5 421.4" fill="none" stroke="#1e96ff" stroke-width="1.3"/>
<path d="M1016.5 343.7 L916.5 414.9" fill="none" stroke="#1e96ff" stroke-width="1.3"/>
<path d="M1008.2 351.1L1008.2 354.6M999.8 357L999.8 360.5M991.5 363L991.5 366.5M983.2 368.9L983.2 372.4M974.8 374.8L974.8 378.3M966.5 380.8L966.5 384.3M958.2 386.7L958.2 390.2M949.8 392.6L949.8 396.1M941.5 398.6L941.5 402.1M933.2 404.5L933.2 408M924.8 410.4L924.8 413.9" fill="none" stroke="#1878d0" stroke-width="0.8"/>
<path d="M921.5 346.6 L982.5 354.4" fill="none" stroke="#1e96ff" stroke-width="4.4"/>
<path d="M921.5 346.6 L982.5 354.4" fill="none" stroke="#0f6cb8" stroke-width="2.6"/>
<path d="M833.5 362.2 L897.5 370.4" fill="none" stroke="#1e96ff" stroke-width="4.4"/>
<path d="M833.5 362.2 L897.5 370.4" fill="none" stroke="#0f6cb8" stroke-width="2.6"/>
<rect x="1007.3" y="344.8" width="10.4" height="101" fill="#b45200"/>
<path d="M1007.8 344.8V445.8M1014.9 344.8V445.8M1017.2 344.8V445.8" stroke="#ff8000" stroke-width="1" fill="none"/>
<rect x="975.3" y="367.6" width="10.4" height="101" fill="#b45200"/>
<path d="M975.8 367.6V468.6M982.9 367.6V468.6M985.2 367.6V468.6" stroke="#ff8000" stroke-width="1" fill="none"/>
<rect x="943.3" y="390.4" width="10.4" height="101" fill="#b45200"/>
<path d="M943.8 390.4V491.4M950.9 390.4V491.4M953.2 390.4V491.4" stroke="#ff8000" stroke-width="1" fill="none"/>
<rect x="766.3" y="394.6" width="10.4" height="101" fill="#b45200"/>
<path d="M766.8 394.6V495.6M773.9 394.6V495.6M776.2 394.6V495.6" stroke="#ff8000" stroke-width="1" fill="none"/>
<rect x="911.3" y="413.2" width="10.4" height="101" fill="#b45200"/>
<path d="M911.8 413.2V514.2M918.9 413.2V514.2M921.2 413.2V514.2" stroke="#ff8000" stroke-width="1" fill="none"/>
<rect x="862.3" y="196.1" width="10.4" height="130.1" fill="#b45200"/>
<path d="M862.8 196.1V326.2M869.9 196.1V326.2M872.2 196.1V326.2" stroke="#ff8000" stroke-width="1" fill="none"/>
<rect x="1007.3" y="214.7" width="10.4" height="130.1" fill="#b45200"/>
<path d="M1007.8 214.7V344.8M1014.9 214.7V344.8M1017.2 214.7V344.8" stroke="#ff8000" stroke-width="1" fill="none"/>
<rect x="830.3" y="218.9" width="10.4" height="130.1" fill="#b45200"/>
<path d="M830.8 218.9V349M837.9 218.9V349M840.2 218.9V349" stroke="#ff8000" stroke-width="1" fill="none"/>
<rect x="975.3" y="237.5" width="10.4" height="130.1" fill="#b45200"/>
<path d="M975.8 237.5V367.6M982.9 237.5V367.6M985.2 237.5V367.6" stroke="#ff8000" stroke-width="1" fill="none"/>
<rect x="798.3" y="241.7" width="10.4" height="130.1" fill="#b45200"/>
<path d="M798.8 241.7V371.8M805.9 241.7V371.8M808.2 241.7V371.8" stroke="#ff8000" stroke-width="1" fill="none"/>
<rect x="943.3" y="260.3" width="10.4" height="130.1" fill="#b45200"/>
<path d="M943.8 260.3V390.4M950.9 260.3V390.4M953.2 260.3V390.4" stroke="#ff8000" stroke-width="1" fill="none"/>
<rect x="766.3" y="264.5" width="10.4" height="130.1" fill="#b45200"/>
<path d="M766.8 264.5V394.6M773.9 264.5V394.6M776.2 264.5V394.6" stroke="#ff8000" stroke-width="1" fill="none"/>
<rect x="911.3" y="283.1" width="10.4" height="130.1" fill="#b45200"/>
<path d="M911.8 283.1V413.2M918.9 283.1V413.2M921.2 283.1V413.2" stroke="#ff8000" stroke-width="1" fill="none"/>
<path d="M771.5 394.6 L916.5 283.1" fill="none" stroke="#a870d2" stroke-width="4.2" stroke-linecap="butt"/>
<path d="M771.5 394.6 L916.5 283.1" fill="none" stroke="#cc98ee" stroke-width="2.2"/>
<path d="M916.5 413.2 L771.5 264.5" fill="none" stroke="#a870d2" stroke-width="4.2" stroke-linecap="butt"/>
<path d="M916.5 413.2 L771.5 264.5" fill="none" stroke="#cc98ee" stroke-width="2.2"/>
<path d="M950 277 L1008 341" fill="none" stroke="#a870d2" stroke-width="4.2" stroke-linecap="butt"/>
<path d="M950 277 L1008 341" fill="none" stroke="#cc98ee" stroke-width="2.2"/>
<rect x="1007.3" y="214.7" width="10.4" height="130.1" fill="#b45200"/>
<path d="M1007.8 214.7V344.8M1014.9 214.7V344.8M1017.2 214.7V344.8" stroke="#ff8000" stroke-width="1" fill="none"/>
<rect x="975.3" y="237.5" width="10.4" height="130.1" fill="#b45200"/>
<path d="M975.8 237.5V367.6M982.9 237.5V367.6M985.2 237.5V367.6" stroke="#ff8000" stroke-width="1" fill="none"/>
<rect x="943.3" y="260.3" width="10.4" height="130.1" fill="#b45200"/>
<path d="M943.8 260.3V390.4M950.9 260.3V390.4M953.2 260.3V390.4" stroke="#ff8000" stroke-width="1" fill="none"/>
<rect x="766.3" y="264.5" width="10.4" height="130.1" fill="#b45200"/>
<path d="M766.8 264.5V394.6M773.9 264.5V394.6M776.2 264.5V394.6" stroke="#ff8000" stroke-width="1" fill="none"/>
<rect x="911.3" y="283.1" width="10.4" height="130.1" fill="#b45200"/>
<path d="M911.8 283.1V413.2M918.9 283.1V413.2M921.2 283.1V413.2" stroke="#ff8000" stroke-width="1" fill="none"/>
<clipPath id="c14"><path d="M867.5 196.1 L1012.5 214.7 L916.5 283.1 L771.5 264.5Z" clip-rule="evenodd"/></clipPath>
<g clip-path="url(#c14)">
<path d="M867.5 196.1 L1012.5 214.7 L916.5 283.1 L771.5 264.5Z" fill="#08c866"/>
<path d="M864.3 198.4L1009.3 217M857.8 203L1002.8 221.6M851.3 207.6L996.3 226.3M844.8 212.3L989.8 230.9M838.3 216.9L983.3 235.5M831.8 221.5L976.8 240.2M825.3 226.1L970.3 244.8M818.8 230.8L963.8 249.4M812.3 235.4L957.3 254M805.8 240L950.8 258.7M799.3 244.7L944.3 263.3M792.8 249.3L937.8 267.9M786.3 253.9L931.3 272.5M779.8 258.5L924.8 277.2M773.3 263.2L918.3 281.8" fill="none" stroke="#00ff84" stroke-width="2.3"/>
</g>
<path d="M903.8 200.8L807.8 269.1M940 205.4L844 273.8M976.2 210.1L880.2 278.4" fill="none" stroke="#06301c" stroke-width="0.9" stroke-dasharray="3.5 8"/>
<path d="M867.5 196.1 L1012.5 214.7" fill="none" stroke="#1e96ff" stroke-width="5.4"/>
<path d="M867.5 196.1 L1012.5 214.7" fill="none" stroke="#0f6cb8" stroke-width="3.2"/>
<path d="M835.5 218.9 L980.5 237.5" fill="none" stroke="#1e96ff" stroke-width="5.4"/>
<path d="M835.5 218.9 L980.5 237.5" fill="none" stroke="#0f6cb8" stroke-width="3.2"/>
<path d="M803.5 241.7 L948.5 260.3" fill="none" stroke="#1e96ff" stroke-width="5.4"/>
<path d="M803.5 241.7 L948.5 260.3" fill="none" stroke="#0f6cb8" stroke-width="3.2"/>
<path d="M771.5 264.5 L916.5 283.1" fill="none" stroke="#1e96ff" stroke-width="5.4"/>
<path d="M771.5 264.5 L916.5 283.1" fill="none" stroke="#0f6cb8" stroke-width="3.2"/>
<path d="M867.5 196.1 L771.5 264.5" fill="none" stroke="#1e96ff" stroke-width="5.4"/>
<path d="M867.5 196.1 L771.5 264.5" fill="none" stroke="#0f6cb8" stroke-width="3.2"/>
<path d="M1012.5 214.7 L916.5 283.1" fill="none" stroke="#1e96ff" stroke-width="5.4"/>
<path d="M1012.5 214.7 L916.5 283.1" fill="none" stroke="#0f6cb8" stroke-width="3.2"/>
<path d="M867 196.5 L876.1 205.2 L903.2 201.1ZM903.2 201.1 L912.4 209.9 L939.5 205.8ZM939.5 205.8 L948.6 214.5 L975.8 210.4ZM975.8 210.4 L984.9 219.2 L1012 215.1Z" fill="#0f6cb8"/>
<path d="M867 196.5 L876.1 205.2 L903.2 201.1 L912.4 209.9 L939.5 205.8 L948.6 214.5 L975.8 210.4 L984.9 219.2 L1012 215.1" fill="none" stroke="#c888ea" stroke-width="1.7" stroke-linejoin="round"/>
<path d="M772 264.1 L799.1 260 L808.2 268.8ZM808.2 268.8 L835.4 264.7 L844.5 273.4ZM844.5 273.4 L871.6 269.3 L880.8 278.1ZM880.8 278.1 L907.9 274 L917 282.7Z" fill="#0f6cb8"/>
<path d="M772 264.1 L799.1 260 L808.2 268.8 L835.4 264.7 L844.5 273.4 L871.6 269.3 L880.8 278.1 L907.9 274 L917 282.7" fill="none" stroke="#c888ea" stroke-width="1.7" stroke-linejoin="round"/>
<path d="M868 196.2 L860.5 208.6 L836 218.9Z" fill="#0f6cb8"/>
<path d="M868 196.2 L860.5 208.6 L836 218.9" fill="none" stroke="#c888ea" stroke-width="1.7" stroke-linejoin="round"/>
<path d="M1012 214.7 L987.5 225 L980 237.5Z" fill="#0f6cb8"/>
<path d="M1012 214.7 L987.5 225 L980 237.5" fill="none" stroke="#c888ea" stroke-width="1.7" stroke-linejoin="round"/>
<path d="M836 218.9 L828.5 231.4 L804 241.7Z" fill="#0f6cb8"/>
<path d="M836 218.9 L828.5 231.4 L804 241.7" fill="none" stroke="#c888ea" stroke-width="1.7" stroke-linejoin="round"/>
<path d="M980 237.5 L955.5 247.8 L948 260.2Z" fill="#0f6cb8"/>
<path d="M980 237.5 L955.5 247.8 L948 260.2" fill="none" stroke="#c888ea" stroke-width="1.7" stroke-linejoin="round"/>
<path d="M804 241.7 L796.5 254.2 L772 264.5Z" fill="#0f6cb8"/>
<path d="M804 241.7 L796.5 254.2 L772 264.5" fill="none" stroke="#c888ea" stroke-width="1.7" stroke-linejoin="round"/>
<path d="M948 260.2 L923.5 270.5 L916 283Z" fill="#0f6cb8"/>
<path d="M948 260.2 L923.5 270.5 L916 283" fill="none" stroke="#c888ea" stroke-width="1.7" stroke-linejoin="round"/>
<path d="M769.5 264.2 L918.5 283.3 L918.5 289.8 L769.5 270.7Z" fill="#0f6cb8"/>
<path d="M769.5 270.7 L918.5 289.8" fill="none" stroke="#1e96ff" stroke-width="1.2"/>
<path d="M769.5 264.2 L918.5 283.3" fill="none" stroke="#1e96ff" stroke-width="1.2"/>
<path d="M1016.5 213.6 L916.5 284.8 L916.5 291.3 L1016.5 220.1Z" fill="#0b2a48"/>
<path d="M1016.5 220.1 L916.5 291.3" fill="none" stroke="#1e96ff" stroke-width="1.3"/>
<path d="M1016.5 213.6 L916.5 284.8" fill="none" stroke="#1e96ff" stroke-width="1.3"/>
<path d="M1008.2 221L1008.2 224.5M999.8 226.9L999.8 230.4M991.5 232.9L991.5 236.4M983.2 238.8L983.2 242.3M974.8 244.7L974.8 248.2M966.5 250.7L966.5 254.2M958.2 256.6L958.2 260.1M949.8 262.5L949.8 266M941.5 268.5L941.5 272M933.2 274.4L933.2 277.9M924.8 280.3L924.8 283.8" fill="none" stroke="#1878d0" stroke-width="0.8"/>
<rect x="1007.3" y="213.7" width="10.4" height="9" fill="#b45200"/>
<path d="M1007.8 213.7V222.7M1014.9 213.7V222.7M1017.2 213.7V222.7" stroke="#ff8000" stroke-width="1" fill="none"/>
<rect x="975.3" y="236.5" width="10.4" height="9" fill="#b45200"/>
<path d="M975.8 236.5V245.5M982.9 236.5V245.5M985.2 236.5V245.5" stroke="#ff8000" stroke-width="1" fill="none"/>
<rect x="943.3" y="259.3" width="10.4" height="9" fill="#b45200"/>
<path d="M943.8 259.3V268.3M950.9 259.3V268.3M953.2 259.3V268.3" stroke="#ff8000" stroke-width="1" fill="none"/>
<rect x="766.3" y="263.5" width="10.4" height="9" fill="#b45200"/>
<path d="M766.8 263.5V272.5M773.9 263.5V272.5M776.2 263.5V272.5" stroke="#ff8000" stroke-width="1" fill="none"/>
<rect x="911.3" y="282.1" width="10.4" height="9" fill="#b45200"/>
<path d="M911.8 282.1V291.1M918.9 282.1V291.1M921.2 282.1V291.1" stroke="#ff8000" stroke-width="1" fill="none"/>
<path d="M288 776V856" stroke="#3c6fd2" stroke-width="2.2"/>
<path d="M291 860L323 838" stroke="#22c8a0" stroke-width="2"/>
<text x="281.5" y="771.5" font-family="Liberation Sans,sans-serif" font-size="16" fill="#767676">Z</text>
<text x="321" y="840" font-family="Liberation Sans,sans-serif" font-size="16" fill="#767676">Y</text>
</g></svg>
<div class="band" style="top:857px"></div>
<div class="band" style="top:887px"></div>
<div class="band" style="top:917px"></div>
<div class="cmd" style="top:858.5px">请先进入分析模型</div>
<div class="cmd" style="top:888.5px">分析线约束修改功能关闭</div>
<div class="cmd" style="top:918.5px">命令: <span style="letter-spacing:0.8px">pbbim.tool.struct.gybimtranstopm</span></div>
<div id="tabbar"><div class="act"></div>
<div class="tab" style="left:23px">文件</div>
<div class="tab" style="left:88px">轴网</div>
<div class="tab" style="left:148px">主构件</div>
<div class="tab" style="left:220px">附属构件</div>
<div class="tab" style="left:304px">设备基础</div>
<div class="tab" style="left:388px">协同</div>
<div class="tab" style="left:448px">荷载</div>
<div class="tab" style="left:508px">计算分析(体验版)</div>
<div class="tab" style="left:636px">钢节点设计</div>
<div class="tab" style="left:732px">图纸</div>
<div class="tab" style="left:792px">导入导出</div>
<div class="tab" style="left:876px">管理</div>
<div class="tab" style="left:936px">注释</div>
<div class="tab" style="left:996px">基本图形</div>
<div class="tab" style="left:1080px">帮助</div>
</div>
<div id="ribbon"></div>
<div id="grp"></div><div id="grpline"></div>
<div class="gl" style="left:48.5px">设计层</div>
<div class="gl" style="left:171px">计算</div>
<div class="gl" style="left:292px">结果</div>
<div class="rl" style="left:71px;top:71px">划分<br>设计层</div>
<div class="rl" style="left:129px;top:71px">生成<br>分析模型</div>
<div class="rl" style="left:177px;top:71px">计算<br>参数</div>
<div class="rl dis" style="left:219px;top:71px">计算</div>
<div class="rl" style="left:272px;top:71px">数检<br>定位</div>
<div class="rl" style="left:314px;top:71px">结果<br>查看</div>
<div id="redbox"></div>
<div class="rl dis" style="left:28.8px;top:71px">模型<br>检查</div>
<div class="sep" style="left:96px"></div>
<div class="sep" style="left:244px"></div>
<div class="sep" style="left:339px"></div>
<svg class="abs" style="left:13px;top:35px" width="32" height="30" viewBox="0 0 32 30">
<path d="M2 24 L7 14 L7.5 6.5 L10 5 L15 5 L15 13 L17 13 L17 3.5 L19.5 2 L25 2 L25 13 L29 13 L29 17" fill="none" stroke="#9db4c4" stroke-width="1"/>
<path d="M2 24 L7 14 L7.5 6.5 L10 5 L15 5 L15 13 L29 13 L29 17 L20 27 L2 27Z" fill="#e9f4f6" stroke="none"/>
<path d="M17 3.5 L19.5 2 L23 2 L23 13 L17 13Z" fill="#93d1d8"/><path d="M23 2 L25 2 L25 13 L23 13Z" fill="#a9c3d4"/>
<path d="M11 5 L15 5 L15 17 L11 18Z" fill="#cfe0e6"/>
<path d="M2 24 L2 27 L17 27" fill="none" stroke="#9db4c4" stroke-width="1"/>
<circle cx="23" cy="21" r="4.6" fill="#e3f3f3" stroke="#93d1d8" stroke-width="1"/><path d="M26.5 24.5 L30 28" stroke="#93d1d8" stroke-width="1.2"/>
<path d="M2 24 L7 14 L7.5 6.5 L10 5 L15 5" fill="none" stroke="#9db4c4" stroke-width="1"/>
</svg>
<svg class="abs" style="left:56px;top:35px" width="31" height="30" viewBox="0 0 31 30">
<g fill="#e4f4f6" stroke="#12476b" stroke-width="1.2" stroke-linejoin="round">
<path d="M1.5 19.5 L1.5 23 L15 28.5 L15 25Z" fill="#bcd3d6"/>
<path d="M1.5 12.5 L1.5 16 L15 21.5 L15 18 " fill="#bcd3d6"/>
<path d="M1.5 12.5 L15 18 L28.5 12.5" fill="none"/>
<path d="M1.5 19.5 L15 25 L17 24" fill="none"/>
<path d="M15 1.5 L28.5 6.5 L28.5 9.5 L15 15 L1.5 9.5 L1.5 6.5Z"/>
<path d="M1.5 6.5 L15 11.5 L28.5 6.5" fill="none"/>
<path d="M1.5 6.5 L1.5 9.5 L15 15 L15 11.5Z" fill="#bcd3d6"/>
</g>
<rect x="17" y="16" width="12" height="12.5" rx="2" fill="#fff" stroke="#12476b" stroke-width="1.2"/>
<path d="M20 19.5 H26 M20 22.3 H26 M20 25 H26" stroke="#1aa5ab" stroke-width="1.1"/>
</svg>
<svg class="abs" style="left:114px;top:35px" width="30" height="30" viewBox="0 0 30 30">
<g fill="none" stroke="#12476b" stroke-width="1.1" stroke-linejoin="round">
<path d="M6.5 1.5 V28.5 M23 1.5 V28.5 M1 5.5 H29 M1 14.5 H29"/>
<path d="M1 5.5 L6.5 14 L6.5 1.5 M29 5.5 L23 14 L23 1.5"/>
<path d="M6.5 5.5 Q14.7 14 23 5.5 M6.5 14.5 Q14.7 20 23 14.5 M6.5 1.5 Q9 12 11 16 M23 1.5 Q20.5 12 18.5 16"/>
<path d="M1 14.5 L6.5 28.5 M29 14.5 L23 28.5 M6.5 14.5 L1 14.5 M23 14.5 L29 14.5"/>
</g></svg>
<svg class="abs" style="left:165px;top:35px" width="27" height="30" viewBox="0 0 27 30">
<path d="M3 1.5 H18 L23.5 7 V26.5 Q23.5 28.5 21.5 28.5 H3 Q1 28.5 1 26.5 V3.5 Q1 1.5 3 1.5Z" fill="#fff" stroke="#12476b" stroke-width="1.2"/>
<path d="M3.5 4 H17 L21 8 V26 H3.5Z" fill="#dff3f6"/>
<path d="M5 8.5 H19 M5 12.5 H19 M5 16.5 H13 M5 20.5 H13" stroke="#1aa5ab" stroke-width="1.1"/>
<path d="M13.5 15.5 L16.5 17 L24.5 26 L22.5 28 L15 19Z" fill="#f6a11c"/><path d="M13 15 L16 16.4 L14.6 18.2Z" fill="#7a4a20"/><circle cx="24" cy="27.3" r="1.4" fill="#e8253c"/>
<path d="M16.5 17 L24.5 26" stroke="#fdd27a" stroke-width="0.8"/>
</svg>
<svg class="abs" style="left:212px;top:36px" width="18" height="28" viewBox="0 0 18 28">
<path d="M1.3 2.3 L16.3 14 L1.3 25.7Z" fill="#d0eef0" stroke="#a3dde0" stroke-width="1"/></svg>
<svg class="abs" style="left:257px;top:35px" width="30" height="30" viewBox="0 0 30 30">
<path d="M3.5 1.5 H26.5 Q28.5 1.5 28.5 3.5 V22 M18 28.5 H3.5 Q1.5 28.5 1.5 26.5 V3.5 Q1.5 1.5 3.5 1.5" fill="none" stroke="#12476b" stroke-width="1.2"/>
<path d="M3 3 H14.5 V27 H3Z" fill="#dff3f6"/><path d="M15.5 3 H27 V17 H15.5Z" fill="#eef9fa"/>
<path d="M15 1.5 V28.5" stroke="#12476b" stroke-width="1.2"/>
<path d="M18.5 6 H25.5 M18.5 9 H25.5 M18.5 12 H25.5" stroke="#12476b" stroke-width="1.1"/>
<circle cx="21" cy="21.5" r="4.6" fill="#cfe9ea" stroke="#1aa5ab" stroke-width="1.1"/><path d="M24.3 24.8 L28 28.3" stroke="#1aa5ab" stroke-width="1.3"/>
<text x="4.2" y="16.5" font-family="Liberation Sans,sans-serif" font-weight="bold" font-size="13.5" fill="#1aa5ab">S</text>
</svg>
<svg class="abs" style="left:301px;top:35px" width="29" height="30" viewBox="0 0 29 30">
<path d="M2 1.5 H19.5 L25 7 V17 M14 28.5 H2 V1.5" fill="none" stroke="#12476b" stroke-width="1.2"/>
<path d="M3.5 3.5 H18.5 L23 8 V17 H14.5 V27 H3.5Z" fill="#dff3f6"/>
<path d="M6 10 Q9 6 12 8.5 T19.5 9" fill="none" stroke="#1aa5ab" stroke-width="1.1"/>
<path d="M6 14.5 H8 M10 14.5 H19 M6 18 H8 M10 18 H13.5 M6 21.5 H8 M10 21.5 H13.5" stroke="#12476b" stroke-width="1.1"/>
<rect x="15.5" y="18" width="12" height="10.5" fill="#fff" stroke="#12476b" stroke-width="1.2"/>
<rect x="18.5" y="18" width="6" height="4.2" fill="#dff3f6" stroke="#12476b" stroke-width="1"/><rect x="19.5" y="25" width="3.6" height="3.5" fill="#fff" stroke="#12476b" stroke-width="1"/>
</svg>
<div id="panel"><div id="ptitle"><span style="left:9px;top:11px">模型检查</span><span style="left:257.5px;top:11.5px;font-size:13px">X</span></div></div>
<div class="cb" style="left:30px;top:182.3px"><svg width="10" height="10" viewBox="0 0 10 10" style="position:absolute;left:0;top:0"><path d="M1.5 5 L4 8 L8.5 1.5" fill="none" stroke="#555" stroke-width="1.8"/></svg></div><div class="cbt" style="left:44.2px;top:180.0px">错误</div>
<div class="cb" style="left:88.3px;top:182.3px"><svg width="10" height="10" viewBox="0 0 10 10" style="position:absolute;left:0;top:0"><path d="M1.5 5 L4 8 L8.5 1.5" fill="none" stroke="#555" stroke-width="1.8"/></svg></div><div class="cbt" style="left:102.5px;top:180.0px">警告</div>
<div class="cb" style="left:30px;top:210.3px"><svg width="10" height="10" viewBox="0 0 10 10" style="position:absolute;left:0;top:0"><path d="M1.5 5 L4 8 L8.5 1.5" fill="none" stroke="#555" stroke-width="1.8"/></svg></div><div class="cbt" style="left:44.2px;top:208.0px">附属构件不进行检查</div>
<div class="th" style="left:12.9px;width:78px">标高</div>
<div class="th" style="left:101.9px;width:98.8px">问题</div>
<div class="th" style="left:202px;width:57.9px">ID</div>
<div class="td" style="left:12.9px;width:78px;top:258.7px">4.000m</div>
<div class="td" style="left:101.9px;width:98.8px;top:258.7px">悬浮梁</div>
<div class="td" style="left:202px;width:57.9px;top:258.7px">556677</div>
<div class="td hl" style="left:12.9px;width:78px;top:278.7px">6.000m</div>
<div class="td hl" style="left:101.9px;width:98.8px;top:278.7px">悬空柱</div>
<div class="td hl" style="left:202px;width:57.9px;top:278.7px">889911</div>
<div class="td" style="left:12.9px;width:78px;top:298.7px">8.500m</div>
<div class="td" style="left:101.9px;width:98.8px;top:298.7px">柱重叠</div>
<div class="td" style="left:202px;width:57.9px;top:298.7px">334455</div>
<div class="td" style="left:12.9px;width:78px;top:318.7px">10.000m</div>
<div class="td" style="left:101.9px;width:98.8px;top:318.7px"></div>
<div class="td" style="left:202px;width:57.9px;top:318.7px"></div>
<div class="td" style="left:12.9px;width:78px;top:338.7px">12.000m</div>
<div class="td" style="left:101.9px;width:98.8px;top:338.7px"></div>
<div class="td" style="left:202px;width:57.9px;top:338.7px"></div>
<div class="td" style="left:12.9px;width:78px;top:358.7px"></div>
<div class="td" style="left:101.9px;width:98.8px;top:358.7px"></div>
<div class="td" style="left:202px;width:57.9px;top:358.7px"></div>
<div class="td" style="left:12.9px;width:78px;top:378.7px"></div>
<div class="td" style="left:101.9px;width:98.8px;top:378.7px"></div>
<div class="td" style="left:202px;width:57.9px;top:378.7px"></div>
<div class="td" style="left:12.9px;width:78px;top:398.7px"></div>
<div class="td" style="left:101.9px;width:98.8px;top:398.7px"></div>
<div class="td" style="left:202px;width:57.9px;top:398.7px"></div>
<div class="td" style="left:12.9px;width:78px;top:418.7px"></div>
<div class="td" style="left:101.9px;width:98.8px;top:418.7px"></div>
<div class="td" style="left:202px;width:57.9px;top:418.7px"></div>
<div class="td" style="left:12.9px;width:78px;top:438.7px"></div>
<div class="td" style="left:101.9px;width:98.8px;top:438.7px"></div>
<div class="td" style="left:202px;width:57.9px;top:438.7px"></div>
<div class="td" style="left:12.9px;width:78px;top:458.7px"></div>
<div class="td" style="left:101.9px;width:98.8px;top:458.7px"></div>
<div class="td" style="left:202px;width:57.9px;top:458.7px"></div>
<div class="td" style="left:12.9px;width:78px;top:478.7px"></div>
<div class="td" style="left:101.9px;width:98.8px;top:478.7px"></div>
<div class="td" style="left:202px;width:57.9px;top:478.7px"></div>
<div class="td" style="left:12.9px;width:78px;top:498.7px"></div>
<div class="td" style="left:101.9px;width:98.8px;top:498.7px"></div>
<div class="td" style="left:202px;width:57.9px;top:498.7px"></div>
<div class="td" style="left:12.9px;width:78px;top:518.7px"></div>
<div class="td" style="left:101.9px;width:98.8px;top:518.7px"></div>
<div class="td" style="left:202px;width:57.9px;top:518.7px"></div>
<div class="td" style="left:12.9px;width:78px;top:538.7px"></div>
<div class="td" style="left:101.9px;width:98.8px;top:538.7px"></div>
<div class="td" style="left:202px;width:57.9px;top:538.7px"></div>
<div class="td" style="left:12.9px;width:78px;top:558.7px"></div>
<div class="td" style="left:101.9px;width:98.8px;top:558.7px"></div>
<div class="td" style="left:202px;width:57.9px;top:558.7px"></div>
<div class="td" style="left:12.9px;width:78px;top:578.7px"></div>
<div class="td" style="left:101.9px;width:98.8px;top:578.7px"></div>
<div class="td" style="left:202px;width:57.9px;top:578.7px"></div>
<div class="td" style="left:12.9px;width:78px;top:598.7px"></div>
<div class="td" style="left:101.9px;width:98.8px;top:598.7px"></div>
<div class="td" style="left:202px;width:57.9px;top:598.7px"></div>
<div class="td" style="left:12.9px;width:78px;top:618.7px"></div>
<div class="td" style="left:101.9px;width:98.8px;top:618.7px"></div>
<div class="td" style="left:202px;width:57.9px;top:618.7px"></div>
<div class="td" style="left:12.9px;width:78px;top:638.7px"></div>
<div class="td" style="left:101.9px;width:98.8px;top:638.7px"></div>
<div class="td" style="left:202px;width:57.9px;top:638.7px"></div>
<div class="td" style="left:12.9px;width:78px;top:658.7px"></div>
<div class="td" style="left:101.9px;width:98.8px;top:658.7px"></div>
<div class="td" style="left:202px;width:57.9px;top:658.7px"></div>
<div class="td" style="left:12.9px;width:78px;top:678.7px"></div>
<div class="td" style="left:101.9px;width:98.8px;top:678.7px"></div>
<div class="td" style="left:202px;width:57.9px;top:678.7px"></div>
</div></body></html>
